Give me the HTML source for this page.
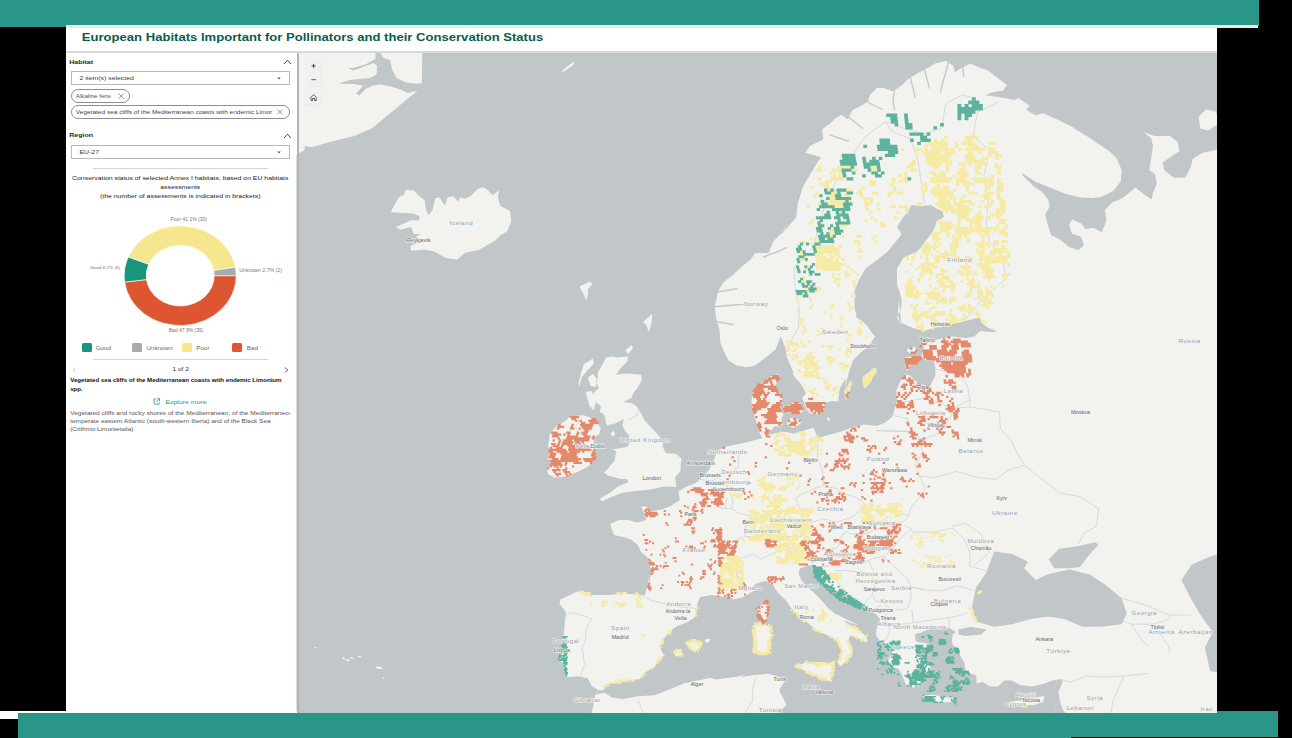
<!DOCTYPE html><html><head><meta charset="utf-8"><style>
html,body{margin:0;padding:0;}
body{width:1292px;height:738px;background:#000;position:relative;overflow:hidden;font-family:"Liberation Sans",sans-serif;}
.a{position:absolute;}
.t{position:absolute;white-space:nowrap;line-height:1;font-family:"Liberation Sans",sans-serif;}
</style></head><body>

<div class="a" style="left:0;top:0;width:1259px;height:25.5px;background:#2a9687"></div>
<div class="a" style="left:0;top:25px;width:66px;height:1.7px;background:#2a9687"></div>
<div class="a" style="left:66px;top:25.3px;width:1192px;height:2.7px;background:#e9e9e9"></div>
<div class="a" style="left:66px;top:28px;width:1151px;height:683px;background:#fff"></div>
<div class="a" style="left:0;top:710.7px;width:1217px;height:3px;background:#fff"></div>
<div class="a" style="left:0;top:713px;width:18px;height:6px;background:#fff"></div>
<div class="a" style="left:18px;top:713px;width:1053px;height:25px;background:#2a9687"></div>
<div class="a" style="left:1071px;top:713px;width:207px;height:23.8px;background:#2a9687"></div>
<div class="a" style="left:1217px;top:711px;width:61px;height:3px;background:#2a9687"></div>
<div class="t" style="left:81.80px;top:29.55px;font-size:13.08px;font-weight:bold;color:#0b5b4b;transform-origin:0 11.25px;transform:scaleY(0.89);">European Habitats Important for Pollinators and their Conservation Status</div>
<div class="a" style="left:66px;top:51px;width:1151px;height:1.8px;background:#d9d9d9"></div>
<div class="a" style="left:297.4px;top:52.5px;width:1.2px;height:660px;background:#b4b4b4"></div>
<svg class="a" style="left:298.6px;top:52.8px" width="918.4" height="660" viewBox="298.6 52.8 918.4 660"><rect x="290" y="40" width="940" height="700" fill="#c1c6c9"/><path d="M293.5 47.5 L422.1 47.5 L421.4 82.2 L418.7 85.5 L416.5 91.1 L405.3 100.1 L396.3 107.9 L385.2 116.8 L371.8 128.0 L353.9 135.8 L331.5 141.4 L311.4 147.0 L304.7 145.9 L303.6 150.3 L293.5 155.9Z" fill="#f2f2ef" /><path d="M405.2 189.6 L413.4 190.3 L418.8 195.7 L424.2 199.8 L425.5 209.3 L428.3 214.7 L432.3 209.3 L435.0 197.8 L439.1 197.1 L444.5 205.2 L447.2 197.1 L452.6 195.7 L458.1 201.2 L459.4 197.1 L464.8 198.5 L470.3 195.7 L477.0 189.0 L482.5 186.9 L487.9 190.3 L491.9 195.1 L498.7 190.3 L497.4 197.1 L500.1 205.9 L509.5 210.6 L510.9 221.5 L506.8 231.0 L500.1 235.0 L494.6 240.5 L478.4 249.9 L464.8 252.6 L456.7 259.4 L445.9 258.1 L433.7 251.3 L424.2 249.3 L410.6 250.6 L410.0 245.9 L418.8 241.8 L416.1 236.4 L420.1 233.7 L413.4 233.7 L410.6 226.9 L399.8 229.6 L395.7 226.9 L410.6 220.1 L418.8 220.1 L418.8 216.1 L413.4 213.4 L390.3 212.0 L393.0 206.6 L398.5 197.1 L403.9 194.4Z" fill="#f2f2ef" /><path d="M561.5 71.0 L566.0 67.0 L573.8 61.0 L573.0 64.5 L567.0 69.0 L562.5 72.0Z" fill="#f2f2ef" /><path d="M1198.1 116.9 L1205.7 109.3 L1215.2 111.2 L1220.0 122.6 L1207.6 130.2 L1200.0 128.3Z" fill="#f2f2ef" /><path d="M579.2 286.3 L589.3 281.4 L592.0 284.1 L587.5 289.0 L587.5 294.1 L585.9 300.8 L583.0 293.0 L580.4 289.0Z" fill="#f2f2ef" /><path d="M642.5 322.1 L651.9 313.6 L651.4 322.1 L648.5 332.1 L645.6 324.3Z" fill="#f2f2ef" /><path d="M624.9 350.1 L631.0 345.0 L633.0 347.0 L627.9 354.1Z" fill="#f2f2ef" /><path d="M605.6 357.2 L610.7 356.2 L616.7 357.2 L627.9 356.2 L626.9 361.3 L620.8 367.4 L615.7 374.5 L622.8 373.5 L631.0 373.5 L641.1 374.5 L641.1 380.6 L637.1 387.7 L633.0 392.8 L631.0 397.8 L622.8 401.9 L631.0 402.9 L636.1 406.0 L640.1 412.1 L644.2 420.0 L651.5 428.1 L657.6 434.3 L662.3 440.5 L662.3 446.7 L665.4 452.9 L676.2 453.9 L681.2 458.5 L680.2 464.8 L680.2 470.7 L674.7 477.2 L676.1 486.9 L663.8 486.4 L648.4 489.5 L632.9 491.1 L622.0 492.6 L609.7 497.3 L601.9 501.1 L598.8 498.8 L609.7 492.6 L617.4 486.4 L628.2 481.8 L626.7 478.7 L620.5 478.7 L608.1 475.6 L603.5 472.5 L606.6 469.4 L614.3 460.1 L615.9 450.8 L611.2 449.3 L617.4 448.2 L626.7 446.7 L629.8 442.0 L628.2 434.3 L625.1 431.2 L622.0 425.0 L623.6 418.8 L614.3 423.5 L606.6 425.0 L605.0 421.9 L605.6 420.0 L603.5 414.1 L599.5 412.1 L600.5 406.0 L595.4 401.9 L592.4 397.8 L593.4 392.8 L598.5 387.7 L596.4 383.6 L597.4 378.5 L597.4 372.4 L601.5 365.3 L603.5 361.3Z" fill="#f2f2ef" /><path d="M583.2 364.3 L592.4 358.2 L593.4 363.3 L585.2 372.4 L581.2 377.5 L579.1 386.7 L578.1 383.6 L580.2 374.5Z" fill="#f2f2ef" /><path d="M587.3 377.5 L592.4 373.5 L596.4 378.5 L595.4 386.7 L590.3 385.7Z" fill="#f2f2ef" /><path d="M585.2 391.7 L591.3 390.7 L595.4 401.9 L593.4 410.0 L589.3 406.0Z" fill="#f2f2ef" /><path d="M610.4 432.8 L613.5 430.4 L614.6 434.3 L611.5 436.6Z" fill="#f2f2ef" /><path d="M571.0 415.7 L583.3 415.0 L594.2 418.8 L600.4 428.1 L598.8 434.3 L592.6 437.4 L594.2 446.7 L595.0 456.0 L592.6 465.3 L595.7 452.4 L591.1 461.7 L588.0 466.3 L578.7 471.0 L567.9 475.6 L555.5 477.9 L547.7 474.1 L546.2 467.9 L550.8 464.8 L547.7 458.6 L549.3 449.3 L547.7 446.2 L549.3 434.3 L555.5 426.6 L563.2 421.9Z" fill="#f2f2ef" /><path d="M745.8 366.8 L736.8 365.6 L727.9 360.0 L723.4 351.1 L720.0 342.2 L718.9 328.8 L715.6 317.6 L714.5 306.4 L717.8 290.8 L723.4 281.8 L732.3 275.1 L741.3 266.2 L750.2 259.5 L754.7 252.8 L768.1 252.8 L772.6 241.6 L783.7 230.4 L788.0 221.5 L780.4 234.9 L796.0 217.0 L797.1 204.0 L802.7 186.1 L809.4 174.9 L816.1 163.8 L820.6 157.1 L804.9 152.6 L809.4 145.9 L822.8 139.2 L821.7 129.1 L829.5 123.5 L834.0 119.1 L840.7 114.6 L847.4 119.1 L851.9 110.1 L860.8 105.6 L867.5 101.2 L869.8 94.5 L876.5 87.8 L883.2 87.8 L892.1 91.1 L901.0 85.5 L907.8 78.8 L918.9 72.1 L927.9 67.6 L934.6 63.2 L945.8 60.9 L952.5 65.4 L954.7 72.1 L961.4 67.6 L970.3 63.2 L979.3 67.6 L987.6 70.4 L999.0 79.0 L1006.6 84.7 L1002.8 90.3 L991.4 92.2 L985.0 95.0 L1004.7 97.9 L1014.1 99.8 L1017.9 97.9 L1029.3 105.5 L1025.5 109.3 L1035.0 115.0 L1042.6 113.1 L1055.9 118.8 L1071.0 126.4 L1086.2 135.9 L1097.6 143.4 L1109.0 151.0 L1116.5 158.6 L1143.1 132.1 L1154.5 135.9 L1169.6 135.9 L1177.2 141.5 L1179.1 151.0 L1173.4 154.8 L1162.1 162.4 L1164.0 170.0 L1173.4 177.6 L1184.8 177.6 L1190.5 166.2 L1192.4 158.6 L1201.9 152.9 L1218.0 149.1 L1230.0 148.0 L1230.0 730.0 L588.0 730.0 L589.8 717.8 L592.6 707.4 L594.8 694.4 L596.3 691.8 L598.0 690.0 L591.5 685.7 L587.2 678.1 L578.5 676.0 L565.5 677.0 L563.3 664.0 L556.8 657.5 L561.2 646.7 L563.3 633.7 L564.4 622.9 L565.5 612.0 L559.0 603.3 L560.1 599.0 L569.8 594.7 L576.4 591.4 L591.5 594.7 L606.7 594.7 L624.0 593.6 L644.6 594.7 L647.9 581.7 L649.0 573.0 L648.3 584.2 L650.8 574.3 L649.5 564.4 L647.1 557.0 L640.9 552.0 L637.2 544.6 L631.0 539.6 L624.8 537.2 L613.6 534.7 L611.1 528.5 L609.9 523.5 L618.6 519.8 L627.2 519.8 L637.2 522.3 L645.8 519.8 L644.6 514.9 L640.9 506.2 L645.8 506.2 L649.5 511.1 L659.4 509.9 L669.3 506.2 L679.3 500.0 L678.1 491.0 L685.2 486.9 L695.4 482.8 L703.5 475.7 L708.6 469.6 L712.7 462.5 L714.7 456.4 L718.8 449.3 L726.9 446.3 L735.0 444.2 L741.1 443.2 L749.3 441.2 L757.4 439.1 L761.9 438.1 L758.8 431.9 L755.7 421.1 L752.6 411.8 L751.1 401.0 L751.6 395.4 L754.5 385.9 L762.1 382.1 L769.7 376.4 L777.3 374.0 L780.1 375.4 L793.0 372.0 L786.5 357.4 L784.9 347.6 L782.5 341.1 L780.0 336.3 L778.4 341.1 L775.2 349.3 L765.4 357.4 L754.0 365.5 L744.3 367.2 L737.8 363.9 L728.0 359.0Z" fill="#f2f2ef" /><path d="M378.0 49.8 L382.9 57.6 L389.6 59.8 L391.9 69.9 L396.3 77.7 L405.3 82.2 L414.2 83.3 L421.6 83.3 L417.6 90.4 L407.5 92.7 L398.6 88.9 L387.4 85.5 L378.5 84.4 L371.8 85.5 L365.1 88.9 L358.8 95.6 L355.7 93.4 L362.8 85.5 L353.9 83.7 L338.2 83.3 L349.4 79.9 L369.5 77.7 L376.2 74.4 L376.7 65.4 L372.9 62.7 L360.6 67.6 L352.8 70.3 L347.6 68.1 L353.4 67.6 L365.1 64.3 L375.1 58.7 L375.1 49.8Z" fill="#c1c6c9" /><ellipse cx="315" cy="647.3" rx="1.2" ry="0.8" transform="rotate(0 315 647.3)" fill="#f2f2ef"/><ellipse cx="343.2" cy="658.1" rx="1.6" ry="0.9" transform="rotate(30 343.2 658.1)" fill="#f2f2ef"/><ellipse cx="347.5" cy="659.9" rx="2.1" ry="0.9" transform="rotate(20 347.5 659.9)" fill="#f2f2ef"/><ellipse cx="351.6" cy="657.9" rx="2.0" ry="0.7" transform="rotate(20 351.6 657.9)" fill="#f2f2ef"/><ellipse cx="359.3" cy="656.3" rx="2.1" ry="0.8" transform="rotate(0 359.3 656.3)" fill="#f2f2ef"/><ellipse cx="378.6" cy="667.6" rx="3.6" ry="1.1" transform="rotate(10 378.6 667.6)" fill="#f2f2ef"/><ellipse cx="383" cy="677.8" rx="1.0" ry="0.8" transform="rotate(0 383 677.8)" fill="#f2f2ef"/><path d="M780.1 375.4 L776.3 382.1 L775.4 385.9 L777.3 391.6 L782.0 395.4 L781.1 403.0 L780.1 407.7 L783.0 414.3 L781.1 418.1 L782.0 423.8 L780.1 426.7 L774.4 425.7 L769.7 431.4 L766.8 435.0 L780.5 431.9 L786.7 431.9 L792.9 433.5 L799.1 431.9 L808.4 428.8 L813.0 427.3 L817.6 438.1 L826.9 435.0 L839.3 431.9 L851.7 427.3 L864.1 424.2 L876.5 425.7 L884.2 422.6 L892.0 416.4 L896.6 401.0 L895.8 390.7 L898.6 383.7 L901.4 378.1 L904.2 374.0 L909.8 375.3 L918.1 383.7 L929.3 386.5 L932.1 380.9 L934.9 375.3 L934.9 367.0 L933.5 360.0 L926.5 361.4 L920.9 355.8 L923.7 346.0 L918.1 346.0 L923.7 341.9 L937.7 339.1 L951.6 336.3 L965.6 337.7 L973.9 336.3 L979.5 330.7 L993.5 332.1 L996.3 330.7 L987.9 327.9 L980.9 322.3 L979.5 316.7 L965.6 320.9 L951.6 323.7 L937.7 326.5 L923.7 330.7 L912.6 327.9 L900.0 322.3 L897.2 314.0 L898.6 300.0 L901.0 324.3 L896.6 317.6 L901.0 306.4 L901.0 297.5 L896.6 284.1 L896.6 268.4 L903.3 257.2 L916.3 251.5 L921.8 246.1 L925.0 240.7 L931.5 233.1 L934.8 226.6 L935.8 221.2 L943.4 216.8 L942.3 211.4 L935.8 208.2 L930.4 204.9 L920.7 206.0 L910.9 204.9 L907.7 211.4 L902.3 217.9 L896.8 226.6 L901.2 234.2 L895.8 240.7 L887.1 251.5 L876.3 260.0 L865.3 268.4 L858.6 279.6 L854.1 290.8 L854.1 306.4 L856.3 317.6 L863.1 322.1 L867.5 326.5 L872.0 333.2 L874.9 336.3 L867.9 346.0 L858.1 354.4 L852.6 360.0 L848.4 372.6 L845.6 383.7 L844.2 397.7 L845.5 377.7 L839.3 388.6 L837.8 400.2 L839.9 401.1 L830.4 401.1 L824.7 403.0 L822.8 410.5 L817.1 414.3 L809.5 413.4 L805.7 408.6 L803.8 403.0 L801.9 397.3 L805.7 393.5 L802.9 387.8 L799.1 382.1 L795.3 378.3 L792.4 373.5 L793.2 370.8 L780.0 374.2Z" fill="#c1c6c9" /><path d="M1116.5 158.6 L1121.3 170.0 L1120.3 181.4 L1112.8 190.9 L1101.4 196.5 L1092.5 197.7 L1079.1 197.0 L1064.2 193.2 L1049.3 187.3 L1034.4 181.3 L1021.0 172.4 L1022.5 175.3 L1032.9 185.8 L1041.8 191.7 L1047.8 199.2 L1049.3 206.6 L1044.8 214.1 L1047.8 226.0 L1050.8 235.0 L1059.7 239.4 L1068.7 246.9 L1077.6 249.9 L1083.6 245.4 L1080.6 236.5 L1071.6 233.5 L1068.7 224.5 L1071.6 219.3 L1080.6 223.0 L1085.1 229.0 L1092.5 227.5 L1101.5 232.0 L1105.9 220.1 L1104.4 209.6 L1111.9 202.2 L1122.3 197.7 L1135.0 187.3 L1144.5 194.7 L1151.2 199.2 L1152.6 192.8 L1156.4 183.3 L1154.5 173.8 L1148.8 170.0 L1150.7 158.6 L1152.6 145.3 L1150.7 137.8 L1143.1 132.1Z" fill="#c1c6c9" /><path d="M596.3 691.8 L598.0 690.0 L602.4 690.0 L606.7 685.7 L604.1 685.8 L613.5 681.7 L627.1 680.3 L639.3 679.0 L644.7 672.2 L654.2 666.8 L658.2 660.0 L663.7 654.6 L661.0 650.5 L659.6 645.1 L663.7 638.3 L669.1 631.6 L675.9 626.2 L686.7 622.1 L694.8 616.7 L696.5 608.5 L697.5 602.0 L699.9 596.8 L710.7 594.7 L723.7 596.8 L734.6 599.0 L743.2 596.8 L754.1 590.3 L758.4 583.8 L767.1 583.8 L749.9 588.3 L756.1 583.3 L764.8 580.9 L772.2 584.6 L777.2 592.0 L784.6 599.4 L792.0 609.3 L799.4 616.8 L809.3 624.2 L816.8 631.0 L818.6 631.2 L829.8 636.2 L837.3 641.2 L841.0 647.4 L839.8 657.4 L837.3 662.4 L839.8 666.1 L844.8 662.4 L847.2 657.4 L852.2 652.4 L849.7 644.9 L847.2 641.2 L849.7 635.0 L859.7 638.7 L867.2 642.4 L866.0 636.2 L858.5 630.0 L849.7 625.0 L842.3 620.0 L858.9 625.4 L849.0 620.5 L841.5 616.8 L834.1 613.1 L826.7 606.9 L820.5 599.4 L813.1 592.0 L805.6 585.8 L800.7 579.6 L798.2 573.4 L799.4 568.5 L805.6 566.0 L809.3 564.8 L814.3 566.0 L816.8 572.2 L820.5 578.4 L829.2 585.8 L837.8 592.0 L846.5 597.0 L856.4 603.2 L867.6 609.3 L876.2 614.3 L879.9 619.3 L875.9 630.0 L875.8 635.8 L879.6 640.5 L884.3 643.6 L888.9 648.2 L892.0 651.3 L890.5 654.4 L888.2 659.1 L887.4 663.7 L892.0 666.8 L897.4 668.3 L899.8 671.4 L902.1 676.1 L904.4 682.0 L907.0 686.0 L910.0 684.0 L913.0 688.6 L916.0 683.0 L918.0 687.0 L920.0 681.0 L917.5 676.0 L916.8 677.6 L915.2 673.0 L916.8 668.3 L915.2 663.7 L921.4 665.2 L924.5 666.8 L926.1 669.1 L923.0 671.4 L924.5 675.3 L929.2 673.0 L930.7 668.3 L927.6 663.7 L924.5 660.6 L921.4 658.3 L916.8 656.0 L915.2 651.3 L916.0 648.2 L918.3 645.1 L923.0 646.7 L929.2 647.4 L932.3 646.7 L929.2 644.3 L924.5 642.8 L918.3 642.0 L915.2 640.5 L914.5 635.1 L916.8 632.7 L919.9 632.7 L923.0 631.2 L927.6 629.6 L933.8 628.1 L938.5 628.1 L944.7 627.3 L949.3 628.1 L952.4 629.6 L955.5 632.0 L952.4 634.3 L951.6 640.5 L952.4 645.1 L958.6 648.2 L960.1 656.0 L964.0 662.2 L964.8 668.3 L967.9 673.0 L975.0 674.5 L976.0 677.2 L976.0 683.3 L982.2 681.8 L989.9 686.4 L997.6 686.4 L1003.8 680.2 L1011.6 680.2 L1019.3 684.9 L1031.7 686.4 L1044.1 683.3 L1051.8 680.2 L1062.7 678.7 L1061.1 684.9 L1058.0 691.1 L1059.6 701.9 L1062.7 709.7 L1065.8 714.3 L1062.0 730.0 L778.0 730.0 L777.4 712.0 L783.6 707.3 L786.1 704.8 L782.4 697.3 L778.7 689.8 L783.6 682.4 L781.2 677.4 L772.4 674.9 L767.4 673.6 L752.5 674.9 L740.0 677.4 L745.4 674.9 L732.4 677.0 L715.1 679.2 L710.0 677.6 L697.5 680.3 L684.0 683.0 L667.7 689.8 L654.2 695.0 L637.0 696.1 L621.9 699.1 L611.0 697.0 L604.5 692.6 L594.8 694.4Z" fill="#c1c6c9" /><path d="M993.8 551.2 L1012.0 553.8 L1027.6 561.6 L1023.7 568.1 L1035.4 579.8 L1045.8 574.6 L1056.2 572.0 L1069.2 569.4 L1090.0 574.6 L1105.6 585.0 L1121.2 598.0 L1126.4 613.6 L1121.2 624.0 L1100.4 626.6 L1082.2 626.6 L1064.0 618.8 L1048.4 616.2 L1030.2 618.8 L1012.0 624.0 L993.8 626.6 L975.6 621.4 L971.7 605.8 L975.6 587.6 L986.0 572.0Z" fill="#c1c6c9" /><path d="M1048.4 559.0 L1058.8 548.6 L1077.0 546.0 L1095.2 542.1 L1097.8 544.7 L1087.4 556.4 L1079.6 566.8 L1069.2 568.1 L1053.6 568.1Z" fill="#c1c6c9" /><path d="M1181.1 579.8 L1191.5 564.2 L1209.7 556.4 L1230.0 550.0 L1230.0 675.0 L1209.7 670.8 L1204.5 647.4 L1212.3 631.8 L1199.3 613.6 L1188.9 595.4Z" fill="#c1c6c9" /><path d="M958.0 629.2 L970.4 626.6 L986.0 629.2 L980.8 634.4 L965.2 635.7 L958.0 634.4Z" fill="#c1c6c9" /><path d="M947.9 62.5 L946.1 69.3 L942.7 81.5 L940.1 91.9 M960.8 57.2 L961.8 64.1 L963.5 76.3 M894.1 83.2 L894.1 90.2 L892.4 100.6 L894.1 109.3 M909.7 76.4 L911.4 83.2 L914.9 97.1 M865.3 100.8 L871.5 104.0 L882.0 109.3 M763.1 256.9 L769.6 254.2 L777.7 251.5 L785.9 247.4 M708.6 307.0 L715.6 306.4 L727.9 305.3 L743.5 304.2 M712.1 320.8 L719.0 322.0 L732.3 324.3 M716.5 292.0 L723.4 290.8 L736.8 288.5 M923.2 66.2 L925.0 73.0 L929.0 88.0 M846.5 115.6 L852.0 120.0 L862.0 128.0 M829.4 134.8 L836.0 137.0 L848.0 141.0" fill="none" stroke="#c1c6c9" stroke-width="1.3" stroke-linecap="round"/><path d="M783.0 406.7 L789.6 404.8 L794.3 402.0 L801.0 403.0 L801.9 406.7 L802.9 410.5 L799.1 414.3 L794.3 413.4 L786.7 412.4 L783.0 410.5Z" fill="#f2f2ef" /><path d="M786.7 421.0 L790.5 418.1 L798.1 419.1 L801.9 421.0 L797.2 425.7 L790.5 426.7 L786.7 423.8Z" fill="#f2f2ef" /><path d="M826.6 416.7 L829.0 417.2 L829.4 420.5 L827.4 420.5Z" fill="#f2f2ef" /><path d="M844.2 390.7 L851.2 379.5 L849.8 389.3 L845.6 400.5Z" fill="#f2f2ef" /><path d="M862.3 376.7 L874.9 367.0 L876.3 371.2 L867.9 383.7 L863.7 387.9Z" fill="#f2f2ef" /><path d="M905.1 357.1 L919.3 355.7 L920.7 359.8 L913.9 364.6 L908.5 365.2 L907.1 370.7 L905.1 367.9Z" fill="#f2f2ef" /><path d="M906.4 349.0 L913.9 346.3 L917.3 350.3 L912.5 353.7 L907.1 351.7Z" fill="#f2f2ef" /><path d="M753.7 625.0 L762.4 622.5 L769.9 627.5 L771.2 635.0 L768.7 642.4 L768.7 651.2 L761.2 653.7 L753.7 651.2 L755.0 642.4 L753.7 633.7Z" fill="#f2f2ef" /><path d="M757.3 608.1 L766.0 600.7 L767.2 605.6 L766.0 619.3 L763.5 621.7 L758.6 616.8 L757.3 611.8Z" fill="#f2f2ef" /><path d="M796.1 666.1 L804.8 662.4 L814.8 664.3 L824.8 663.6 L833.5 662.4 L832.3 669.9 L831.0 674.9 L829.8 681.1 L822.3 678.6 L813.6 674.9 L802.4 669.9Z" fill="#f2f2ef" /><path d="M686.7 643.0 L693.0 639.7 L700.9 643.5 L697.0 650.5 L690.0 648.0Z" fill="#f2f2ef" /><path d="M704.3 639.5 L710.0 638.3 L709.0 642.0 L705.0 642.4Z" fill="#f2f2ef" /><path d="M673.8 652.0 L679.0 649.9 L680.6 654.0 L675.0 656.6Z" fill="#f2f2ef" /><path d="M922.6 695.2 L933.1 694.5 L943.6 697.1 L955.4 697.1 L952.8 701.7 L941.0 702.4 L929.1 700.4 L923.9 699.1Z" fill="#f2f2ef" /><path d="M1008.5 701.9 L1019.3 700.4 L1028.6 698.8 L1034.8 697.3 L1044.1 695.7 L1042.5 701.9 L1033.3 705.0 L1019.3 705.0 L1010.0 705.0Z" fill="#f2f2ef" /><path d="M819.8 688.6 L824.2 690.5 L824.8 692.6 L821.7 692.1Z" fill="#f2f2ef" /><path d="M786.0 348.5 L798.0 327.2 L799.1 309.4 L794.7 288.9 L793.6 267.7 L813.3 245.8 L819.8 223.1 L825.3 199.5 L839.5 175.0 L855.9 149.5 L864.6 136.3 L885.4 121.4 M924.7 204.3 L921.4 187.4 L918.1 162.4 L910.5 138.9 L890.8 130.9 L885.4 121.4 M885.4 121.4 L903.9 128.2 L923.6 133.6 L941.1 128.2 L945.4 103.4 L961.8 94.9 L973.8 97.7 L977.1 111.8 L989.1 106.2 L998.9 100.6 M977.1 111.8 L972.7 136.3 L989.1 149.5 L983.6 175.0 L988.0 199.5 L985.8 223.1 L989.1 241.3 L1002.2 256.8 L1005.5 278.4 L981.5 299.2 L965.1 319.4 M967.3 340.8 L961.8 350.4 L962.9 367.2 L961.8 376.3 M961.8 376.3 L945.4 370.8 L934.5 369.0 L926.9 370.8 M961.8 376.3 L967.3 387.2 L969.4 399.6 L956.3 406.6 L952.0 408.3 M952.0 408.3 L940.0 403.1 L923.6 397.8 L907.2 401.3 L891.4 402.2 M952.0 408.3 L949.8 418.6 L942.1 427.1 L941.1 432.2 L923.6 438.8 L918.1 437.2 M893.0 415.2 L907.2 418.6 L910.5 430.5 L918.1 437.2 M875.5 430.5 L910.5 431.3 M918.1 437.2 L922.5 452.0 L914.8 464.9 L919.2 476.0 M919.2 476.0 L924.7 488.5 L920.3 496.1 L910.5 506.8 L908.3 515.8 M908.3 515.8 L890.8 509.8 L874.4 509.8 L866.8 506.8 L861.3 500.7 L852.6 496.1 L841.7 493.1 L836.2 488.5 L823.1 485.4 M823.1 485.4 L822.0 469.6 L816.6 456.8 L817.7 445.4 L816.6 438.8 M755.4 423.7 L769.6 423.7 M740.1 448.7 L737.9 460.1 L737.9 466.5 L729.2 472.8 L728.1 482.2 L727.0 488.5 M727.0 488.5 L731.4 496.1 L732.5 503.8 L731.4 508.3 L737.9 512.8 L751.0 515.8 L744.5 527.6 L744.5 536.3 M744.5 536.3 L755.4 536.3 L765.2 536.3 L774.0 537.8 L787.1 536.3 L801.3 536.3 L807.8 526.1 L812.2 521.7 M812.2 521.7 L801.3 511.3 L794.7 497.7 L803.5 493.1 L817.7 486.9 L823.1 485.4 M812.2 521.7 L823.1 518.7 L836.2 521.7 L846.0 518.7 M846.0 518.7 L853.7 515.8 L860.2 508.3 L866.8 506.8 M848.2 533.4 L866.8 533.4 L875.5 529.1 L888.6 526.1 L902.8 521.7 L908.3 515.8 M848.2 530.5 L841.7 534.9 L838.4 545.0 L836.2 547.8 L819.8 550.7 L811.1 552.1 M811.1 552.1 L795.8 549.3 L781.6 546.4 L775.1 546.4 L766.3 540.7 M744.5 536.3 L737.9 539.2 L732.5 546.4 L728.1 553.5 L737.9 559.2 L753.2 553.5 L759.8 559.2 L775.1 552.1 L775.1 546.4 M737.9 559.2 L735.8 570.4 L736.8 580.0 L743.4 589.5 M688.8 483.8 L696.4 490.0 L706.3 496.1 L713.9 502.2 L721.6 508.3 L731.4 508.3 M698.6 479.1 L710.6 480.7 L717.2 477.5 L724.8 482.2 L727.0 488.5 M641.8 594.9 L650.6 600.3 L668.1 604.3 L681.2 607.0 L696.4 608.3 M565.4 614.9 L572.0 612.3 L585.1 616.2 L591.6 618.8 L586.2 626.6 L585.1 639.5 L581.8 648.4 L582.9 655.9 L584.0 664.6 L580.7 674.5 M811.1 552.1 L810.0 556.4 L812.2 564.8 M810.0 566.2 L828.6 566.2 L832.9 560.6 L839.5 553.5 L842.8 552.1 M842.8 552.1 L850.4 557.8 L863.5 562.0 L874.4 557.8 L883.2 556.4 M883.2 556.4 L893.0 547.8 L901.7 536.3 L911.6 529.1 L903.9 524.7 M911.6 532.0 L933.4 532.0 L952.0 527.6 L962.9 537.8 L969.4 552.1 L969.4 566.2 L985.8 570.4 M952.0 526.1 L965.1 523.2 L980.4 533.4 L989.1 552.1 L972.7 566.2 M883.2 556.4 L895.2 567.6 L907.2 578.6 L910.5 586.8 L923.6 589.5 L940.0 590.9 L956.3 585.5 L967.3 588.2 L973.8 590.9 M867.9 560.6 L873.3 570.4 L871.2 574.5 L874.4 582.7 L872.3 593.6 L874.4 600.3 M834.0 570.4 L846.0 570.4 L858.1 571.7 L869.0 573.1 M834.0 575.9 L839.5 585.5 L848.2 593.6 L853.7 600.3 L862.4 607.0 M862.4 607.0 L866.8 600.3 L871.2 594.9 M874.4 600.3 L883.2 603.0 L890.8 609.6 L900.6 609.6 L907.2 608.3 L910.5 597.6 L910.5 586.8 M872.3 613.6 L876.6 607.0 L881.0 605.6 M885.4 612.3 L885.4 622.7 L889.7 629.2 L886.5 638.2 L882.1 644.6 M889.7 626.6 L901.7 624.0 L912.7 622.7 L911.6 609.6 M912.7 622.7 L929.0 620.1 L948.7 617.5 L948.7 626.6 L945.4 629.2 M948.7 617.5 L961.8 614.9 L967.3 612.3 M919.2 476.0 L934.5 477.5 L956.3 471.2 L978.2 477.5 L995.7 479.1 L1008.8 469.6 L1024.0 464.9 M1024.0 464.9 L1043.7 480.7 L1060.1 493.1 L1078.6 496.1 L1098.3 508.3 L1096.1 526.1 L1083.0 533.4 L1078.6 543.6 M969.4 406.6 L998.9 411.8 L1000.0 428.8 L1010.9 440.5 L1016.4 452.0 L1024.0 464.9 M1113.6 599.0 L1120.1 597.6 L1147.4 605.6 L1169.3 614.9 L1191.1 614.9 M1120.1 620.1 L1131.1 624.0 L1138.7 635.6 L1147.4 645.8 M1131.1 624.0 L1152.9 624.0 L1169.3 618.8 L1169.3 614.9 M1152.9 624.0 L1159.5 633.1 L1168.2 645.8 L1169.3 653.4 M1056.8 679.4 L1071.0 681.8 L1085.2 675.7 L1103.8 676.9 L1123.4 675.7 L1147.4 673.3 M1054.6 705.9 L1054.6 721.2 M1123.4 675.7 L1112.5 701.1 L1109.2 720.0 M755.4 678.2 L752.1 689.1 L752.1 701.1 L744.5 713.0 L745.6 724.7 M637.5 699.9 L642.9 713.0 L647.3 730.5 M581.8 416.9 L575.2 427.1 L578.5 433.8 L586.2 435.5 L592.7 437.2 M627.6 420.3 L636.4 415.2 L639.7 406.6 M727.0 497.7 L724.8 503.8 L725.9 508.3 M962.9 367.2 L961.8 376.3 M969.4 399.6 L969.4 406.6 L952.0 408.3 M910.5 431.3 L875.5 430.5 M910.5 586.8 L923.6 589.5 M1053.5 689.1 L1056.8 679.4 M1054.6 721.2 L1044.8 724.7" fill="none" stroke="#cdd2d6" stroke-width="0.75" stroke-linejoin="round"/><path fill="#f5eba6" d="M943.7 135.3h3.7v3.4h-3.7zM964.3 135.3h14.0v3.4h-14.0zM933.6 138.4h3.7v3.4h-3.7zM940.4 138.4h3.7v3.4h-3.7zM964.3 138.4h7.1v3.4h-7.1zM927.0 141.5h20.6v3.3h-20.6zM954.1 141.5h3.6v3.3h-3.6zM960.9 141.5h13.8v3.3h-13.8zM988.1 141.5h7.0v3.3h-7.0zM923.8 144.5h3.6v3.3h-3.6zM930.6 144.5h17.1v3.3h-17.1zM954.2 144.5h3.6v3.3h-3.6zM967.7 144.5h10.4v3.3h-10.4zM900.5 147.5h3.6v3.3h-3.6zM913.9 147.5h7.0v3.3h-7.0zM924.0 147.5h3.6v3.3h-3.6zM930.8 147.5h23.8v3.3h-23.8zM957.7 147.5h3.6v3.3h-3.6zM964.4 147.5h20.4v3.3h-20.4zM987.9 147.5h7.0v3.3h-7.0zM920.9 150.5h20.3v3.3h-20.3zM944.3 150.5h10.3v3.3h-10.3zM967.8 150.5h3.6v3.3h-3.6zM977.8 150.5h3.6v3.3h-3.6zM987.8 150.5h10.3v3.3h-10.3zM914.5 153.5h3.6v3.3h-3.6zM924.5 153.5h26.9v3.3h-26.9zM964.5 153.5h10.2v3.3h-10.2zM987.8 153.5h3.6v3.3h-3.6zM994.4 153.5h6.9v3.3h-6.9zM924.7 156.5h23.4v3.3h-23.4zM964.5 156.5h10.2v3.3h-10.2zM981.1 156.5h6.9v3.3h-6.9zM994.3 156.5h3.6v3.3h-3.6zM911.8 159.5h3.5v3.3h-3.5zM925.0 159.5h26.6v3.3h-26.6zM964.5 159.5h20.0v3.3h-20.0zM908.8 162.4h6.8v3.2h-6.8zM928.5 162.4h13.4v3.2h-13.4zM944.9 162.4h6.8v3.2h-6.8zM958.0 162.4h6.8v3.2h-6.8zM967.9 162.4h3.5v3.2h-3.5zM974.4 162.4h13.4v3.2h-13.4zM994.1 162.4h3.5v3.2h-3.5zM817.7 165.4h3.5v3.2h-3.5zM837.3 165.4h13.3v3.2h-13.3zM869.9 165.4h6.8v3.2h-6.8zM905.9 165.4h6.8v3.2h-6.8zM932.0 165.4h6.8v3.2h-6.8zM945.0 165.4h3.5v3.2h-3.5zM961.4 165.4h3.5v3.2h-3.5zM974.4 165.4h6.8v3.2h-6.8zM994.0 165.4h6.8v3.2h-6.8zM815.2 168.3h6.7v3.2h-6.7zM831.5 168.3h10.0v3.2h-10.0zM850.9 168.3h6.7v3.2h-6.7zM870.4 168.3h6.7v3.2h-6.7zM909.4 168.3h6.7v3.2h-6.7zM945.2 168.3h3.5v3.2h-3.5zM958.2 168.3h6.7v3.2h-6.7zM974.4 168.3h3.5v3.2h-3.5zM997.2 168.3h3.5v3.2h-3.5zM828.9 171.2h3.5v3.2h-3.5zM838.6 171.2h3.5v3.2h-3.5zM903.3 171.2h3.5v3.2h-3.5zM929.1 171.2h6.7v3.2h-6.7zM938.8 171.2h6.7v3.2h-6.7zM955.0 171.2h13.2v3.2h-13.2zM974.4 171.2h6.7v3.2h-6.7zM997.0 171.2h3.5v3.2h-3.5zM832.8 174.1h3.5v3.2h-3.5zM839.3 174.1h3.5v3.2h-3.5zM897.2 174.1h3.5v3.2h-3.5zM903.6 174.1h3.5v3.2h-3.5zM932.6 174.1h13.1v3.2h-13.1zM951.9 174.1h3.5v3.2h-3.5zM958.3 174.1h9.9v3.2h-9.9zM990.5 174.1h3.5v3.2h-3.5zM817.5 177.0h3.5v3.2h-3.5zM830.3 177.0h13.1v3.2h-13.1zM891.1 177.0h3.5v3.2h-3.5zM900.8 177.0h6.7v3.2h-6.7zM929.6 177.0h22.7v3.2h-22.7zM955.2 177.0h9.9v3.2h-9.9zM971.2 177.0h22.7v3.2h-22.7zM996.8 177.0h3.5v3.2h-3.5zM824.6 179.9h6.6v3.2h-6.6zM869.2 179.9h6.6v3.2h-6.6zM891.6 179.9h3.4v3.2h-3.4zM897.9 179.9h3.4v3.2h-3.4zM904.3 179.9h3.4v3.2h-3.4zM929.8 179.9h19.4v3.2h-19.4zM955.3 179.9h13.0v3.2h-13.0zM974.4 179.9h19.4v3.2h-19.4zM996.8 179.9h3.4v3.2h-3.4zM819.0 182.7h9.8v3.1h-9.8zM869.7 182.7h6.6v3.1h-6.6zM888.8 182.7h3.4v3.1h-3.4zM920.5 182.7h6.6v3.1h-6.6zM936.4 182.7h3.4v3.1h-3.4zM955.4 182.7h3.4v3.1h-3.4zM961.8 182.7h12.9v3.1h-12.9zM984.0 182.7h9.8v3.1h-9.8zM996.7 182.7h6.6v3.1h-6.6zM810.2 185.6h3.4v3.1h-3.4zM822.9 185.6h6.6v3.1h-6.6zM860.8 185.6h3.4v3.1h-3.4zM892.4 185.6h3.4v3.1h-3.4zM923.9 185.6h3.4v3.1h-3.4zM933.4 185.6h6.6v3.1h-6.6zM942.9 185.6h6.6v3.1h-6.6zM965.0 185.6h3.4v3.1h-3.4zM987.1 185.6h3.4v3.1h-3.4zM996.6 185.6h6.6v3.1h-6.6zM826.7 188.4h3.4v3.1h-3.4zM833.0 188.4h3.4v3.1h-3.4zM845.6 188.4h6.5v3.1h-6.5zM858.2 188.4h3.4v3.1h-3.4zM892.7 188.4h3.4v3.1h-3.4zM921.0 188.4h6.5v3.1h-6.5zM930.5 188.4h19.1v3.1h-19.1zM952.5 188.4h3.4v3.1h-3.4zM965.1 188.4h3.4v3.1h-3.4zM983.9 188.4h3.4v3.1h-3.4zM996.5 188.4h6.5v3.1h-6.5zM814.9 191.2h3.4v3.1h-3.4zM830.6 191.2h6.5v3.1h-6.5zM855.6 191.2h6.5v3.1h-6.5zM871.2 191.2h6.5v3.1h-6.5zM886.9 191.2h6.5v3.1h-6.5zM896.3 191.2h6.5v3.1h-6.5zM921.3 191.2h3.4v3.1h-3.4zM930.7 191.2h22.2v3.1h-22.2zM968.2 191.2h9.6v3.1h-9.6zM983.9 191.2h9.6v3.1h-9.6zM996.4 191.2h3.4v3.1h-3.4zM812.6 194.0h3.4v3.1h-3.4zM828.1 194.0h6.5v3.1h-6.5zM843.7 194.0h6.5v3.1h-6.5zM859.3 194.0h3.4v3.1h-3.4zM887.3 194.0h3.4v3.1h-3.4zM934.0 194.0h18.9v3.1h-18.9zM962.1 194.0h3.4v3.1h-3.4zM980.8 194.0h9.6v3.1h-9.6zM996.3 194.0h3.4v3.1h-3.4zM828.8 196.8h6.5v3.1h-6.5zM862.9 196.8h9.6v3.1h-9.6zM937.3 196.8h9.6v3.1h-9.6zM949.7 196.8h6.5v3.1h-6.5zM959.1 196.8h3.4v3.1h-3.4zM983.9 196.8h6.5v3.1h-6.5zM996.3 196.8h6.5v3.1h-6.5zM829.5 199.6h15.7v3.1h-15.7zM848.0 199.6h3.3v3.1h-3.3zM863.5 199.6h3.3v3.1h-3.3zM869.6 199.6h3.3v3.1h-3.3zM937.5 199.6h12.6v3.1h-12.6zM953.0 199.6h3.3v3.1h-3.3zM959.1 199.6h12.6v3.1h-12.6zM980.8 199.6h3.3v3.1h-3.3zM990.0 199.6h3.3v3.1h-3.3zM999.3 199.6h6.4v3.1h-6.4zM817.9 202.4h3.3v3.1h-3.3zM827.1 202.4h15.6v3.1h-15.6zM864.0 202.4h6.4v3.1h-6.4zM876.3 202.4h3.3v3.1h-3.3zM916.2 202.4h6.4v3.1h-6.4zM934.7 202.4h15.6v3.1h-15.6zM953.1 202.4h9.5v3.1h-9.5zM968.5 202.4h6.4v3.1h-6.4zM986.9 202.4h6.4v3.1h-6.4zM999.2 202.4h6.4v3.1h-6.4zM806.4 205.1h3.3v3.0h-3.3zM833.9 205.1h9.4v3.0h-9.4zM864.5 205.1h3.3v3.0h-3.3zM889.0 205.1h6.4v3.0h-6.4zM898.2 205.1h9.4v3.0h-9.4zM937.9 205.1h15.5v3.0h-15.5zM956.3 205.1h12.5v3.0h-12.5zM977.7 205.1h3.3v3.0h-3.3zM983.8 205.1h6.4v3.0h-6.4zM999.1 205.1h6.4v3.0h-6.4zM865.0 207.9h3.3v3.0h-3.3zM877.2 207.9h3.3v3.0h-3.3zM904.6 207.9h3.3v3.0h-3.3zM941.2 207.9h30.7v3.0h-30.7zM996.0 207.9h9.4v3.0h-9.4zM838.3 210.6h3.3v3.0h-3.3zM844.3 210.6h3.3v3.0h-3.3zM868.6 210.6h3.3v3.0h-3.3zM895.9 210.6h3.3v3.0h-3.3zM905.0 210.6h3.3v3.0h-3.3zM944.4 210.6h3.3v3.0h-3.3zM950.5 210.6h18.4v3.0h-18.4zM977.8 210.6h3.3v3.0h-3.3zM995.9 210.6h9.3v3.0h-9.3zM956.7 213.3h12.3v3.0h-12.3zM974.8 213.3h6.3v3.0h-6.3zM989.9 213.3h12.3v3.0h-12.3zM869.6 216.0h3.3v3.0h-3.3zM893.7 216.0h3.3v3.0h-3.3zM956.8 216.0h12.3v3.0h-12.3zM971.8 216.0h12.3v3.0h-12.3zM986.8 216.0h3.3v3.0h-3.3zM995.8 216.0h3.3v3.0h-3.3zM810.3 218.7h3.2v3.0h-3.2zM816.3 218.7h3.2v3.0h-3.2zM864.1 218.7h3.2v3.0h-3.2zM873.1 218.7h3.2v3.0h-3.2zM938.9 218.7h3.2v3.0h-3.2zM956.9 218.7h3.2v3.0h-3.2zM965.9 218.7h15.2v3.0h-15.2zM998.8 218.7h6.2v3.0h-6.2zM808.1 221.4h3.2v3.0h-3.2zM820.0 221.4h3.2v3.0h-3.2zM879.6 221.4h3.2v3.0h-3.2zM936.2 221.4h15.1v3.0h-15.1zM957.0 221.4h3.2v3.0h-3.2zM968.9 221.4h12.2v3.0h-12.2zM998.7 221.4h6.2v3.0h-6.2zM838.5 224.0h9.1v3.0h-9.1zM880.0 224.0h6.2v3.0h-6.2zM939.4 224.0h15.1v3.0h-15.1zM957.2 224.0h3.2v3.0h-3.2zM969.0 224.0h3.2v3.0h-3.2zM974.9 224.0h6.2v3.0h-6.2zM995.7 224.0h3.2v3.0h-3.2zM1004.6 224.0h3.2v3.0h-3.2zM939.6 226.7h12.1v2.9h-12.1zM954.3 226.7h44.6v2.9h-44.6zM1001.6 226.7h6.2v2.9h-6.2zM828.0 229.4h6.1v2.9h-6.1zM939.8 229.4h9.1v2.9h-9.1zM954.5 229.4h35.5v2.9h-35.5zM992.7 229.4h3.2v2.9h-3.2zM998.6 229.4h6.1v2.9h-6.1zM828.7 232.0h6.1v2.9h-6.1zM931.2 232.0h9.0v2.9h-9.0zM945.8 232.0h3.2v2.9h-3.2zM954.6 232.0h14.9v2.9h-14.9zM978.0 232.0h3.2v2.9h-3.2zM983.9 232.0h6.1v2.9h-6.1zM998.5 232.0h9.0v2.9h-9.0zM829.4 234.6h3.2v2.9h-3.2zM841.0 234.6h3.2v2.9h-3.2zM855.6 234.6h6.1v2.9h-6.1zM873.1 234.6h3.2v2.9h-3.2zM931.4 234.6h6.1v2.9h-6.1zM946.0 234.6h3.2v2.9h-3.2zM951.8 234.6h3.2v2.9h-3.2zM957.7 234.6h3.2v2.9h-3.2zM963.5 234.6h3.2v2.9h-3.2zM981.0 234.6h3.2v2.9h-3.2zM1004.3 234.6h3.2v2.9h-3.2zM809.7 237.2h3.2v2.9h-3.2zM824.2 237.2h3.2v2.9h-3.2zM870.7 237.2h3.2v2.9h-3.2zM931.7 237.2h9.0v2.9h-9.0zM952.0 237.2h9.0v2.9h-9.0zM966.5 237.2h3.2v2.9h-3.2zM981.0 237.2h3.2v2.9h-3.2zM801.8 239.8h3.1v2.9h-3.1zM816.2 239.8h3.1v2.9h-3.1zM853.8 239.8h6.0v2.9h-6.0zM874.1 239.8h3.1v2.9h-3.1zM934.8 239.8h3.1v2.9h-3.1zM952.2 239.8h6.0v2.9h-6.0zM966.6 239.8h3.1v2.9h-3.1zM981.1 239.8h3.1v2.9h-3.1zM992.7 239.8h6.0v2.9h-6.0zM1001.3 239.8h6.0v2.9h-6.0zM796.8 242.4h3.1v2.9h-3.1zM808.3 242.4h6.0v2.9h-6.0zM831.4 242.4h3.1v2.9h-3.1zM857.3 242.4h3.1v2.9h-3.1zM923.5 242.4h6.0v2.9h-6.0zM932.2 242.4h3.1v2.9h-3.1zM937.9 242.4h3.1v2.9h-3.1zM949.4 242.4h8.9v2.9h-8.9zM975.4 242.4h14.6v2.9h-14.6zM992.6 242.4h6.0v2.9h-6.0zM814.8 245.0h20.3v2.9h-20.3zM837.8 245.0h3.1v2.9h-3.1zM920.9 245.0h17.5v2.9h-17.5zM949.6 245.0h8.9v2.9h-8.9zM978.3 245.0h6.0v2.9h-6.0zM986.9 245.0h3.1v2.9h-3.1zM1001.2 245.0h3.1v2.9h-3.1zM815.6 247.6h23.1v2.9h-23.1zM858.4 247.6h3.1v2.9h-3.1zM921.2 247.6h8.8v2.9h-8.8zM932.7 247.6h3.1v2.9h-3.1zM949.8 247.6h6.0v2.9h-6.0zM975.5 247.6h3.1v2.9h-3.1zM981.2 247.6h3.1v2.9h-3.1zM992.6 247.6h14.5v2.9h-14.5zM799.2 250.1h3.1v2.8h-3.1zM816.3 250.1h23.0v2.8h-23.0zM856.1 250.1h5.9v2.8h-5.9zM921.5 250.1h8.8v2.8h-8.8zM935.8 250.1h3.1v2.8h-3.1zM944.3 250.1h3.1v2.8h-3.1zM950.0 250.1h5.9v2.8h-5.9zM975.6 250.1h8.8v2.8h-8.8zM989.8 250.1h20.2v2.8h-20.2zM797.2 252.7h5.9v2.8h-5.9zM814.2 252.7h8.7v2.8h-8.7zM828.3 252.7h3.1v2.8h-3.1zM834.0 252.7h5.9v2.8h-5.9zM913.3 252.7h3.1v2.8h-3.1zM924.7 252.7h3.1v2.8h-3.1zM930.3 252.7h3.1v2.8h-3.1zM938.8 252.7h17.2v2.8h-17.2zM978.5 252.7h5.9v2.8h-5.9zM989.8 252.7h5.9v2.8h-5.9zM998.3 252.7h3.1v2.8h-3.1zM1006.8 252.7h3.1v2.8h-3.1zM803.6 255.2h3.1v2.8h-3.1zM814.9 255.2h11.5v2.8h-11.5zM829.0 255.2h5.9v2.8h-5.9zM837.5 255.2h3.1v2.8h-3.1zM857.2 255.2h3.1v2.8h-3.1zM905.2 255.2h3.1v2.8h-3.1zM910.8 255.2h3.1v2.8h-3.1zM919.3 255.2h3.1v2.8h-3.1zM924.9 255.2h3.1v2.8h-3.1zM933.4 255.2h14.4v2.8h-14.4zM953.2 255.2h5.9v2.8h-5.9zM964.4 255.2h5.9v2.8h-5.9zM978.6 255.2h14.4v2.8h-14.4zM995.5 255.2h14.4v2.8h-14.4zM801.6 257.7h3.1v2.8h-3.1zM815.6 257.7h17.1v2.8h-17.1zM835.3 257.7h3.1v2.8h-3.1zM840.9 257.7h3.1v2.8h-3.1zM905.6 257.7h3.1v2.8h-3.1zM911.2 257.7h3.1v2.8h-3.1zM925.2 257.7h3.1v2.8h-3.1zM933.7 257.7h5.9v2.8h-5.9zM942.1 257.7h3.1v2.8h-3.1zM953.3 257.7h8.7v2.8h-8.7zM967.4 257.7h5.9v2.8h-5.9zM978.6 257.7h28.4v2.8h-28.4zM816.4 260.3h22.6v2.8h-22.6zM925.5 260.3h3.0v2.8h-3.0zM933.9 260.3h5.8v2.8h-5.8zM956.3 260.3h3.0v2.8h-3.0zM961.9 260.3h8.6v2.8h-8.6zM978.7 260.3h3.0v2.8h-3.0zM984.3 260.3h22.6v2.8h-22.6zM814.3 262.8h30.9v2.8h-30.9zM909.1 262.8h3.0v2.8h-3.0zM920.2 262.8h14.2v2.8h-14.2zM964.8 262.8h3.0v2.8h-3.0zM976.0 262.8h14.2v2.8h-14.2zM1006.6 262.8h3.0v2.8h-3.0zM806.7 265.3h3.0v2.8h-3.0zM815.0 265.3h25.2v2.8h-25.2zM845.6 265.3h3.0v2.8h-3.0zM917.8 265.3h11.4v2.8h-11.4zM931.6 265.3h5.8v2.8h-5.8zM959.4 265.3h11.4v2.8h-11.4zM978.8 265.3h11.4v2.8h-11.4zM804.7 267.8h3.0v2.8h-3.0zM815.8 267.8h3.0v2.8h-3.0zM821.3 267.8h19.6v2.8h-19.6zM848.9 267.8h3.0v2.8h-3.0zM915.3 267.8h3.0v2.8h-3.0zM920.8 267.8h11.3v2.8h-11.3zM940.2 267.8h3.0v2.8h-3.0zM962.3 267.8h5.8v2.8h-5.8zM981.7 267.8h11.3v2.8h-11.3zM844.0 270.2h3.0v2.8h-3.0zM852.3 270.2h3.0v2.8h-3.0zM904.6 270.2h3.0v2.8h-3.0zM921.1 270.2h11.3v2.8h-11.3zM940.4 270.2h5.8v2.8h-5.8zM957.0 270.2h5.8v2.8h-5.8zM965.2 270.2h5.8v2.8h-5.8zM973.5 270.2h3.0v2.8h-3.0zM981.7 270.2h11.3v2.8h-11.3zM830.9 272.7h3.0v2.8h-3.0zM836.4 272.7h3.0v2.8h-3.0zM844.6 272.7h5.7v2.8h-5.7zM855.6 272.7h3.0v2.8h-3.0zM918.7 272.7h5.7v2.8h-5.7zM929.7 272.7h3.0v2.8h-3.0zM935.2 272.7h8.5v2.8h-8.5zM959.9 272.7h16.7v2.8h-16.7zM984.6 272.7h8.5v2.8h-8.5zM1001.0 272.7h8.5v2.8h-8.5zM801.5 275.2h3.0v2.7h-3.0zM831.6 275.2h3.0v2.7h-3.0zM845.2 275.2h3.0v2.7h-3.0zM910.8 275.2h3.0v2.7h-3.0zM919.0 275.2h3.0v2.7h-3.0zM935.4 275.2h3.0v2.7h-3.0zM940.9 275.2h8.4v2.7h-8.4zM965.5 275.2h3.0v2.7h-3.0zM981.9 275.2h13.9v2.7h-13.9zM1001.0 275.2h5.7v2.7h-5.7zM802.3 277.6h3.0v2.7h-3.0zM834.9 277.6h5.7v2.7h-5.7zM908.5 277.6h3.0v2.7h-3.0zM916.6 277.6h3.0v2.7h-3.0zM927.5 277.6h3.0v2.7h-3.0zM938.4 277.6h11.1v2.7h-11.1zM965.6 277.6h3.0v2.7h-3.0zM971.1 277.6h3.0v2.7h-3.0zM987.4 277.6h3.0v2.7h-3.0zM1003.7 277.6h3.0v2.7h-3.0zM800.3 280.0h5.7v2.7h-5.7zM832.9 280.0h3.0v2.7h-3.0zM851.9 280.0h3.0v2.7h-3.0zM906.1 280.0h5.7v2.7h-5.7zM917.0 280.0h3.0v2.7h-3.0zM935.9 280.0h8.4v2.7h-8.4zM946.8 280.0h5.7v2.7h-5.7zM960.3 280.0h3.0v2.7h-3.0zM968.5 280.0h5.7v2.7h-5.7zM836.2 282.5h3.0v2.7h-3.0zM852.4 282.5h3.0v2.7h-3.0zM906.5 282.5h5.7v2.7h-5.7zM938.9 282.5h5.7v2.7h-5.7zM949.7 282.5h5.7v2.7h-5.7zM965.9 282.5h8.4v2.7h-8.4zM976.7 282.5h3.0v2.7h-3.0zM807.3 284.9h2.9v2.7h-2.9zM812.6 284.9h2.9v2.7h-2.9zM836.9 284.9h2.9v2.7h-2.9zM853.0 284.9h2.9v2.7h-2.9zM904.2 284.9h11.0v2.7h-11.0zM928.4 284.9h2.9v2.7h-2.9zM939.1 284.9h16.4v2.7h-16.4zM968.7 284.9h11.0v2.7h-11.0zM990.3 284.9h2.9v2.7h-2.9zM1001.0 284.9h2.9v2.7h-2.9zM805.3 287.3h2.9v2.7h-2.9zM816.1 287.3h5.6v2.7h-5.6zM904.5 287.3h11.0v2.7h-11.0zM934.0 287.3h2.9v2.7h-2.9zM942.1 287.3h2.9v2.7h-2.9zM950.1 287.3h5.6v2.7h-5.6zM968.9 287.3h2.9v2.7h-2.9zM976.9 287.3h2.9v2.7h-2.9zM985.0 287.3h2.9v2.7h-2.9zM806.1 289.7h2.9v2.7h-2.9zM814.1 289.7h2.9v2.7h-2.9zM904.9 289.7h8.3v2.7h-8.3zM915.6 289.7h2.9v2.7h-2.9zM931.6 289.7h2.9v2.7h-2.9zM942.3 289.7h2.9v2.7h-2.9zM950.3 289.7h2.9v2.7h-2.9zM969.0 289.7h2.9v2.7h-2.9zM977.0 289.7h5.6v2.7h-5.6zM985.0 289.7h5.6v2.7h-5.6zM801.5 292.1h2.9v2.7h-2.9zM905.3 292.1h16.2v2.7h-16.2zM923.9 292.1h16.2v2.7h-16.2zM966.5 292.1h5.6v2.7h-5.6zM977.1 292.1h5.6v2.7h-5.6zM985.1 292.1h8.2v2.7h-8.2zM797.0 294.5h2.9v2.7h-2.9zM850.0 294.5h5.6v2.7h-5.6zM905.7 294.5h13.5v2.7h-13.5zM926.9 294.5h13.5v2.7h-13.5zM964.0 294.5h5.6v2.7h-5.6zM977.3 294.5h5.6v2.7h-5.6zM985.2 294.5h2.9v2.7h-2.9zM990.5 294.5h2.9v2.7h-2.9zM808.3 296.9h2.9v2.7h-2.9zM914.0 296.9h2.9v2.7h-2.9zM929.8 296.9h8.2v2.7h-8.2zM940.4 296.9h5.5v2.7h-5.5zM948.3 296.9h8.2v2.7h-8.2zM974.7 296.9h5.5v2.7h-5.5zM982.6 296.9h5.5v2.7h-5.5zM795.9 299.2h2.9v2.7h-2.9zM809.1 299.2h2.9v2.7h-2.9zM924.9 299.2h2.9v2.7h-2.9zM935.4 299.2h10.8v2.7h-10.8zM948.5 299.2h5.5v2.7h-5.5zM980.1 299.2h10.8v2.7h-10.8zM846.5 301.6h2.9v2.6h-2.9zM925.2 301.6h5.5v2.6h-5.5zM935.6 301.6h2.9v2.6h-2.9zM940.9 301.6h5.5v2.6h-5.5zM948.8 301.6h2.9v2.6h-2.9zM982.8 301.6h10.7v2.6h-10.7zM810.5 303.9h2.9v2.6h-2.9zM831.4 303.9h2.9v2.6h-2.9zM847.1 303.9h2.9v2.6h-2.9zM909.8 303.9h2.9v2.6h-2.9zM915.0 303.9h2.9v2.6h-2.9zM962.0 303.9h2.9v2.6h-2.9zM967.3 303.9h2.9v2.6h-2.9zM980.3 303.9h8.1v2.6h-8.1zM808.7 306.3h2.9v2.6h-2.9zM829.5 306.3h2.9v2.6h-2.9zM850.3 306.3h2.9v2.6h-2.9zM912.8 306.3h2.9v2.6h-2.9zM931.0 306.3h5.5v2.6h-5.5zM957.0 306.3h8.1v2.6h-8.1zM967.4 306.3h5.5v2.6h-5.5zM985.6 306.3h2.9v2.6h-2.9zM796.4 308.6h2.8v2.6h-2.8zM848.3 308.6h2.8v2.6h-2.8zM913.1 308.6h5.4v2.6h-5.4zM928.7 308.6h2.8v2.6h-2.8zM949.4 308.6h2.8v2.6h-2.8zM959.8 308.6h13.2v2.6h-13.2zM823.1 310.9h2.8v2.6h-2.8zM913.5 310.9h2.8v2.6h-2.8zM921.2 310.9h8.0v2.6h-8.0zM934.2 310.9h10.6v2.6h-10.6zM967.7 310.9h2.8v2.6h-2.8zM972.9 310.9h5.4v2.6h-5.4zM828.9 313.2h2.8v2.6h-2.8zM911.3 313.2h15.7v2.6h-15.7zM931.9 313.2h13.1v2.6h-13.1zM947.3 313.2h5.4v2.6h-5.4zM962.8 313.2h2.8v2.6h-2.8zM975.6 313.2h5.4v2.6h-5.4zM829.6 315.6h2.8v2.6h-2.8zM839.8 315.6h2.8v2.6h-2.8zM911.6 315.6h10.5v2.6h-10.5zM924.5 315.6h10.5v2.6h-10.5zM950.1 315.6h5.4v2.6h-5.4zM962.9 315.6h2.8v2.6h-2.8zM975.8 315.6h2.8v2.6h-2.8zM799.5 317.9h2.8v2.6h-2.8zM840.4 317.9h2.8v2.6h-2.8zM914.6 317.9h5.4v2.6h-5.4zM929.9 317.9h5.4v2.6h-5.4zM945.2 317.9h2.8v2.6h-2.8zM950.3 317.9h7.9v2.6h-7.9zM960.6 317.9h5.4v2.6h-5.4zM800.3 320.1h2.8v2.6h-2.8zM858.9 320.1h2.8v2.6h-2.8zM914.9 320.1h2.8v2.6h-2.8zM932.7 320.1h5.3v2.6h-5.3zM948.0 320.1h7.9v2.6h-7.9zM958.2 320.1h2.8v2.6h-2.8zM981.1 320.1h5.3v2.6h-5.3zM798.5 322.4h2.8v2.6h-2.8zM839.1 322.4h2.8v2.6h-2.8zM859.4 322.4h2.8v2.6h-2.8zM920.4 322.4h2.8v2.6h-2.8zM933.0 322.4h5.3v2.6h-5.3zM940.7 322.4h2.8v2.6h-2.8zM948.3 322.4h2.8v2.6h-2.8zM801.8 324.7h2.8v2.6h-2.8zM839.8 324.7h2.8v2.6h-2.8zM915.6 324.7h7.8v2.6h-7.8zM930.8 324.7h10.4v2.6h-10.4zM802.6 327.0h2.8v2.6h-2.8zM820.2 327.0h2.8v2.6h-2.8zM858.0 327.0h2.8v2.6h-2.8zM916.0 327.0h7.8v2.6h-7.8zM931.1 327.0h2.8v2.6h-2.8zM803.3 329.2h2.8v2.6h-2.8zM815.9 329.2h2.8v2.6h-2.8zM856.1 329.2h5.3v2.6h-5.3zM921.4 329.2h2.8v2.6h-2.8zM801.6 331.5h2.8v2.5h-2.8zM819.1 331.5h5.3v2.5h-5.3zM856.6 331.5h5.3v2.5h-5.3zM817.3 333.7h2.7v2.5h-2.7zM847.2 333.7h5.2v2.5h-5.2zM857.2 333.7h2.7v2.5h-2.7zM865.2 336.0h2.7v2.5h-2.7zM846.0 338.2h2.7v2.5h-2.7zM784.9 340.4h7.7v2.5h-7.7zM799.7 340.4h2.7v2.5h-2.7zM807.1 340.4h2.7v2.5h-2.7zM790.6 342.6h7.6v2.5h-7.6zM800.4 342.6h2.7v2.5h-2.7zM786.5 344.8h2.7v2.5h-2.7zM791.4 344.8h2.7v2.5h-2.7zM796.3 344.8h2.7v2.5h-2.7zM801.2 344.8h5.2v2.5h-5.2zM820.8 344.8h2.7v2.5h-2.7zM825.7 344.8h7.6v2.5h-7.6zM784.8 347.0h5.1v2.5h-5.1zM794.6 347.0h2.7v2.5h-2.7zM828.8 347.0h2.7v2.5h-2.7zM838.6 347.0h2.7v2.5h-2.7zM845.9 347.0h5.1v2.5h-5.1zM785.6 349.2h2.7v2.5h-2.7zM790.5 349.2h5.1v2.5h-5.1zM846.5 349.2h5.1v2.5h-5.1zM808.3 351.4h2.7v2.5h-2.7zM844.7 351.4h2.7v2.5h-2.7zM849.5 351.4h2.7v2.5h-2.7zM787.2 353.6h2.7v2.5h-2.7zM792.1 353.6h5.1v2.5h-5.1zM806.6 353.6h5.1v2.5h-5.1zM845.3 353.6h2.7v2.5h-2.7zM790.5 355.7h2.7v2.5h-2.7zM795.3 355.7h2.7v2.5h-2.7zM804.9 355.7h9.9v2.5h-9.9zM826.6 355.7h5.1v2.5h-5.1zM845.9 355.7h2.7v2.5h-2.7zM791.2 357.9h2.7v2.5h-2.7zM803.3 357.9h9.9v2.5h-9.9zM824.9 357.9h9.9v2.5h-9.9zM796.8 360.0h9.8v2.4h-9.8zM808.8 360.0h5.0v2.4h-5.0zM816.0 360.0h2.6v2.4h-2.6zM828.0 360.0h5.0v2.4h-5.0zM797.6 362.2h5.0v2.4h-5.0zM804.7 362.2h12.2v2.4h-12.2zM828.6 362.2h2.6v2.4h-2.6zM838.2 362.2h5.0v2.4h-5.0zM803.1 364.3h5.0v2.4h-5.0zM810.2 364.3h7.4v2.4h-7.4zM841.2 364.3h7.4v2.4h-7.4zM803.8 366.5h7.4v2.4h-7.4zM813.3 366.5h7.4v2.4h-7.4zM839.4 366.5h2.6v2.4h-2.6zM844.2 366.5h2.6v2.4h-2.6zM797.5 368.6h2.6v2.4h-2.6zM804.6 368.6h2.6v2.4h-2.6zM811.7 368.6h5.0v2.4h-5.0zM842.4 368.6h2.6v2.4h-2.6zM870.8 368.6h5.0v2.4h-5.0zM798.3 370.7h2.6v2.4h-2.6zM803.0 370.7h9.7v2.4h-9.7zM814.7 370.7h2.6v2.4h-2.6zM869.0 370.7h7.3v2.4h-7.3zM803.7 372.8h9.6v2.4h-9.6zM815.5 372.8h2.6v2.4h-2.6zM867.1 372.8h7.3v2.4h-7.3zM802.1 374.9h16.6v2.4h-16.6zM863.0 374.9h9.6v2.4h-9.6zM816.9 377.0h7.3v2.4h-7.3zM840.2 377.0h2.6v2.4h-2.6zM863.6 377.0h7.3v2.4h-7.3zM824.5 379.1h2.6v2.4h-2.6zM861.8 379.1h9.6v2.4h-9.6zM822.9 381.2h4.9v2.4h-4.9zM848.4 381.2h2.6v2.4h-2.6zM862.3 381.2h7.2v2.4h-7.2zM802.8 383.3h2.6v2.4h-2.6zM825.9 383.3h4.9v2.4h-4.9zM849.0 383.3h2.6v2.4h-2.6zM862.9 383.3h4.9v2.4h-4.9zM824.3 385.3h4.9v2.4h-4.9zM835.8 385.3h2.6v2.4h-2.6zM847.3 385.3h2.6v2.4h-2.6zM863.4 385.3h2.6v2.4h-2.6zM813.4 387.4h2.5v2.4h-2.5zM824.9 387.4h4.8v2.4h-4.8zM831.8 387.4h4.8v2.4h-4.8zM845.6 387.4h2.5v2.4h-2.5zM807.3 389.5h7.1v2.4h-7.1zM832.5 389.5h2.5v2.4h-2.5zM843.9 389.5h4.8v2.4h-4.8zM810.3 391.5h4.8v2.3h-4.8zM835.4 391.5h2.5v2.3h-2.5zM815.6 393.6h2.5v2.3h-2.5zM831.5 393.6h2.5v2.3h-2.5zM811.7 395.6h2.5v2.3h-2.5zM791.8 425.5h2.4v2.2h-2.4zM779.0 431.3h2.4v2.2h-2.4zM798.4 431.3h6.7v2.2h-6.7zM775.5 433.3h11.0v2.2h-11.0zM799.2 433.3h6.7v2.2h-6.7zM774.2 435.2h4.5v2.2h-4.5zM782.8 435.2h2.4v2.2h-2.4zM787.1 435.2h2.4v2.2h-2.4zM802.0 435.2h2.4v2.2h-2.4zM814.9 435.2h2.4v2.2h-2.4zM772.9 437.1h2.4v2.2h-2.4zM783.6 437.1h6.7v2.2h-6.7zM800.7 437.1h4.5v2.2h-4.5zM809.2 437.1h13.1v2.2h-13.1zM775.8 439.0h4.5v2.2h-4.5zM784.4 439.0h6.6v2.2h-6.6zM799.3 439.0h6.6v2.2h-6.6zM807.8 439.0h15.2v2.2h-15.2zM774.5 440.9h4.5v2.2h-4.5zM785.1 440.9h19.4v2.2h-19.4zM808.5 440.9h6.6v2.2h-6.6zM773.2 442.8h4.5v2.2h-4.5zM785.9 442.8h17.2v2.2h-17.2zM807.1 442.8h4.5v2.2h-4.5zM813.5 442.8h2.4v2.2h-2.4zM780.4 444.7h25.6v2.2h-25.6zM810.0 444.7h2.4v2.2h-2.4zM814.2 444.7h2.4v2.2h-2.4zM779.1 446.6h4.5v2.2h-4.5zM787.5 446.6h17.1v2.2h-17.1zM810.7 446.6h4.5v2.2h-4.5zM773.6 448.5h6.6v2.2h-6.6zM786.2 448.5h19.2v2.2h-19.2zM809.3 448.5h4.5v2.2h-4.5zM819.8 448.5h2.4v2.2h-2.4zM780.7 450.4h4.4v2.2h-4.4zM789.1 450.4h21.2v2.2h-21.2zM816.3 450.4h2.3v2.2h-2.3zM777.3 452.3h8.6v2.2h-8.6zM787.7 452.3h2.3v2.2h-2.3zM796.1 452.3h14.9v2.2h-14.9zM819.1 452.3h2.3v2.2h-2.3zM778.1 454.1h12.8v2.2h-12.8zM798.9 454.1h8.6v2.2h-8.6zM775.9 472.6h2.3v2.1h-2.3zM780.0 472.6h2.3v2.1h-2.3zM784.0 472.6h2.3v2.1h-2.3zM792.1 472.6h6.3v2.1h-6.3zM776.7 474.4h2.3v2.1h-2.3zM780.8 474.4h4.3v2.1h-4.3zM788.9 474.4h2.3v2.1h-2.3zM794.9 474.4h4.3v2.1h-4.3zM761.3 476.2h4.3v2.1h-4.3zM777.5 476.2h2.3v2.1h-2.3zM785.6 476.2h4.3v2.1h-4.3zM791.7 476.2h2.3v2.1h-2.3zM795.7 476.2h2.3v2.1h-2.3zM758.2 478.0h6.3v2.1h-6.3zM784.4 478.0h8.3v2.1h-8.3zM796.5 478.0h2.3v2.1h-2.3zM757.0 479.9h6.3v2.1h-6.3zM759.9 481.7h6.3v2.1h-6.3zM787.9 481.7h2.3v2.1h-2.3zM791.9 481.7h2.3v2.1h-2.3zM798.0 481.7h2.3v2.1h-2.3zM756.7 483.5h16.3v2.1h-16.3zM786.7 483.5h2.3v2.1h-2.3zM790.7 483.5h2.3v2.1h-2.3zM759.6 485.2h16.2v2.1h-16.2zM781.5 485.2h8.2v2.1h-8.2zM797.5 485.2h2.2v2.1h-2.2zM762.4 487.0h12.2v2.1h-12.2zM778.3 487.0h8.2v2.1h-8.2zM796.2 487.0h2.2v2.1h-2.2zM763.2 488.8h8.2v2.1h-8.2zM779.1 488.8h6.2v2.1h-6.2zM795.0 488.8h2.2v2.1h-2.2zM764.1 490.6h2.2v2.1h-2.2zM770.0 490.6h2.2v2.1h-2.2zM729.4 492.4h6.2v2.1h-6.2zM737.3 492.4h4.2v2.1h-4.2zM732.2 494.1h10.1v2.1h-10.1zM752.0 494.1h2.2v2.1h-2.2zM761.8 494.1h4.2v2.1h-4.2zM773.6 494.1h2.2v2.1h-2.2zM777.6 494.1h4.2v2.1h-4.2zM735.1 495.9h6.1v2.1h-6.1zM750.9 495.9h2.2v2.1h-2.2zM758.7 495.9h10.1v2.1h-10.1zM772.5 495.9h2.2v2.1h-2.2zM776.4 495.9h4.2v2.1h-4.2zM751.7 497.7h4.2v2.1h-4.2zM761.5 497.7h8.1v2.1h-8.1zM773.3 497.7h14.0v2.1h-14.0zM760.4 499.4h2.2v2.1h-2.2zM768.2 499.4h2.2v2.1h-2.2zM772.2 499.4h8.1v2.1h-8.1zM781.9 499.4h6.1v2.1h-6.1zM761.3 501.2h2.2v2.0h-2.2zM769.1 501.2h12.0v2.0h-12.0zM768.0 502.9h10.0v2.0h-10.0zM779.6 502.9h2.2v2.0h-2.2zM867.3 502.9h6.1v2.0h-6.1zM879.0 502.9h2.2v2.0h-2.2zM886.7 502.9h4.1v2.0h-4.1zM892.6 502.9h8.0v2.0h-8.0zM766.8 504.7h13.9v2.0h-13.9zM796.0 504.7h2.2v2.0h-2.2zM860.1 504.7h6.1v2.0h-6.1zM867.9 504.7h6.1v2.0h-6.1zM875.6 504.7h4.1v2.0h-4.1zM889.2 504.7h8.0v2.0h-8.0zM899.0 504.7h2.2v2.0h-2.2zM765.7 506.4h2.2v2.0h-2.2zM773.5 506.4h6.1v2.0h-6.1zM787.0 506.4h8.0v2.0h-8.0zM860.7 506.4h11.9v2.0h-11.9zM876.2 506.4h4.1v2.0h-4.1zM887.8 506.4h9.9v2.0h-9.9zM751.1 508.2h2.2v2.0h-2.2zM772.4 508.2h4.1v2.0h-4.1zM780.1 508.2h2.2v2.0h-2.2zM785.9 508.2h27.3v2.0h-27.3zM861.3 508.2h8.0v2.0h-8.0zM876.8 508.2h19.6v2.0h-19.6zM748.1 509.9h8.0v2.0h-8.0zM761.6 509.9h36.9v2.0h-36.9zM802.1 509.9h9.9v2.0h-9.9zM860.0 509.9h11.8v2.0h-11.8zM875.4 509.9h25.3v2.0h-25.3zM749.0 511.6h9.9v2.0h-9.9zM764.4 511.6h4.1v2.0h-4.1zM770.1 511.6h11.8v2.0h-11.8zM783.6 511.6h29.1v2.0h-29.1zM860.6 511.6h9.9v2.0h-9.9zM876.0 511.6h7.9v2.0h-7.9zM889.5 511.6h9.9v2.0h-9.9zM749.8 513.3h9.9v2.0h-9.9zM761.4 513.3h9.9v2.0h-9.9zM776.7 513.3h4.1v2.0h-4.1zM784.4 513.3h4.1v2.0h-4.1zM799.8 513.3h9.9v2.0h-9.9zM863.1 513.3h7.9v2.0h-7.9zM878.5 513.3h6.0v2.0h-6.0zM893.9 513.3h6.0v2.0h-6.0zM752.6 515.1h4.1v2.0h-4.1zM758.4 515.1h13.7v2.0h-13.7zM775.6 515.1h4.1v2.0h-4.1zM783.3 515.1h2.2v2.0h-2.2zM789.0 515.1h2.2v2.0h-2.2zM800.5 515.1h4.1v2.0h-4.1zM806.3 515.1h2.2v2.0h-2.2zM859.9 515.1h2.2v2.0h-2.2zM865.7 515.1h7.9v2.0h-7.9zM879.1 515.1h2.2v2.0h-2.2zM888.6 515.1h2.2v2.0h-2.2zM894.4 515.1h6.0v2.0h-6.0zM747.8 516.8h19.4v2.0h-19.4zM768.8 516.8h6.0v2.0h-6.0zM776.4 516.8h7.9v2.0h-7.9zM787.9 516.8h6.0v2.0h-6.0zM799.4 516.8h2.2v2.0h-2.2zM862.4 516.8h9.8v2.0h-9.8zM873.9 516.8h2.2v2.0h-2.2zM885.4 516.8h2.2v2.0h-2.2zM889.2 516.8h2.2v2.0h-2.2zM742.9 518.5h2.2v2.0h-2.2zM748.6 518.5h47.9v2.0h-47.9zM807.7 518.5h2.2v2.0h-2.2zM861.1 518.5h13.6v2.0h-13.6zM882.1 518.5h2.2v2.0h-2.2zM747.6 520.2h17.4v2.0h-17.4zM768.5 520.2h13.6v2.0h-13.6zM787.5 520.2h11.7v2.0h-11.7zM802.8 520.2h6.0v2.0h-6.0zM859.8 520.2h15.5v2.0h-15.5zM877.0 520.2h6.0v2.0h-6.0zM894.1 520.2h2.2v2.0h-2.2zM897.9 520.2h2.2v2.0h-2.2zM748.5 521.9h2.1v2.0h-2.1zM752.3 521.9h5.9v2.0h-5.9zM759.9 521.9h4.0v2.0h-4.0zM769.3 521.9h15.4v2.0h-15.4zM792.1 521.9h11.6v2.0h-11.6zM805.4 521.9h5.9v2.0h-5.9zM749.3 523.6h4.0v2.0h-4.0zM755.0 523.6h2.1v2.0h-2.1zM764.5 523.6h2.1v2.0h-2.1zM770.2 523.6h13.5v2.0h-13.5zM789.1 523.6h23.0v2.0h-23.0zM748.3 525.3h2.1v2.0h-2.1zM752.1 525.3h4.0v2.0h-4.0zM759.7 525.3h4.0v2.0h-4.0zM765.3 525.3h22.9v2.0h-22.9zM791.8 525.3h19.1v2.0h-19.1zM751.1 527.0h4.0v2.0h-4.0zM758.6 527.0h5.9v2.0h-5.9zM768.0 527.0h2.1v2.0h-2.1zM771.8 527.0h11.6v2.0h-11.6zM794.4 527.0h2.1v2.0h-2.1zM798.2 527.0h13.4v2.0h-13.4zM748.2 528.7h2.1v2.0h-2.1zM759.5 528.7h5.9v2.0h-5.9zM767.0 528.7h11.5v2.0h-11.5zM780.2 528.7h4.0v2.0h-4.0zM795.2 528.7h11.5v2.0h-11.5zM808.4 528.7h2.1v2.0h-2.1zM749.1 530.4h2.1v2.0h-2.1zM758.4 530.4h15.3v2.0h-15.3zM775.3 530.4h2.1v2.0h-2.1zM784.7 530.4h2.1v2.0h-2.1zM792.2 530.4h2.1v2.0h-2.1zM797.9 530.4h5.9v2.0h-5.9zM805.4 530.4h2.1v2.0h-2.1zM809.1 530.4h2.1v2.0h-2.1zM751.8 532.0h24.6v2.0h-24.6zM778.0 532.0h4.0v2.0h-4.0zM783.6 532.0h2.1v2.0h-2.1zM793.0 532.0h2.1v2.0h-2.1zM800.5 532.0h5.9v2.0h-5.9zM808.0 532.0h2.1v2.0h-2.1zM929.7 532.0h11.5v2.0h-11.5zM942.8 532.0h2.1v2.0h-2.1zM950.3 532.0h2.1v2.0h-2.1zM754.5 533.7h28.3v2.0h-28.3zM784.4 533.7h2.1v2.0h-2.1zM791.9 533.7h5.9v2.0h-5.9zM799.4 533.7h5.9v2.0h-5.9zM913.4 533.7h2.1v2.0h-2.1zM917.1 533.7h2.1v2.0h-2.1zM932.0 533.7h2.1v2.0h-2.1zM941.4 533.7h4.0v2.0h-4.0zM952.6 533.7h2.1v2.0h-2.1zM749.8 535.4h37.5v2.0h-37.5zM790.8 535.4h5.8v2.0h-5.8zM802.0 535.4h7.7v2.0h-7.7zM910.1 535.4h2.1v2.0h-2.1zM930.6 535.4h4.0v2.0h-4.0zM938.1 535.4h5.8v2.0h-5.8zM746.9 537.1h43.0v2.0h-43.0zM791.6 537.1h5.8v2.0h-5.8zM802.7 537.1h7.7v2.0h-7.7zM910.6 537.1h2.1v2.0h-2.1zM916.2 537.1h2.1v2.0h-2.1zM919.9 537.1h4.0v2.0h-4.0zM742.2 538.7h2.1v2.0h-2.1zM747.8 538.7h13.2v2.0h-13.2zM770.1 538.7h28.1v2.0h-28.1zM801.6 538.7h5.8v2.0h-5.8zM918.6 538.7h2.1v2.0h-2.1zM939.0 538.7h4.0v2.0h-4.0zM743.1 540.4h2.1v2.0h-2.1zM757.9 540.4h2.1v2.0h-2.1zM919.1 540.4h4.0v2.0h-4.0zM941.3 540.4h2.1v2.0h-2.1zM779.1 542.1h2.1v2.0h-2.1zM782.8 542.1h13.2v2.0h-13.2zM797.6 542.1h2.1v2.0h-2.1zM805.0 542.1h2.1v2.0h-2.1zM917.7 542.1h3.9v2.0h-3.9zM778.1 543.7h11.3v2.0h-11.3zM791.0 543.7h3.9v2.0h-3.9zM796.5 543.7h3.9v2.0h-3.9zM914.5 543.7h7.6v2.0h-7.6zM775.2 545.4h13.1v1.9h-13.1zM789.9 545.4h15.0v1.9h-15.0zM920.6 545.4h2.1v1.9h-2.1zM774.2 547.0h11.3v1.9h-11.3zM787.0 547.0h2.1v1.9h-2.1zM794.4 547.0h2.1v1.9h-2.1zM798.1 547.0h5.8v1.9h-5.8zM917.4 547.0h2.1v1.9h-2.1zM775.0 548.7h5.7v1.9h-5.7zM782.3 548.7h7.6v1.9h-7.6zM793.3 548.7h2.1v1.9h-2.1zM800.6 548.7h3.9v1.9h-3.9zM774.0 550.3h7.6v1.9h-7.6zM785.0 550.3h22.2v1.9h-22.2zM785.7 551.9h13.0v1.9h-13.0zM800.3 551.9h5.7v1.9h-5.7zM773.8 553.6h2.1v1.9h-2.1zM784.7 553.6h20.3v1.9h-20.3zM948.6 553.6h2.1v1.9h-2.1zM725.6 555.2h13.0v1.9h-13.0zM776.4 555.2h2.1v1.9h-2.1zM783.7 555.2h20.2v1.9h-20.2zM925.4 555.2h3.9v1.9h-3.9zM930.9 555.2h2.1v1.9h-2.1zM934.5 555.2h2.1v1.9h-2.1zM945.4 555.2h2.1v1.9h-2.1zM722.8 556.8h2.1v1.9h-2.1zM726.5 556.8h12.9v1.9h-12.9zM775.4 556.8h5.7v1.9h-5.7zM784.5 556.8h20.2v1.9h-20.2zM927.7 556.8h3.9v1.9h-3.9zM933.2 556.8h2.1v1.9h-2.1zM936.8 556.8h3.9v1.9h-3.9zM722.0 558.5h2.1v1.9h-2.1zM725.6 558.5h14.7v1.9h-14.7zM776.2 558.5h12.9v1.9h-12.9zM792.5 558.5h7.5v1.9h-7.5zM801.6 558.5h3.9v1.9h-3.9zM911.9 558.5h2.1v1.9h-2.1zM928.2 558.5h2.1v1.9h-2.1zM931.8 558.5h2.1v1.9h-2.1zM935.4 558.5h2.1v1.9h-2.1zM939.1 558.5h2.1v1.9h-2.1zM728.3 560.1h14.7v1.9h-14.7zM775.2 560.1h12.9v1.9h-12.9zM789.7 560.1h2.1v1.9h-2.1zM793.3 560.1h7.5v1.9h-7.5zM912.5 560.1h2.1v1.9h-2.1zM934.1 560.1h3.9v1.9h-3.9zM939.5 560.1h2.1v1.9h-2.1zM948.6 560.1h2.1v1.9h-2.1zM722.0 561.7h21.9v1.9h-21.9zM777.9 561.7h11.1v1.9h-11.1zM792.3 561.7h9.3v1.9h-9.3zM803.1 561.7h2.1v1.9h-2.1zM916.6 561.7h2.1v1.9h-2.1zM922.0 561.7h2.1v1.9h-2.1zM927.4 561.7h3.9v1.9h-3.9zM938.2 561.7h2.1v1.9h-2.1zM947.2 561.7h2.1v1.9h-2.1zM950.8 561.7h3.9v1.9h-3.9zM721.1 563.3h18.2v1.9h-18.2zM740.9 563.3h2.0v1.9h-2.0zM922.5 563.3h3.8v1.9h-3.8zM929.7 563.3h3.8v1.9h-3.8zM949.5 563.3h5.6v1.9h-5.6zM720.3 564.9h18.2v1.9h-18.2zM740.0 564.9h3.8v1.9h-3.8zM919.4 564.9h3.8v1.9h-3.8zM928.4 564.9h2.0v1.9h-2.0zM951.7 564.9h2.0v1.9h-2.0zM719.4 566.5h12.8v1.9h-12.8zM735.5 566.5h5.6v1.9h-5.6zM919.9 566.5h2.0v1.9h-2.0zM923.5 566.5h2.0v1.9h-2.0zM945.0 566.5h3.8v1.9h-3.8zM720.3 568.1h18.1v1.9h-18.1zM740.0 568.1h3.8v1.9h-3.8zM719.5 569.7h5.6v1.9h-5.6zM726.6 569.7h16.3v1.9h-16.3zM718.6 571.3h2.0v1.9h-2.0zM722.2 571.3h2.0v1.9h-2.0zM725.7 571.3h7.4v1.9h-7.4zM738.2 571.3h5.6v1.9h-5.6zM719.6 572.9h2.0v1.9h-2.0zM723.1 572.9h2.0v1.9h-2.0zM728.4 572.9h5.6v1.9h-5.6zM737.3 572.9h2.0v1.9h-2.0zM740.9 572.9h2.0v1.9h-2.0zM826.1 572.9h14.5v1.9h-14.5zM718.7 574.5h5.6v1.9h-5.6zM729.3 574.5h2.0v1.9h-2.0zM741.8 574.5h2.0v1.9h-2.0zM828.6 574.5h12.7v1.9h-12.7zM719.6 576.1h2.0v1.9h-2.0zM728.5 576.1h2.0v1.9h-2.0zM732.0 576.1h3.8v1.9h-3.8zM737.3 576.1h5.6v1.9h-5.6zM829.3 576.1h10.9v1.9h-10.9zM718.8 577.7h2.0v1.9h-2.0zM722.3 577.7h3.8v1.9h-3.8zM727.6 577.7h5.5v1.9h-5.5zM734.7 577.7h9.1v1.9h-9.1zM830.0 577.7h10.8v1.9h-10.8zM719.7 579.3h12.6v1.9h-12.6zM735.6 579.3h2.0v1.9h-2.0zM739.1 579.3h3.8v1.9h-3.8zM718.9 580.9h14.3v1.9h-14.3zM740.0 580.9h3.8v1.9h-3.8zM721.6 582.4h14.3v1.9h-14.3zM737.4 582.4h5.5v1.9h-5.5zM719.0 584.0h5.5v1.9h-5.5zM726.0 584.0h3.8v1.9h-3.8zM731.3 584.0h12.5v1.9h-12.5zM718.2 585.6h24.7v1.9h-24.7zM719.1 587.1h5.5v1.9h-5.5zM729.6 587.1h14.2v1.9h-14.2zM720.0 588.7h2.0v1.9h-2.0zM725.3 588.7h2.0v1.9h-2.0zM728.7 588.7h2.0v1.9h-2.0zM735.7 588.7h7.2v1.9h-7.2zM578.4 590.3h5.5v1.9h-5.5zM978.2 590.3h3.7v1.9h-3.7zM579.6 591.8h10.7v1.9h-10.7zM616.1 591.8h3.7v1.9h-3.7zM621.3 591.8h5.5v1.9h-5.5zM635.1 591.8h2.0v1.9h-2.0zM976.9 591.8h3.7v1.9h-3.7zM580.8 593.4h8.9v1.9h-8.9zM618.9 593.4h3.7v1.9h-3.7zM634.5 593.4h3.7v1.9h-3.7zM588.9 594.9h2.0v1.8h-2.0zM637.3 594.9h3.7v1.8h-3.7zM636.7 596.5h5.4v1.8h-5.4zM634.3 598.0h3.7v1.8h-3.7zM639.5 598.0h2.0v1.8h-2.0zM602.8 599.6h2.0v1.8h-2.0zM637.1 599.6h2.0v1.8h-2.0zM600.5 601.1h7.1v1.8h-7.1zM612.5 601.1h2.0v1.8h-2.0zM615.9 601.1h2.0v1.8h-2.0zM622.8 601.1h2.0v1.8h-2.0zM636.5 601.1h3.7v1.8h-3.7zM589.6 602.6h2.0v1.8h-2.0zM601.6 602.6h2.0v1.8h-2.0zM605.0 602.6h2.0v1.8h-2.0zM615.3 602.6h10.5v1.8h-10.5zM635.9 602.6h5.4v1.8h-5.4zM589.1 604.2h2.0v1.8h-2.0zM601.1 604.2h3.7v1.8h-3.7zM619.9 604.2h3.7v1.8h-3.7zM635.2 604.2h3.7v1.8h-3.7zM640.4 604.2h2.0v1.8h-2.0zM968.4 604.2h2.0v1.8h-2.0zM619.3 605.7h3.7v1.8h-3.7zM636.3 605.7h5.4v1.8h-5.4zM697.0 607.2h2.0v1.8h-2.0zM967.7 607.2h3.7v1.8h-3.7zM694.6 608.8h1.9v1.8h-1.9zM789.7 608.8h1.9v1.8h-1.9zM793.1 608.8h1.9v1.8h-1.9zM806.7 608.8h1.9v1.8h-1.9zM811.8 608.8h1.9v1.8h-1.9zM820.3 608.8h3.6v1.8h-3.6zM969.9 608.8h1.9v1.8h-1.9zM693.8 610.3h1.9v1.8h-1.9zM792.2 610.3h1.9v1.8h-1.9zM812.6 610.3h1.9v1.8h-1.9zM821.0 610.3h1.9v1.8h-1.9zM970.3 610.3h3.6v1.8h-3.6zM694.8 611.8h1.9v1.8h-1.9zM793.0 611.8h1.9v1.8h-1.9zM796.4 611.8h1.9v1.8h-1.9zM804.9 611.8h1.9v1.8h-1.9zM821.8 611.8h3.6v1.8h-3.6zM970.8 611.8h1.9v1.8h-1.9zM795.5 613.3h3.6v1.8h-3.6zM820.8 613.3h7.0v1.8h-7.0zM971.3 613.3h1.9v1.8h-1.9zM695.1 614.8h1.9v1.8h-1.9zM796.3 614.8h3.6v1.8h-3.6zM818.2 614.8h8.7v1.8h-8.7zM971.7 614.8h1.9v1.8h-1.9zM797.1 616.3h5.3v1.8h-5.3zM805.5 616.3h1.9v1.8h-1.9zM817.3 616.3h1.9v1.8h-1.9zM820.6 616.3h3.6v1.8h-3.6zM972.2 616.3h3.6v1.8h-3.6zM799.5 617.9h5.3v1.8h-5.3zM806.3 617.9h1.9v1.8h-1.9zM818.0 617.9h7.0v1.8h-7.0zM972.7 617.9h3.6v1.8h-3.6zM802.0 619.4h5.3v1.8h-5.3zM817.1 619.4h3.6v1.8h-3.6zM822.1 619.4h1.9v1.8h-1.9zM828.8 619.4h3.6v1.8h-3.6zM974.8 619.4h1.9v1.8h-1.9zM685.5 620.9h1.9v1.8h-1.9zM759.2 620.9h1.9v1.8h-1.9zM802.8 620.9h1.9v1.8h-1.9zM975.3 620.9h1.9v1.8h-1.9zM753.4 622.4h8.6v1.8h-8.6zM754.3 623.9h6.9v1.8h-6.9zM762.6 623.9h1.9v1.8h-1.9zM767.6 623.9h1.9v1.8h-1.9zM846.1 623.9h1.9v1.8h-1.9zM751.8 625.4h1.9v1.8h-1.9zM768.5 625.4h3.6v1.8h-3.6zM848.4 625.4h6.9v1.8h-6.9zM754.3 626.9h1.9v1.8h-1.9zM769.3 626.9h1.9v1.8h-1.9zM850.8 626.9h6.9v1.8h-6.9zM751.9 628.3h3.6v1.8h-3.6zM768.5 628.3h3.6v1.8h-3.6zM811.6 628.3h5.2v1.8h-5.2zM853.2 628.3h5.2v1.8h-5.2zM668.2 629.8h3.6v1.8h-3.6zM751.1 629.8h5.2v1.8h-5.2zM769.3 629.8h3.6v1.8h-3.6zM814.1 629.8h6.9v1.8h-6.9zM857.2 629.8h3.6v1.8h-3.6zM667.6 631.3h3.6v1.8h-3.6zM752.0 631.3h3.6v1.8h-3.6zM768.5 631.3h1.9v1.8h-1.9zM818.1 631.3h3.6v1.8h-3.6zM857.9 631.3h1.9v1.8h-1.9zM640.5 632.8h1.9v1.8h-1.9zM665.3 632.8h5.2v1.8h-5.2zM751.2 632.8h5.2v1.8h-5.2zM769.4 632.8h1.9v1.8h-1.9zM641.6 634.3h3.5v1.8h-3.5zM752.1 634.3h3.5v1.8h-3.5zM770.2 634.3h3.5v1.8h-3.5zM849.3 634.3h3.5v1.8h-3.5zM865.8 634.3h1.9v1.8h-1.9zM752.9 635.8h3.5v1.8h-3.5zM769.4 635.8h1.9v1.8h-1.9zM828.7 635.8h3.5v1.8h-3.5zM853.3 635.8h3.5v1.8h-3.5zM863.2 635.8h3.5v1.8h-3.5zM640.4 637.2h1.9v1.8h-1.9zM661.8 637.2h1.9v1.8h-1.9zM752.2 637.2h3.5v1.8h-3.5zM768.6 637.2h3.5v1.8h-3.5zM832.7 637.2h3.5v1.8h-3.5zM855.7 637.2h1.9v1.8h-1.9zM661.2 638.7h1.9v1.8h-1.9zM690.7 638.7h5.2v1.8h-5.2zM753.0 638.7h3.5v1.8h-3.5zM767.8 638.7h1.9v1.8h-1.9zM833.4 638.7h3.5v1.8h-3.5zM846.5 638.7h1.9v1.8h-1.9zM859.7 638.7h5.2v1.8h-5.2zM660.5 640.2h3.5v1.8h-3.5zM686.8 640.2h13.4v1.8h-13.4zM752.3 640.2h5.2v1.8h-5.2zM767.0 640.2h3.5v1.8h-3.5zM835.8 640.2h3.5v1.8h-3.5zM845.6 640.2h3.5v1.8h-3.5zM860.4 640.2h1.9v1.8h-1.9zM863.6 640.2h1.9v1.8h-1.9zM659.9 641.6h3.5v1.8h-3.5zM684.5 641.6h6.8v1.8h-6.8zM694.3 641.6h8.4v1.8h-8.4zM753.1 641.6h3.5v1.8h-3.5zM766.2 641.6h5.2v1.8h-5.2zM836.5 641.6h3.5v1.8h-3.5zM846.3 641.6h1.9v1.8h-1.9zM659.3 643.1h3.5v1.8h-3.5zM685.5 643.1h3.5v1.8h-3.5zM698.5 643.1h3.5v1.8h-3.5zM752.4 643.1h5.1v1.8h-5.1zM767.1 643.1h3.5v1.8h-3.5zM837.3 643.1h3.5v1.8h-3.5zM848.7 643.1h1.9v1.8h-1.9zM686.4 644.6h3.5v1.8h-3.5zM697.8 644.6h3.5v1.8h-3.5zM753.3 644.6h3.5v1.8h-3.5zM766.3 644.6h5.1v1.8h-5.1zM838.0 644.6h1.9v1.8h-1.9zM847.8 644.6h3.5v1.8h-3.5zM658.1 646.0h3.5v1.8h-3.5zM687.4 646.0h3.5v1.8h-3.5zM698.8 646.0h1.9v1.8h-1.9zM752.5 646.0h3.5v1.8h-3.5zM767.1 646.0h3.5v1.8h-3.5zM838.7 646.0h3.5v1.8h-3.5zM848.5 646.0h3.5v1.8h-3.5zM688.4 647.5h5.1v1.8h-5.1zM696.5 647.5h3.5v1.8h-3.5zM751.7 647.5h5.1v1.8h-5.1zM766.4 647.5h5.1v1.8h-5.1zM839.5 647.5h1.9v1.8h-1.9zM849.2 647.5h3.5v1.8h-3.5zM674.8 648.9h6.7v1.8h-6.7zM691.0 648.9h3.5v1.8h-3.5zM752.6 648.9h3.5v1.8h-3.5zM767.2 648.9h1.9v1.8h-1.9zM840.2 648.9h1.9v1.8h-1.9zM849.9 648.9h1.9v1.8h-1.9zM672.6 650.4h8.3v1.8h-8.3zM693.6 650.4h1.9v1.8h-1.9zM696.8 650.4h1.9v1.8h-1.9zM751.9 650.4h8.3v1.8h-8.3zM763.2 650.4h6.7v1.8h-6.7zM840.9 650.4h1.9v1.8h-1.9zM850.6 650.4h1.9v1.8h-1.9zM673.6 651.8h3.5v1.7h-3.5zM678.4 651.8h3.5v1.7h-3.5zM752.8 651.8h18.0v1.7h-18.0zM840.0 651.8h1.9v1.7h-1.9zM849.7 651.8h1.9v1.7h-1.9zM679.4 653.3h3.5v1.7h-3.5zM756.9 653.3h9.9v1.7h-9.9zM839.2 653.3h3.5v1.7h-3.5zM848.8 653.3h3.5v1.7h-3.5zM662.7 654.7h1.9v1.7h-1.9zM677.2 654.7h5.1v1.7h-5.1zM838.3 654.7h3.5v1.7h-3.5zM846.3 654.7h5.1v1.7h-5.1zM658.9 656.2h3.5v1.7h-3.5zM839.0 656.2h1.9v1.7h-1.9zM847.1 656.2h3.5v1.7h-3.5zM658.3 657.6h3.5v1.7h-3.5zM838.1 657.6h3.5v1.7h-3.5zM844.6 657.6h3.5v1.7h-3.5zM656.1 659.1h5.1v1.7h-5.1zM837.3 659.1h3.5v1.7h-3.5zM843.7 659.1h5.1v1.7h-5.1zM655.6 660.5h3.5v1.7h-3.5zM804.4 660.5h3.5v1.7h-3.5zM831.6 660.5h3.5v1.7h-3.5zM836.4 660.5h1.9v1.7h-1.9zM844.4 660.5h1.9v1.7h-1.9zM655.0 661.9h3.4v1.7h-3.4zM808.4 661.9h17.8v1.7h-17.8zM829.2 661.9h5.0v1.7h-5.0zM845.2 661.9h1.8v1.7h-1.8zM796.4 663.4h3.4v1.7h-3.4zM806.0 663.4h1.8v1.7h-1.8zM814.0 663.4h17.8v1.7h-17.8zM833.1 663.4h1.8v1.7h-1.8zM794.1 664.8h8.2v1.7h-8.2zM814.8 664.8h6.6v1.7h-6.6zM830.7 664.8h3.4v1.7h-3.4zM650.1 666.2h1.8v1.7h-1.8zM794.9 666.2h5.0v1.7h-5.0zM831.5 666.2h3.4v1.7h-3.4zM648.0 667.7h5.0v1.7h-5.0zM797.3 667.7h1.8v1.7h-1.8zM800.5 667.7h1.8v1.7h-1.8zM830.6 667.7h3.4v1.7h-3.4zM804.4 669.1h1.8v1.7h-1.8zM831.4 669.1h3.4v1.7h-3.4zM805.2 670.5h5.0v1.7h-5.0zM830.6 670.5h3.4v1.7h-3.4zM804.4 671.9h8.2v1.7h-8.2zM829.7 671.9h3.4v1.7h-3.4zM641.1 673.3h5.0v1.7h-5.0zM808.4 673.3h3.4v1.7h-3.4zM814.7 673.3h1.8v1.7h-1.8zM828.9 673.3h5.0v1.7h-5.0zM810.8 674.7h8.1v1.7h-8.1zM829.7 674.7h3.4v1.7h-3.4zM641.6 676.2h1.8v1.7h-1.8zM816.3 676.2h6.5v1.7h-6.5zM830.5 676.2h1.8v1.7h-1.8zM817.1 677.6h9.7v1.7h-9.7zM618.6 679.0h8.1v1.7h-8.1zM628.0 679.0h1.8v1.7h-1.8zM631.2 679.0h3.4v1.7h-3.4zM821.0 679.0h1.8v1.7h-1.8zM824.1 679.0h3.4v1.7h-3.4zM830.4 679.0h1.8v1.7h-1.8zM613.5 680.4h12.8v1.7h-12.8zM627.6 680.4h1.8v1.7h-1.8zM630.7 680.4h1.8v1.7h-1.8zM829.6 680.4h1.8v1.7h-1.8zM608.3 681.8h1.8v1.7h-1.8zM611.4 681.8h9.6v1.7h-9.6zM604.7 683.2h3.4v1.7h-3.4zM602.7 684.6h6.5v1.7h-6.5zM602.2 686.0h1.8v1.7h-1.8zM1009.8 701.2h1.8v1.7h-1.8zM1008.8 702.6h4.8v1.7h-4.8zM1009.3 704.0h6.4v1.7h-6.4zM1020.0 704.0h1.8v1.7h-1.8zM1023.0 704.0h3.3v1.7h-3.3zM1012.9 705.3h1.8v1.7h-1.8zM1020.5 705.3h6.4v1.7h-6.4z"/><path fill="#5db39e" d="M971.5 97.1h3.9v3.6h-3.9zM967.8 100.4h11.2v3.6h-11.2zM957.0 103.7h3.9v3.5h-3.9zM964.2 103.7h3.9v3.5h-3.9zM971.4 103.7h11.1v3.5h-11.1zM957.0 106.9h25.4v3.5h-25.4zM957.0 110.1h18.1v3.5h-18.1zM885.9 113.3h10.9v3.5h-10.9zM903.7 113.3h3.8v3.5h-3.8zM957.1 113.3h3.8v3.5h-3.8zM964.2 113.3h7.4v3.5h-7.4zM889.9 116.5h7.3v3.5h-7.3zM904.0 116.5h3.8v3.5h-3.8zM957.1 116.5h3.8v3.5h-3.8zM964.2 116.5h3.8v3.5h-3.8zM890.3 119.7h7.3v3.5h-7.3zM904.3 119.7h3.8v3.5h-3.8zM894.2 122.9h3.8v3.4h-3.8zM904.7 122.9h7.3v3.4h-7.3zM939.7 122.9h3.8v3.4h-3.8zM905.0 126.0h7.2v3.4h-7.2zM932.9 126.0h3.7v3.4h-3.7zM909.1 132.2h14.0v3.4h-14.0zM926.3 132.2h3.7v3.4h-3.7zM919.7 135.3h7.1v3.4h-7.1zM879.0 138.4h10.5v3.4h-10.5zM909.7 138.4h3.7v3.4h-3.7zM919.9 138.4h10.5v3.4h-10.5zM879.4 141.5h10.4v3.3h-10.4zM916.8 141.5h3.6v3.3h-3.6zM863.0 144.5h3.6v3.3h-3.6zM876.5 144.5h20.5v3.3h-20.5zM877.0 147.5h20.4v3.3h-20.4zM887.5 150.5h10.3v3.3h-10.3zM841.3 153.5h13.6v3.3h-13.6zM884.6 153.5h10.2v3.3h-10.2zM841.9 156.5h13.5v3.3h-13.5zM861.8 156.5h3.6v3.3h-3.6zM871.7 156.5h3.6v3.3h-3.6zM878.4 156.5h3.6v3.3h-3.6zM839.3 159.5h16.7v3.3h-16.7zM862.3 159.5h3.5v3.3h-3.5zM868.9 159.5h10.1v3.3h-10.1zM839.9 162.4h16.7v3.2h-16.7zM862.9 162.4h16.7v3.2h-16.7zM850.3 165.4h3.5v3.2h-3.5zM863.4 165.4h6.8v3.2h-6.8zM876.5 165.4h3.5v3.2h-3.5zM841.2 168.3h10.0v3.2h-10.0zM867.2 168.3h3.5v3.2h-3.5zM876.9 168.3h3.5v3.2h-3.5zM841.8 171.2h3.5v3.2h-3.5zM851.5 171.2h3.5v3.2h-3.5zM870.9 171.2h6.7v3.2h-6.7zM880.6 171.2h3.5v3.2h-3.5zM842.5 174.1h3.5v3.2h-3.5zM861.8 174.1h3.5v3.2h-3.5zM874.7 174.1h6.7v3.2h-6.7zM846.3 177.0h6.7v3.2h-6.7zM907.2 177.0h3.5v3.2h-3.5zM823.6 188.4h3.4v3.1h-3.4zM829.9 188.4h3.4v3.1h-3.4zM836.2 188.4h9.7v3.1h-9.7zM824.3 191.2h6.5v3.1h-6.5zM836.8 191.2h3.4v3.1h-3.4zM846.2 191.2h6.5v3.1h-6.5zM818.8 194.0h3.4v3.1h-3.4zM834.4 194.0h6.5v3.1h-6.5zM825.7 196.8h3.4v3.1h-3.4zM835.0 196.8h15.8v3.1h-15.8zM820.2 199.6h3.3v3.1h-3.3zM844.9 199.6h3.3v3.1h-3.3zM821.0 202.4h6.4v3.1h-6.4zM842.5 202.4h9.5v3.1h-9.5zM818.6 205.1h15.5v3.0h-15.5zM843.1 205.1h6.4v3.0h-6.4zM816.3 207.9h3.3v3.0h-3.3zM831.5 207.9h18.5v3.0h-18.5zM826.2 210.6h3.3v3.0h-3.3zM835.3 210.6h3.3v3.0h-3.3zM841.3 210.6h3.3v3.0h-3.3zM823.8 213.3h6.3v3.0h-6.3zM835.9 213.3h12.3v3.0h-12.3zM815.5 216.0h15.3v3.0h-15.3zM833.6 216.0h6.3v3.0h-6.3zM842.6 216.0h6.3v3.0h-6.3zM819.3 218.7h3.2v3.0h-3.2zM837.2 218.7h3.2v3.0h-3.2zM846.2 218.7h3.2v3.0h-3.2zM817.0 221.4h3.2v3.0h-3.2zM834.9 221.4h15.1v3.0h-15.1zM817.7 224.0h6.2v3.0h-6.2zM829.6 224.0h3.2v3.0h-3.2zM835.5 224.0h3.2v3.0h-3.2zM815.5 226.7h6.2v2.9h-6.2zM827.3 226.7h3.2v2.9h-3.2zM833.2 226.7h6.2v2.9h-6.2zM816.2 229.4h6.1v2.9h-6.1zM833.9 229.4h9.1v2.9h-9.1zM819.9 232.0h3.2v2.9h-3.2zM825.8 232.0h3.2v2.9h-3.2zM834.5 232.0h6.1v2.9h-6.1zM817.7 234.6h11.9v2.9h-11.9zM832.3 234.6h3.2v2.9h-3.2zM818.4 237.2h6.1v2.9h-6.1zM827.1 237.2h6.1v2.9h-6.1zM819.1 239.8h14.7v2.9h-14.7zM799.7 242.4h3.1v2.9h-3.1zM805.5 242.4h3.1v2.9h-3.1zM814.1 242.4h6.0v2.9h-6.0zM797.6 245.0h3.1v2.9h-3.1zM812.0 245.0h3.1v2.9h-3.1zM795.6 247.6h6.0v2.9h-6.0zM812.7 247.6h3.1v2.9h-3.1zM796.4 250.1h3.1v2.8h-3.1zM802.1 250.1h3.1v2.8h-3.1zM813.4 250.1h3.1v2.8h-3.1zM802.8 252.7h11.6v2.8h-11.6zM798.0 255.2h5.9v2.8h-5.9zM796.0 257.7h3.1v2.8h-3.1zM804.4 257.7h3.1v2.8h-3.1zM796.8 260.3h3.0v2.8h-3.0zM811.5 262.8h3.0v2.8h-3.0zM795.6 265.3h3.0v2.8h-3.0zM803.9 265.3h3.0v2.8h-3.0zM809.5 265.3h3.0v2.8h-3.0zM796.4 267.8h3.0v2.8h-3.0zM807.5 267.8h3.0v2.8h-3.0zM797.2 270.2h3.0v2.8h-3.0zM802.7 270.2h3.0v2.8h-3.0zM808.2 270.2h5.8v2.8h-5.8zM809.0 272.7h3.0v2.8h-3.0zM814.4 272.7h5.7v2.8h-5.7zM799.6 277.6h3.0v2.7h-3.0zM797.6 280.0h3.0v2.7h-3.0zM805.8 280.0h5.7v2.7h-5.7zM801.1 282.5h3.0v2.7h-3.0zM806.5 282.5h3.0v2.7h-3.0zM811.9 282.5h3.0v2.7h-3.0zM801.9 284.9h5.6v2.7h-5.6zM810.0 284.9h2.9v2.7h-2.9zM808.0 287.3h8.3v2.7h-8.3zM795.4 289.7h10.9v2.7h-10.9zM808.8 289.7h5.6v2.7h-5.6zM796.2 292.1h5.6v2.7h-5.6zM804.2 292.1h2.9v2.7h-2.9zM802.3 294.5h5.6v2.7h-5.6zM811.8 564.9h3.8v1.9h-3.8zM812.5 566.5h9.2v1.9h-9.2zM813.3 568.1h9.2v1.9h-9.2zM812.2 569.7h12.7v1.9h-12.7zM812.9 571.3h12.7v1.9h-12.7zM813.7 572.9h12.7v1.9h-12.7zM814.4 574.5h7.3v1.9h-7.3zM823.3 574.5h5.6v1.9h-5.6zM813.4 576.1h7.3v1.9h-7.3zM822.2 576.1h7.3v1.9h-7.3zM815.9 577.7h14.4v1.9h-14.4zM816.6 579.3h9.1v1.9h-9.1zM827.2 579.3h2.0v1.9h-2.0zM819.1 580.9h5.5v1.9h-5.5zM827.9 580.9h2.0v1.9h-2.0zM831.4 580.9h2.0v1.9h-2.0zM819.9 582.4h3.8v1.9h-3.8zM822.3 584.0h5.5v1.9h-5.5zM831.1 584.0h2.0v1.9h-2.0zM823.1 585.6h9.0v1.9h-9.0zM837.1 585.6h2.0v1.9h-2.0zM825.5 587.1h2.0v1.9h-2.0zM829.0 587.1h5.5v1.9h-5.5zM826.3 588.7h3.7v1.9h-3.7zM831.5 588.7h2.0v1.9h-2.0zM838.5 588.7h3.7v1.9h-3.7zM828.7 590.3h7.2v1.9h-7.2zM837.4 590.3h7.2v1.9h-7.2zM829.4 591.8h2.0v1.9h-2.0zM836.4 591.8h7.2v1.9h-7.2zM845.1 591.8h2.0v1.9h-2.0zM831.9 593.4h14.1v1.9h-14.1zM834.3 594.9h7.2v1.8h-7.2zM846.4 594.9h3.7v1.8h-3.7zM835.0 596.5h5.4v1.8h-5.4zM841.9 596.5h3.7v1.8h-3.7zM847.1 596.5h5.4v1.8h-5.4zM837.5 598.0h17.5v1.8h-17.5zM838.2 599.6h19.2v1.8h-19.2zM842.3 601.1h17.4v1.8h-17.4zM846.4 602.6h15.7v1.8h-15.7zM850.5 604.2h13.9v1.8h-13.9zM852.9 605.7h8.8v1.8h-8.8zM864.9 605.7h2.0v1.8h-2.0zM857.0 607.2h3.7v1.8h-3.7zM862.1 607.2h2.0v1.8h-2.0zM865.5 607.2h2.0v1.8h-2.0zM862.8 608.8h3.6v1.8h-3.6zM943.9 631.3h1.9v1.8h-1.9zM944.4 632.8h3.6v1.8h-3.6zM926.8 634.3h3.5v1.8h-3.5zM562.0 635.8h5.2v1.8h-5.2zM920.8 635.8h3.5v1.8h-3.5zM927.4 635.8h5.2v1.8h-5.2zM563.2 637.2h1.9v1.8h-1.9zM928.0 637.2h3.5v1.8h-3.5zM562.7 638.7h3.5v1.8h-3.5zM930.2 638.7h1.9v1.8h-1.9zM938.4 638.7h6.8v1.8h-6.8zM562.3 640.2h5.2v1.8h-5.2zM880.0 640.2h3.5v1.8h-3.5zM891.5 640.2h3.5v1.8h-3.5zM896.4 640.2h3.5v1.8h-3.5zM929.1 640.2h1.9v1.8h-1.9zM939.0 640.2h6.8v1.8h-6.8zM561.8 641.6h5.2v1.8h-5.2zM877.4 641.6h1.9v1.8h-1.9zM888.8 641.6h11.7v1.8h-11.7zM937.9 641.6h8.4v1.8h-8.4zM561.4 643.1h5.1v1.8h-5.1zM876.4 643.1h1.9v1.8h-1.9zM883.0 643.1h1.9v1.8h-1.9zM886.2 643.1h1.9v1.8h-1.9zM889.5 643.1h10.0v1.8h-10.0zM938.5 643.1h6.8v1.8h-6.8zM561.0 644.6h5.1v1.8h-5.1zM877.1 644.6h3.5v1.8h-3.5zM885.2 644.6h3.5v1.8h-3.5zM890.1 644.6h10.0v1.8h-10.0zM914.6 644.6h8.4v1.8h-8.4zM926.0 644.6h6.8v1.8h-6.8zM560.5 646.0h6.8v1.8h-6.8zM879.4 646.0h1.9v1.8h-1.9zM884.3 646.0h16.5v1.8h-16.5zM915.2 646.0h6.8v1.8h-6.8zM926.6 646.0h6.8v1.8h-6.8zM560.1 647.5h6.7v1.8h-6.7zM878.4 647.5h1.9v1.8h-1.9zM886.6 647.5h1.9v1.8h-1.9zM889.8 647.5h3.5v1.8h-3.5zM894.7 647.5h5.1v1.8h-5.1zM915.8 647.5h16.5v1.8h-16.5zM949.9 647.5h1.9v1.8h-1.9zM953.1 647.5h5.1v1.8h-5.1zM559.7 648.9h6.7v1.8h-6.7zM877.5 648.9h3.5v1.8h-3.5zM887.2 648.9h1.9v1.8h-1.9zM890.5 648.9h3.5v1.8h-3.5zM914.8 648.9h5.1v1.8h-5.1zM924.5 648.9h8.4v1.8h-8.4zM948.8 648.9h1.9v1.8h-1.9zM953.7 648.9h5.1v1.8h-5.1zM559.2 650.4h8.3v1.8h-8.3zM876.5 650.4h1.9v1.8h-1.9zM915.4 650.4h5.1v1.8h-5.1zM921.9 650.4h1.9v1.8h-1.9zM925.1 650.4h5.1v1.8h-5.1zM947.8 650.4h1.9v1.8h-1.9zM951.0 650.4h1.9v1.8h-1.9zM954.2 650.4h5.1v1.8h-5.1zM560.4 651.8h1.9v1.7h-1.9zM563.7 651.8h3.5v1.7h-3.5zM877.2 651.8h6.7v1.7h-6.7zM916.0 651.8h5.1v1.7h-5.1zM924.1 651.8h3.5v1.7h-3.5zM932.2 651.8h5.1v1.7h-5.1zM948.3 651.8h3.5v1.7h-3.5zM954.8 651.8h3.5v1.7h-3.5zM558.4 653.3h1.9v1.7h-1.9zM563.2 653.3h3.5v1.7h-3.5zM877.9 653.3h6.7v1.7h-6.7zM890.8 653.3h6.7v1.7h-6.7zM924.7 653.3h1.9v1.7h-1.9zM932.7 653.3h5.1v1.7h-5.1zM558.0 654.7h8.3v1.7h-8.3zM876.9 654.7h5.1v1.7h-5.1zM885.0 654.7h1.9v1.7h-1.9zM893.0 654.7h6.7v1.7h-6.7zM915.6 654.7h3.5v1.7h-3.5zM920.4 654.7h6.7v1.7h-6.7zM931.7 654.7h5.1v1.7h-5.1zM557.5 656.2h3.5v1.7h-3.5zM562.4 656.2h1.9v1.7h-1.9zM565.6 656.2h1.9v1.7h-1.9zM877.6 656.2h5.1v1.7h-5.1zM890.5 656.2h9.9v1.7h-9.9zM914.6 656.2h1.9v1.7h-1.9zM922.7 656.2h3.5v1.7h-3.5zM946.8 656.2h6.7v1.7h-6.7zM557.1 657.6h1.9v1.7h-1.9zM560.3 657.6h6.7v1.7h-6.7zM876.7 657.6h1.9v1.7h-1.9zM879.9 657.6h1.9v1.7h-1.9zM892.7 657.6h8.3v1.7h-8.3zM918.4 657.6h8.3v1.7h-8.3zM945.7 657.6h5.1v1.7h-5.1zM952.2 657.6h1.9v1.7h-1.9zM558.3 659.1h8.3v1.7h-8.3zM891.8 659.1h6.7v1.7h-6.7zM915.8 659.1h1.9v1.7h-1.9zM920.7 659.1h1.9v1.7h-1.9zM923.9 659.1h1.9v1.7h-1.9zM944.7 659.1h8.3v1.7h-8.3zM562.7 660.5h3.5v1.7h-3.5zM879.6 660.5h1.9v1.7h-1.9zM886.0 660.5h1.9v1.7h-1.9zM890.9 660.5h8.3v1.7h-8.3zM916.5 660.5h1.9v1.7h-1.9zM919.7 660.5h8.3v1.7h-8.3zM945.3 660.5h8.3v1.7h-8.3zM562.3 661.9h5.0v1.7h-5.0zM878.7 661.9h6.6v1.7h-6.6zM886.7 661.9h1.8v1.7h-1.8zM891.5 661.9h8.2v1.7h-8.2zM904.3 661.9h5.0v1.7h-5.0zM920.3 661.9h6.6v1.7h-6.6zM928.3 661.9h3.4v1.7h-3.4zM945.8 661.9h8.2v1.7h-8.2zM563.5 663.4h3.4v1.7h-3.4zM881.0 663.4h3.4v1.7h-3.4zM885.8 663.4h5.0v1.7h-5.0zM892.2 663.4h6.6v1.7h-6.6zM917.7 663.4h6.6v1.7h-6.6zM925.7 663.4h8.2v1.7h-8.2zM563.1 664.8h1.8v1.7h-1.8zM889.6 664.8h3.4v1.7h-3.4zM916.7 664.8h6.6v1.7h-6.6zM924.7 664.8h1.8v1.7h-1.8zM564.2 666.2h1.8v1.7h-1.8zM890.3 666.2h1.8v1.7h-1.8zM915.8 666.2h9.8v1.7h-9.8zM563.8 667.7h3.4v1.7h-3.4zM876.7 667.7h1.8v1.7h-1.8zM887.8 667.7h1.8v1.7h-1.8zM891.0 667.7h3.4v1.7h-3.4zM919.6 667.7h5.0v1.7h-5.0zM927.5 667.7h1.8v1.7h-1.8zM951.3 667.7h11.4v1.7h-11.4zM563.4 669.1h3.4v1.7h-3.4zM885.3 669.1h1.8v1.7h-1.8zM888.5 669.1h3.4v1.7h-3.4zM913.8 669.1h3.4v1.7h-3.4zM921.8 669.1h3.4v1.7h-3.4zM928.1 669.1h1.8v1.7h-1.8zM953.5 669.1h8.2v1.7h-8.2zM564.6 670.5h1.8v1.7h-1.8zM886.0 670.5h1.8v1.7h-1.8zM889.1 670.5h3.4v1.7h-3.4zM906.6 670.5h1.8v1.7h-1.8zM912.9 670.5h6.6v1.7h-6.6zM920.8 670.5h5.0v1.7h-5.0zM927.1 670.5h6.6v1.7h-6.6zM938.2 670.5h1.8v1.7h-1.8zM955.6 670.5h12.9v1.7h-12.9zM564.2 671.9h3.4v1.7h-3.4zM886.6 671.9h1.8v1.7h-1.8zM889.8 671.9h1.8v1.7h-1.8zM893.0 671.9h1.8v1.7h-1.8zM911.9 671.9h6.6v1.7h-6.6zM919.8 671.9h5.0v1.7h-5.0zM926.2 671.9h6.6v1.7h-6.6zM935.7 671.9h1.8v1.7h-1.8zM954.6 671.9h14.5v1.7h-14.5zM565.3 673.3h1.8v1.7h-1.8zM881.0 673.3h1.8v1.7h-1.8zM896.8 673.3h1.8v1.7h-1.8zM906.3 673.3h3.4v1.7h-3.4zM911.0 673.3h16.0v1.7h-16.0zM928.4 673.3h11.3v1.7h-11.3zM958.4 673.3h1.8v1.7h-1.8zM961.5 673.3h3.4v1.7h-3.4zM967.8 673.3h1.8v1.7h-1.8zM564.9 674.7h1.8v1.7h-1.8zM903.8 674.7h6.6v1.7h-6.6zM911.6 674.7h23.9v1.7h-23.9zM936.9 674.7h1.8v1.7h-1.8zM949.5 674.7h1.8v1.7h-1.8zM960.5 674.7h3.4v1.7h-3.4zM906.0 676.2h31.7v1.7h-31.7zM939.0 676.2h1.8v1.7h-1.8zM950.0 676.2h3.4v1.7h-3.4zM908.2 677.6h16.0v1.7h-16.0zM934.9 677.6h3.4v1.7h-3.4zM949.1 677.6h1.8v1.7h-1.8zM952.2 677.6h1.8v1.7h-1.8zM964.8 677.6h3.4v1.7h-3.4zM908.9 679.0h3.4v1.7h-3.4zM913.6 679.0h12.8v1.7h-12.8zM932.4 679.0h3.4v1.7h-3.4zM954.4 679.0h1.8v1.7h-1.8zM963.8 679.0h1.8v1.7h-1.8zM966.9 679.0h1.8v1.7h-1.8zM909.5 680.4h6.5v1.7h-6.5zM920.5 680.4h3.4v1.7h-3.4zM934.6 680.4h3.4v1.7h-3.4zM951.8 680.4h6.5v1.7h-6.5zM959.6 680.4h4.9v1.7h-4.9zM965.9 680.4h3.4v1.7h-3.4zM897.6 681.8h1.8v1.7h-1.8zM908.6 681.8h8.1v1.7h-8.1zM932.1 681.8h1.8v1.7h-1.8zM935.2 681.8h1.8v1.7h-1.8zM952.4 681.8h8.1v1.7h-8.1zM961.8 681.8h8.1v1.7h-8.1zM909.3 683.2h11.2v1.7h-11.2zM932.7 683.2h1.8v1.7h-1.8zM953.0 683.2h6.5v1.7h-6.5zM962.4 683.2h1.8v1.7h-1.8zM965.5 683.2h3.4v1.7h-3.4zM897.4 684.6h3.4v1.7h-3.4zM906.8 684.6h1.8v1.7h-1.8zM909.9 684.6h1.8v1.7h-1.8zM930.2 684.6h1.8v1.7h-1.8zM947.3 684.6h11.2v1.7h-11.2zM929.2 686.0h4.9v1.7h-4.9zM944.8 686.0h4.9v1.7h-4.9zM952.6 686.0h3.4v1.7h-3.4zM957.3 686.0h1.8v1.7h-1.8zM960.4 686.0h1.8v1.7h-1.8zM928.3 687.4h3.4v1.7h-3.4zM933.0 687.4h1.8v1.7h-1.8zM945.4 687.4h3.4v1.7h-3.4zM950.1 687.4h11.1v1.7h-11.1zM928.9 688.8h6.5v1.7h-6.5zM946.0 688.8h6.5v1.7h-6.5zM953.8 688.8h8.0v1.7h-8.0zM926.5 690.2h6.5v1.7h-6.5zM943.5 690.2h1.8v1.7h-1.8zM946.6 690.2h3.4v1.7h-3.4zM951.3 690.2h6.5v1.7h-6.5zM922.2 694.3h1.8v1.7h-1.8zM924.4 695.7h11.0v1.7h-11.0zM939.8 695.7h1.8v1.7h-1.8zM942.9 695.7h1.8v1.7h-1.8zM949.1 695.7h1.8v1.7h-1.8zM923.5 697.1h9.5v1.7h-9.5zM940.4 697.1h3.3v1.7h-3.3zM952.8 697.1h3.3v1.7h-3.3zM921.1 698.5h1.8v1.7h-1.8zM924.2 698.5h11.0v1.7h-11.0zM941.1 698.5h1.8v1.7h-1.8zM950.3 698.5h1.8v1.7h-1.8zM953.4 698.5h3.3v1.7h-3.3zM921.7 699.8h12.5v1.7h-12.5zM950.9 699.8h3.3v1.7h-3.3zM933.1 701.2h4.8v1.7h-4.8zM939.3 701.2h3.3v1.7h-3.3zM953.0 701.2h3.3v1.7h-3.3zM953.7 702.6h1.8v1.7h-1.8z"/><path fill="#e5896c" d="M947.2 336.0h2.7v2.5h-2.7zM942.5 338.2h2.7v2.5h-2.7zM952.5 338.2h7.7v2.5h-7.7zM925.5 340.4h2.7v2.5h-2.7zM930.5 340.4h2.7v2.5h-2.7zM940.4 340.4h7.7v2.5h-7.7zM950.2 340.4h17.5v2.5h-17.5zM921.0 342.6h5.2v2.5h-5.2zM943.1 342.6h7.6v2.5h-7.6zM952.9 342.6h5.2v2.5h-5.2zM960.3 342.6h10.1v2.5h-10.1zM918.9 344.8h2.7v2.5h-2.7zM928.7 344.8h7.6v2.5h-7.6zM940.9 344.8h7.6v2.5h-7.6zM950.7 344.8h7.6v2.5h-7.6zM960.5 344.8h10.1v2.5h-10.1zM909.4 347.0h2.7v2.5h-2.7zM929.0 347.0h7.6v2.5h-7.6zM941.2 347.0h5.1v2.5h-5.1zM951.0 347.0h7.6v2.5h-7.6zM914.7 349.2h2.7v2.5h-2.7zM922.0 349.2h10.0v2.5h-10.0zM936.6 349.2h10.0v2.5h-10.0zM948.8 349.2h7.6v2.5h-7.6zM963.4 349.2h5.1v2.5h-5.1zM910.2 351.4h5.1v2.5h-5.1zM922.4 351.4h10.0v2.5h-10.0zM936.9 351.4h19.7v2.5h-19.7zM961.2 351.4h7.5v2.5h-7.5zM922.7 353.6h9.9v2.5h-9.9zM937.2 353.6h17.2v2.5h-17.2zM961.4 353.6h9.9v2.5h-9.9zM911.0 355.7h9.9v2.5h-9.9zM923.1 355.7h12.3v2.5h-12.3zM937.5 355.7h9.9v2.5h-9.9zM949.6 355.7h21.9v2.5h-21.9zM904.2 357.9h17.1v2.5h-17.1zM925.8 357.9h19.5v2.5h-19.5zM949.8 357.9h21.9v2.5h-21.9zM904.6 360.0h14.6v2.4h-14.6zM935.7 360.0h36.2v2.4h-36.2zM905.0 362.2h12.2v2.4h-12.2zM940.8 362.2h9.8v2.4h-9.8zM952.8 362.2h14.6v2.4h-14.6zM905.4 364.3h2.6v2.4h-2.6zM938.7 364.3h26.4v2.4h-26.4zM905.8 366.5h2.6v2.4h-2.6zM941.4 366.5h24.0v2.4h-24.0zM944.1 368.6h21.5v2.4h-21.5zM967.7 368.6h2.6v2.4h-2.6zM946.7 370.7h19.1v2.4h-19.1zM967.9 370.7h2.6v2.4h-2.6zM954.1 372.8h9.6v2.4h-9.6zM965.8 372.8h4.9v2.4h-4.9zM771.7 374.9h7.3v2.4h-7.3zM902.8 374.9h2.6v2.4h-2.6zM945.0 374.9h2.6v2.4h-2.6zM954.3 374.9h4.9v2.4h-4.9zM961.4 374.9h2.6v2.4h-2.6zM966.0 374.9h2.6v2.4h-2.6zM767.8 377.0h11.9v2.4h-11.9zM900.9 377.0h4.9v2.4h-4.9zM907.9 377.0h2.6v2.4h-2.6zM764.0 379.1h7.2v2.4h-7.2zM775.7 379.1h2.6v2.4h-2.6zM906.0 379.1h7.2v2.4h-7.2zM943.2 379.1h2.6v2.4h-2.6zM947.9 379.1h4.9v2.4h-4.9zM762.6 381.2h4.9v2.4h-4.9zM769.5 381.2h2.6v2.4h-2.6zM908.7 381.2h4.9v2.4h-4.9zM943.5 381.2h11.8v2.4h-11.8zM756.5 383.3h7.2v2.4h-7.2zM770.4 383.3h2.6v2.4h-2.6zM902.2 383.3h4.9v2.4h-4.9zM909.1 383.3h2.6v2.4h-2.6zM916.1 383.3h4.9v2.4h-4.9zM948.5 383.3h2.6v2.4h-2.6zM755.1 385.3h21.0v2.4h-21.0zM900.3 385.3h4.9v2.4h-4.9zM911.9 385.3h4.9v2.4h-4.9zM925.7 385.3h2.6v2.4h-2.6zM951.1 385.3h4.9v2.4h-4.9zM753.7 387.4h9.4v2.4h-9.4zM767.5 387.4h9.4v2.4h-9.4zM903.1 387.4h2.5v2.4h-2.5zM910.0 387.4h2.5v2.4h-2.5zM916.9 387.4h2.5v2.4h-2.5zM921.5 387.4h2.5v2.4h-2.5zM926.1 387.4h4.8v2.4h-4.8zM951.3 387.4h4.8v2.4h-4.8zM752.3 389.5h11.7v2.4h-11.7zM770.6 389.5h7.1v2.4h-7.1zM910.4 389.5h2.5v2.4h-2.5zM915.0 389.5h2.5v2.4h-2.5zM919.5 389.5h4.8v2.4h-4.8zM926.4 389.5h4.8v2.4h-4.8zM951.6 389.5h7.1v2.4h-7.1zM753.2 391.5h11.7v2.3h-11.7zM766.9 391.5h2.5v2.3h-2.5zM776.0 391.5h2.5v2.3h-2.5zM846.8 391.5h2.5v2.3h-2.5zM897.1 391.5h2.5v2.3h-2.5zM903.9 391.5h2.5v2.3h-2.5zM908.5 391.5h2.5v2.3h-2.5zM922.2 391.5h7.1v2.3h-7.1zM931.4 391.5h2.5v2.3h-2.5zM935.9 391.5h4.8v2.3h-4.8zM751.8 393.6h9.4v2.3h-9.4zM763.2 393.6h4.8v2.3h-4.8zM774.6 393.6h7.1v2.3h-7.1zM845.2 393.6h2.5v2.3h-2.5zM897.5 393.6h2.5v2.3h-2.5zM902.1 393.6h2.5v2.3h-2.5zM906.6 393.6h2.5v2.3h-2.5zM924.9 393.6h2.5v2.3h-2.5zM934.0 393.6h4.8v2.3h-4.8zM940.8 393.6h2.5v2.3h-2.5zM752.7 395.6h7.1v2.3h-7.1zM764.0 395.6h2.5v2.3h-2.5zM779.9 395.6h2.5v2.3h-2.5zM845.8 395.6h2.5v2.3h-2.5zM895.7 395.6h2.5v2.3h-2.5zM900.3 395.6h2.5v2.3h-2.5zM904.8 395.6h2.5v2.3h-2.5zM925.2 395.6h4.8v2.3h-4.8zM936.6 395.6h2.5v2.3h-2.5zM945.7 395.6h2.5v2.3h-2.5zM755.8 397.6h4.8v2.3h-4.8zM762.6 397.6h2.5v2.3h-2.5zM807.9 397.6h4.8v2.3h-4.8zM903.0 397.6h2.5v2.3h-2.5zM923.3 397.6h4.8v2.3h-4.8zM930.1 397.6h2.5v2.3h-2.5zM936.9 397.6h2.5v2.3h-2.5zM950.5 397.6h2.5v2.3h-2.5zM756.7 399.7h9.3v2.3h-9.3zM779.3 399.7h2.5v2.3h-2.5zM896.6 399.7h4.8v2.3h-4.8zM910.2 399.7h2.5v2.3h-2.5zM928.2 399.7h4.8v2.3h-4.8zM937.3 399.7h4.8v2.3h-4.8zM948.5 399.7h2.5v2.3h-2.5zM755.4 401.7h13.8v2.3h-13.8zM775.6 401.7h4.8v2.3h-4.8zM793.6 401.7h4.8v2.3h-4.8zM804.9 401.7h20.5v2.3h-20.5zM897.1 401.7h7.0v2.3h-7.0zM908.4 401.7h4.8v2.3h-4.8zM928.6 401.7h4.8v2.3h-4.8zM951.1 401.7h2.5v2.3h-2.5zM751.7 403.7h16.0v2.3h-16.0zM771.9 403.7h9.2v2.3h-9.2zM789.9 403.7h11.5v2.3h-11.5zM805.6 403.7h16.0v2.3h-16.0zM895.3 403.7h9.2v2.3h-9.2zM906.5 403.7h7.0v2.3h-7.0zM937.9 403.7h2.5v2.3h-2.5zM946.9 403.7h2.5v2.3h-2.5zM951.4 403.7h2.5v2.3h-2.5zM752.6 405.7h13.7v2.3h-13.7zM770.5 405.7h9.2v2.3h-9.2zM784.0 405.7h18.1v2.3h-18.1zM806.3 405.7h18.1v2.3h-18.1zM895.8 405.7h11.4v2.3h-11.4zM909.2 405.7h4.7v2.3h-4.7zM947.2 405.7h7.0v2.3h-7.0zM751.3 407.7h9.2v2.3h-9.2zM766.9 407.7h13.6v2.3h-13.6zM782.5 407.7h20.3v2.3h-20.3zM809.3 407.7h13.6v2.3h-13.6zM907.4 407.7h2.5v2.3h-2.5zM945.3 407.7h9.2v2.3h-9.2zM956.5 407.7h2.5v2.3h-2.5zM752.2 409.7h4.7v2.3h-4.7zM767.8 409.7h13.6v2.3h-13.6zM783.3 409.7h15.8v2.3h-15.8zM810.0 409.7h2.5v2.3h-2.5zM814.4 409.7h9.1v2.3h-9.1zM912.3 409.7h2.5v2.3h-2.5zM947.9 409.7h4.7v2.3h-4.7zM954.5 409.7h4.7v2.3h-4.7zM753.1 411.7h2.5v2.3h-2.5zM766.4 411.7h9.1v2.3h-9.1zM790.8 411.7h9.1v2.3h-9.1zM812.9 411.7h2.5v2.3h-2.5zM817.4 411.7h2.5v2.3h-2.5zM906.0 411.7h2.5v2.3h-2.5zM930.4 411.7h2.5v2.3h-2.5zM952.6 411.7h4.7v2.3h-4.7zM760.6 413.7h15.7v2.3h-15.7zM922.0 413.7h2.5v2.3h-2.5zM930.8 413.7h2.5v2.3h-2.5zM952.9 413.7h4.7v2.3h-4.7zM569.7 415.7h9.1v2.3h-9.1zM754.8 415.7h2.5v2.3h-2.5zM763.7 415.7h13.5v2.3h-13.5zM917.9 415.7h6.9v2.3h-6.9zM929.0 415.7h9.1v2.3h-9.1zM940.0 415.7h2.5v2.3h-2.5zM953.2 415.7h4.7v2.3h-4.7zM571.1 417.7h4.6v2.3h-4.6zM590.9 417.7h4.6v2.3h-4.6zM766.7 417.7h9.0v2.3h-9.0zM793.1 417.7h2.4v2.3h-2.4zM920.5 417.7h4.6v2.3h-4.6zM927.1 417.7h2.4v2.3h-2.4zM940.3 417.7h2.4v2.3h-2.4zM944.7 417.7h2.4v2.3h-2.4zM953.5 417.7h2.4v2.3h-2.4zM574.7 419.6h2.4v2.3h-2.4zM579.1 419.6h2.4v2.3h-2.4zM587.9 419.6h9.0v2.3h-9.0zM765.4 419.6h11.2v2.3h-11.2zM787.3 419.6h2.4v2.3h-2.4zM793.8 419.6h2.4v2.3h-2.4zM798.2 419.6h2.4v2.3h-2.4zM918.8 419.6h6.8v2.3h-6.8zM938.5 419.6h6.8v2.3h-6.8zM580.5 421.6h4.6v2.3h-4.6zM589.2 421.6h9.0v2.3h-9.0zM757.5 421.6h2.4v2.3h-2.4zM764.0 421.6h17.7v2.3h-17.7zM790.2 421.6h6.8v2.3h-6.8zM906.1 421.6h2.4v2.3h-2.4zM917.0 421.6h4.6v2.3h-4.6zM936.6 421.6h2.4v2.3h-2.4zM941.0 421.6h4.6v2.3h-4.6zM557.9 423.5h2.4v2.3h-2.4zM571.0 423.5h2.4v2.3h-2.4zM579.7 423.5h13.3v2.3h-13.3zM756.2 423.5h4.6v2.3h-4.6zM777.9 423.5h2.4v2.3h-2.4zM788.8 423.5h6.8v2.3h-6.8zM906.5 423.5h2.4v2.3h-2.4zM919.6 423.5h4.6v2.3h-4.6zM932.6 423.5h4.6v2.3h-4.6zM941.4 423.5h2.4v2.3h-2.4zM557.1 425.5h6.8v2.2h-6.8zM570.2 425.5h2.4v2.2h-2.4zM581.0 425.5h11.1v2.2h-11.1zM757.0 425.5h4.6v2.2h-4.6zM857.0 425.5h2.4v2.2h-2.4zM935.2 425.5h2.4v2.2h-2.4zM939.5 425.5h4.6v2.2h-4.6zM946.0 425.5h4.6v2.2h-4.6zM556.4 427.4h2.4v2.2h-2.4zM569.4 427.4h4.6v2.2h-4.6zM578.1 427.4h2.4v2.2h-2.4zM582.4 427.4h8.9v2.2h-8.9zM757.9 427.4h2.4v2.2h-2.4zM764.4 427.4h2.4v2.2h-2.4zM851.1 427.4h4.6v2.2h-4.6zM909.6 427.4h2.4v2.2h-2.4zM926.9 427.4h2.4v2.2h-2.4zM935.6 427.4h2.4v2.2h-2.4zM939.9 427.4h2.4v2.2h-2.4zM583.8 429.4h4.6v2.2h-4.6zM758.8 429.4h2.4v2.2h-2.4zM765.2 429.4h4.6v2.2h-4.6zM849.5 429.4h2.4v2.2h-2.4zM853.8 429.4h2.4v2.2h-2.4zM910.0 429.4h2.4v2.2h-2.4zM923.0 429.4h2.4v2.2h-2.4zM938.1 429.4h2.4v2.2h-2.4zM951.0 429.4h2.4v2.2h-2.4zM550.7 431.3h6.7v2.2h-6.7zM565.7 431.3h4.6v2.2h-4.6zM576.5 431.3h2.4v2.2h-2.4zM580.8 431.3h6.7v2.2h-6.7zM763.9 431.3h4.6v2.2h-4.6zM845.8 431.3h2.4v2.2h-2.4zM908.3 431.3h6.7v2.2h-6.7zM938.4 431.3h6.7v2.2h-6.7zM951.4 431.3h6.7v2.2h-6.7zM552.1 433.3h8.8v2.2h-8.8zM562.8 433.3h2.4v2.2h-2.4zM567.1 433.3h2.4v2.2h-2.4zM575.7 433.3h2.4v2.2h-2.4zM582.2 433.3h4.5v2.2h-4.5zM764.8 433.3h2.4v2.2h-2.4zM846.4 433.3h4.5v2.2h-4.5zM910.9 433.3h6.7v2.2h-6.7zM940.9 433.3h2.4v2.2h-2.4zM953.8 433.3h4.5v2.2h-4.5zM551.4 435.2h6.7v2.2h-6.7zM566.4 435.2h11.0v2.2h-11.0zM583.5 435.2h6.7v2.2h-6.7zM592.1 435.2h2.4v2.2h-2.4zM765.6 435.2h4.5v2.2h-4.5zM842.8 435.2h11.0v2.2h-11.0zM855.6 435.2h2.4v2.2h-2.4zM896.3 435.2h2.4v2.2h-2.4zM909.2 435.2h4.5v2.2h-4.5zM952.0 435.2h2.4v2.2h-2.4zM956.3 435.2h2.4v2.2h-2.4zM557.1 437.1h2.4v2.2h-2.4zM565.6 437.1h23.8v2.2h-23.8zM591.3 437.1h2.4v2.2h-2.4zM843.4 437.1h2.4v2.2h-2.4zM847.7 437.1h6.7v2.2h-6.7zM860.5 437.1h4.5v2.2h-4.5zM892.5 437.1h2.4v2.2h-2.4zM911.7 437.1h4.5v2.2h-4.5zM922.4 437.1h2.4v2.2h-2.4zM956.6 437.1h2.4v2.2h-2.4zM552.1 439.0h2.4v2.2h-2.4zM558.5 439.0h2.4v2.2h-2.4zM562.8 439.0h8.8v2.2h-8.8zM573.4 439.0h15.2v2.2h-15.2zM844.0 439.0h8.8v2.2h-8.8zM863.2 439.0h4.5v2.2h-4.5zM899.4 439.0h2.4v2.2h-2.4zM918.6 439.0h4.5v2.2h-4.5zM557.8 440.9h2.4v2.2h-2.4zM562.1 440.9h10.9v2.2h-10.9zM574.8 440.9h4.5v2.2h-4.5zM581.2 440.9h2.4v2.2h-2.4zM848.9 440.9h4.5v2.2h-4.5zM893.5 440.9h2.4v2.2h-2.4zM897.7 440.9h2.4v2.2h-2.4zM916.9 440.9h4.5v2.2h-4.5zM923.2 440.9h2.4v2.2h-2.4zM550.7 442.8h4.5v2.2h-4.5zM557.1 442.8h2.4v2.2h-2.4zM561.3 442.8h10.8v2.2h-10.8zM574.0 442.8h6.6v2.2h-6.6zM582.5 442.8h2.4v2.2h-2.4zM764.7 442.8h2.4v2.2h-2.4zM896.1 442.8h4.5v2.2h-4.5zM910.9 442.8h21.4v2.2h-21.4zM552.2 444.7h6.6v2.2h-6.6zM560.6 444.7h2.4v2.2h-2.4zM567.0 444.7h19.3v2.2h-19.3zM769.8 444.7h2.4v2.2h-2.4zM867.0 444.7h2.4v2.2h-2.4zM871.2 444.7h4.5v2.2h-4.5zM911.4 444.7h2.4v2.2h-2.4zM915.6 444.7h2.4v2.2h-2.4zM924.1 444.7h2.4v2.2h-2.4zM928.3 444.7h2.4v2.2h-2.4zM549.4 446.6h2.4v2.2h-2.4zM555.7 446.6h6.6v2.2h-6.6zM568.3 446.6h21.3v2.2h-21.3zM722.2 446.6h2.4v2.2h-2.4zM869.7 446.6h2.4v2.2h-2.4zM873.9 446.6h2.4v2.2h-2.4zM884.4 446.6h2.4v2.2h-2.4zM548.7 448.5h17.1v2.2h-17.1zM567.6 448.5h23.4v2.2h-23.4zM592.8 448.5h2.4v2.2h-2.4zM840.8 448.5h6.6v2.2h-6.6zM866.0 448.5h4.5v2.2h-4.5zM882.9 448.5h2.4v2.2h-2.4zM548.0 450.4h4.4v2.2h-4.4zM556.4 450.4h10.7v2.2h-10.7zM569.0 450.4h10.7v2.2h-10.7zM581.6 450.4h2.3v2.2h-2.3zM592.0 450.4h2.3v2.2h-2.3zM841.5 450.4h6.5v2.2h-6.5zM868.7 450.4h2.3v2.2h-2.3zM549.4 452.3h6.5v2.2h-6.5zM559.9 452.3h17.0v2.2h-17.0zM591.2 452.3h4.4v2.2h-4.4zM825.4 452.3h2.3v2.2h-2.3zM837.9 452.3h2.3v2.2h-2.3zM846.3 452.3h2.3v2.2h-2.3zM877.6 452.3h2.3v2.2h-2.3zM911.1 452.3h2.3v2.2h-2.3zM921.5 452.3h2.3v2.2h-2.3zM548.8 454.1h6.5v2.2h-6.5zM561.3 454.1h14.8v2.2h-14.8zM590.5 454.1h4.4v2.2h-4.4zM838.6 454.1h4.4v2.2h-4.4zM913.6 454.1h2.3v2.2h-2.3zM921.9 454.1h4.4v2.2h-4.4zM548.1 456.0h6.5v2.2h-6.5zM560.6 456.0h16.9v2.2h-16.9zM591.8 456.0h4.4v2.2h-4.4zM731.1 456.0h2.3v2.2h-2.3zM764.3 456.0h2.3v2.2h-2.3zM912.0 456.0h2.3v2.2h-2.3zM922.4 456.0h4.4v2.2h-4.4zM551.6 457.9h6.5v2.2h-6.5zM559.9 457.9h21.0v2.2h-21.0zM582.7 457.9h12.7v2.2h-12.7zM806.7 457.9h2.3v2.2h-2.3zM837.8 457.9h2.3v2.2h-2.3zM841.9 457.9h2.3v2.2h-2.3zM846.1 457.9h2.3v2.2h-2.3zM914.5 457.9h2.3v2.2h-2.3zM926.9 457.9h2.3v2.2h-2.3zM548.9 459.7h29.2v2.2h-29.2zM584.0 459.7h8.5v2.2h-8.5zM732.9 459.7h2.3v2.2h-2.3zM805.3 459.7h2.3v2.2h-2.3zM834.3 459.7h12.7v2.2h-12.7zM925.3 459.7h2.3v2.2h-2.3zM550.3 461.6h10.6v2.1h-10.6zM564.7 461.6h2.3v2.1h-2.3zM573.0 461.6h8.5v2.1h-8.5zM589.5 461.6h2.3v2.1h-2.3zM754.5 461.6h2.3v2.1h-2.3zM787.5 461.6h2.3v2.1h-2.3zM808.1 461.6h2.3v2.1h-2.3zM834.9 461.6h4.4v2.1h-4.4zM843.2 461.6h2.3v2.1h-2.3zM882.4 461.6h2.3v2.1h-2.3zM549.6 463.4h12.6v2.1h-12.6zM564.0 463.4h2.3v2.1h-2.3zM728.6 463.4h2.3v2.1h-2.3zM825.3 463.4h2.3v2.1h-2.3zM833.5 463.4h4.4v2.1h-4.4zM839.7 463.4h2.3v2.1h-2.3zM847.9 463.4h2.3v2.1h-2.3zM895.3 463.4h2.3v2.1h-2.3zM917.9 463.4h2.3v2.1h-2.3zM549.0 465.3h2.3v2.1h-2.3zM553.1 465.3h4.4v2.1h-4.4zM559.2 465.3h2.3v2.1h-2.3zM571.5 465.3h2.3v2.1h-2.3zM754.2 465.3h2.3v2.1h-2.3zM823.9 465.3h2.3v2.1h-2.3zM834.2 465.3h4.4v2.1h-4.4zM840.4 465.3h8.5v2.1h-8.5zM916.3 465.3h4.4v2.1h-4.4zM546.3 467.1h2.3v2.1h-2.3zM556.5 467.1h2.3v2.1h-2.3zM564.7 467.1h2.3v2.1h-2.3zM785.7 467.1h2.3v2.1h-2.3zM832.8 467.1h2.3v2.1h-2.3zM843.0 467.1h2.3v2.1h-2.3zM847.1 467.1h2.3v2.1h-2.3zM896.3 467.1h2.3v2.1h-2.3zM551.7 468.9h8.4v2.1h-8.4zM562.0 468.9h4.3v2.1h-4.3zM829.4 468.9h4.3v2.1h-4.3zM872.3 468.9h2.3v2.1h-2.3zM553.1 470.8h2.3v2.1h-2.3zM563.3 470.8h6.4v2.1h-6.4zM746.6 470.8h2.3v2.1h-2.3zM870.8 470.8h2.3v2.1h-2.3zM874.9 470.8h2.3v2.1h-2.3zM883.0 470.8h2.3v2.1h-2.3zM554.5 472.6h6.3v2.1h-6.3zM564.7 472.6h2.3v2.1h-2.3zM568.7 472.6h2.3v2.1h-2.3zM747.5 472.6h2.3v2.1h-2.3zM869.3 472.6h4.3v2.1h-4.3zM881.5 472.6h2.3v2.1h-2.3zM916.0 472.6h2.3v2.1h-2.3zM555.9 474.4h2.3v2.1h-2.3zM566.0 474.4h2.3v2.1h-2.3zM728.1 474.4h2.3v2.1h-2.3zM799.0 474.4h2.3v2.1h-2.3zM861.8 474.4h2.3v2.1h-2.3zM873.9 474.4h2.3v2.1h-2.3zM882.0 474.4h2.3v2.1h-2.3zM822.0 476.2h2.3v2.1h-2.3zM876.5 476.2h4.3v2.1h-4.3zM900.8 476.2h2.3v2.1h-2.3zM725.9 478.0h2.3v2.1h-2.3zM808.5 478.0h2.3v2.1h-2.3zM820.6 478.0h2.3v2.1h-2.3zM869.0 478.0h2.3v2.1h-2.3zM873.0 478.0h2.3v2.1h-2.3zM881.1 478.0h4.3v2.1h-4.3zM899.2 478.0h4.3v2.1h-4.3zM909.3 478.0h2.3v2.1h-2.3zM807.3 479.9h2.3v2.1h-2.3zM883.7 479.9h2.3v2.1h-2.3zM901.8 479.9h4.3v2.1h-4.3zM907.8 479.9h2.3v2.1h-2.3zM911.8 479.9h2.3v2.1h-2.3zM747.8 481.7h2.3v2.1h-2.3zM824.0 481.7h4.3v2.1h-4.3zM850.1 481.7h2.3v2.1h-2.3zM854.1 481.7h2.3v2.1h-2.3zM862.1 481.7h2.3v2.1h-2.3zM870.2 481.7h14.3v2.1h-14.3zM888.2 481.7h2.3v2.1h-2.3zM806.7 483.5h2.3v2.1h-2.3zM848.7 483.5h2.3v2.1h-2.3zM852.7 483.5h2.3v2.1h-2.3zM872.7 483.5h4.3v2.1h-4.3zM880.7 483.5h4.3v2.1h-4.3zM825.4 485.2h2.2v2.1h-2.2zM853.3 485.2h2.2v2.1h-2.2zM871.3 485.2h2.2v2.1h-2.2zM875.3 485.2h2.2v2.1h-2.2zM879.3 485.2h4.2v2.1h-4.2zM905.2 485.2h2.2v2.1h-2.2zM927.2 485.2h2.2v2.1h-2.2zM692.7 487.0h8.2v2.1h-8.2zM712.6 487.0h2.2v2.1h-2.2zM840.0 487.0h4.2v2.1h-4.2zM869.9 487.0h14.2v2.1h-14.2zM889.8 487.0h2.2v2.1h-2.2zM689.8 488.8h14.1v2.1h-14.1zM707.6 488.8h10.2v2.1h-10.2zM721.5 488.8h2.2v2.1h-2.2zM828.8 488.8h2.2v2.1h-2.2zM860.5 488.8h2.2v2.1h-2.2zM876.4 488.8h2.2v2.1h-2.2zM880.4 488.8h2.2v2.1h-2.2zM686.8 490.6h2.2v2.1h-2.2zM694.8 490.6h8.2v2.1h-8.2zM710.6 490.6h8.2v2.1h-8.2zM720.5 490.6h4.2v2.1h-4.2zM742.3 490.6h2.2v2.1h-2.2zM748.2 490.6h2.2v2.1h-2.2zM813.6 490.6h2.2v2.1h-2.2zM827.5 490.6h4.2v2.1h-4.2zM871.0 490.6h6.2v2.1h-6.2zM879.0 490.6h4.2v2.1h-4.2zM699.7 492.4h8.2v2.1h-8.2zM709.6 492.4h14.1v2.1h-14.1zM743.2 492.4h2.2v2.1h-2.2zM810.4 492.4h2.2v2.1h-2.2zM826.2 492.4h4.2v2.1h-4.2zM838.0 492.4h2.2v2.1h-2.2zM842.0 492.4h2.2v2.1h-2.2zM871.6 492.4h2.2v2.1h-2.2zM917.1 492.4h2.2v2.1h-2.2zM921.0 492.4h2.2v2.1h-2.2zM925.0 492.4h2.2v2.1h-2.2zM700.7 494.1h6.2v2.1h-6.2zM712.5 494.1h10.1v2.1h-10.1zM750.0 494.1h2.2v2.1h-2.2zM828.8 494.1h4.2v2.1h-4.2zM840.7 494.1h2.2v2.1h-2.2zM919.5 494.1h4.2v2.1h-4.2zM705.6 495.9h2.2v2.1h-2.2zM717.4 495.9h6.1v2.1h-6.1zM746.9 495.9h2.2v2.1h-2.2zM825.6 495.9h2.2v2.1h-2.2zM835.4 495.9h4.2v2.1h-4.2zM841.3 495.9h4.2v2.1h-4.2zM861.0 495.9h2.2v2.1h-2.2zM921.9 495.9h2.2v2.1h-2.2zM702.7 497.7h6.1v2.1h-6.1zM714.5 497.7h6.1v2.1h-6.1zM743.9 497.7h2.2v2.1h-2.2zM820.4 497.7h4.2v2.1h-4.2zM834.1 497.7h8.1v2.1h-8.1zM843.9 497.7h2.2v2.1h-2.2zM863.5 497.7h2.2v2.1h-2.2zM701.7 499.4h4.2v2.1h-4.2zM713.5 499.4h8.1v2.1h-8.1zM821.1 499.4h2.2v2.1h-2.2zM825.0 499.4h4.2v2.1h-4.2zM830.9 499.4h6.1v2.1h-6.1zM842.6 499.4h2.2v2.1h-2.2zM870.0 499.4h2.2v2.1h-2.2zM698.8 501.2h8.1v2.0h-8.1zM710.5 501.2h12.0v2.0h-12.0zM815.9 501.2h2.2v2.0h-2.2zM833.5 501.2h2.2v2.0h-2.2zM837.4 501.2h2.2v2.0h-2.2zM693.9 502.9h2.2v2.0h-2.2zM699.8 502.9h6.1v2.0h-6.1zM713.4 502.9h10.0v2.0h-10.0zM826.4 502.9h2.2v2.0h-2.2zM683.3 504.7h2.2v2.0h-2.2zM693.0 504.7h2.2v2.0h-2.2zM700.8 504.7h4.1v2.0h-4.1zM706.6 504.7h4.1v2.0h-4.1zM716.3 504.7h2.2v2.0h-2.2zM686.3 506.4h2.2v2.0h-2.2zM692.1 506.4h4.1v2.0h-4.1zM644.7 508.2h4.1v2.0h-4.1zM691.1 508.2h2.2v2.0h-2.2zM700.8 508.2h2.2v2.0h-2.2zM643.9 509.9h2.2v2.0h-2.2zM647.8 509.9h2.2v2.0h-2.2zM663.2 509.9h2.2v2.0h-2.2zM678.6 509.9h2.2v2.0h-2.2zM692.2 509.9h6.0v2.0h-6.0zM699.9 509.9h2.2v2.0h-2.2zM645.0 511.6h11.8v2.0h-11.8zM679.7 511.6h2.2v2.0h-2.2zM693.2 511.6h2.2v2.0h-2.2zM700.9 511.6h2.2v2.0h-2.2zM644.2 513.3h13.7v2.0h-13.7zM663.4 513.3h2.2v2.0h-2.2zM667.3 513.3h2.2v2.0h-2.2zM684.6 513.3h2.2v2.0h-2.2zM692.2 513.3h2.2v2.0h-2.2zM645.3 515.1h2.2v2.0h-2.2zM649.2 515.1h6.0v2.0h-6.0zM679.8 515.1h2.2v2.0h-2.2zM693.2 515.1h2.2v2.0h-2.2zM692.3 516.8h4.1v2.0h-4.1zM687.6 518.5h4.1v2.0h-4.1zM693.3 518.5h2.2v2.0h-2.2zM686.7 520.2h6.0v2.0h-6.0zM664.9 521.9h2.1v2.0h-2.1zM685.8 521.9h2.1v2.0h-2.1zM689.6 521.9h2.1v2.0h-2.1zM828.2 521.9h2.1v2.0h-2.1zM832.0 521.9h2.1v2.0h-2.1zM843.4 521.9h7.8v2.0h-7.8zM862.4 521.9h2.1v2.0h-2.1zM866.2 521.9h4.0v2.0h-4.0zM877.5 521.9h2.1v2.0h-2.1zM666.0 523.6h2.1v2.0h-2.1zM683.1 523.6h7.8v2.0h-7.8zM819.4 523.6h4.0v2.0h-4.0zM828.9 523.6h2.1v2.0h-2.1zM832.7 523.6h2.1v2.0h-2.1zM840.2 523.6h2.1v2.0h-2.1zM847.8 523.6h4.0v2.0h-4.0zM874.3 523.6h2.1v2.0h-2.1zM881.9 523.6h2.1v2.0h-2.1zM895.2 523.6h5.9v2.0h-5.9zM810.7 525.3h2.1v2.0h-2.1zM822.0 525.3h2.1v2.0h-2.1zM827.7 525.3h2.1v2.0h-2.1zM833.4 525.3h2.1v2.0h-2.1zM873.0 525.3h2.1v2.0h-2.1zM891.9 525.3h5.9v2.0h-5.9zM690.7 527.0h4.0v2.0h-4.0zM711.5 527.0h2.1v2.0h-2.1zM719.0 527.0h2.1v2.0h-2.1zM813.3 527.0h2.1v2.0h-2.1zM851.0 527.0h2.1v2.0h-2.1zM862.3 527.0h2.1v2.0h-2.1zM873.6 527.0h2.1v2.0h-2.1zM879.3 527.0h7.8v2.0h-7.8zM892.5 527.0h4.0v2.0h-4.0zM898.1 527.0h2.1v2.0h-2.1zM710.6 528.7h2.1v2.0h-2.1zM714.3 528.7h7.8v2.0h-7.8zM812.1 528.7h4.0v2.0h-4.0zM829.1 528.7h2.1v2.0h-2.1zM859.2 528.7h2.1v2.0h-2.1zM864.8 528.7h2.1v2.0h-2.1zM887.4 528.7h2.1v2.0h-2.1zM891.1 528.7h4.0v2.0h-4.0zM898.7 528.7h2.1v2.0h-2.1zM690.9 530.4h4.0v2.0h-4.0zM715.3 530.4h5.9v2.0h-5.9zM814.7 530.4h2.1v2.0h-2.1zM827.9 530.4h2.1v2.0h-2.1zM859.8 530.4h4.0v2.0h-4.0zM886.1 530.4h13.4v2.0h-13.4zM691.9 532.0h2.1v2.0h-2.1zM712.5 532.0h2.1v2.0h-2.1zM716.2 532.0h5.9v2.0h-5.9zM811.7 532.0h5.9v2.0h-5.9zM858.5 532.0h4.0v2.0h-4.0zM886.6 532.0h5.9v2.0h-5.9zM894.1 532.0h4.0v2.0h-4.0zM642.4 533.7h2.1v2.0h-2.1zM717.2 533.7h4.0v2.0h-4.0zM810.6 533.7h9.6v2.0h-9.6zM855.4 533.7h2.1v2.0h-2.1zM887.2 533.7h2.1v2.0h-2.1zM716.2 535.4h5.8v2.0h-5.8zM816.9 535.4h4.0v2.0h-4.0zM854.2 535.4h2.1v2.0h-2.1zM857.9 535.4h4.0v2.0h-4.0zM884.0 535.4h2.1v2.0h-2.1zM889.6 535.4h2.1v2.0h-2.1zM893.3 535.4h4.0v2.0h-4.0zM674.4 537.1h2.1v2.0h-2.1zM715.3 537.1h5.8v2.0h-5.8zM815.8 537.1h7.7v2.0h-7.7zM856.7 537.1h4.0v2.0h-4.0zM882.7 537.1h2.1v2.0h-2.1zM886.5 537.1h2.1v2.0h-2.1zM892.0 537.1h2.1v2.0h-2.1zM643.9 538.7h4.0v2.0h-4.0zM710.7 538.7h4.0v2.0h-4.0zM716.3 538.7h5.8v2.0h-5.8zM764.5 538.7h5.8v2.0h-5.8zM814.6 538.7h2.1v2.0h-2.1zM818.3 538.7h5.8v2.0h-5.8zM833.2 538.7h5.8v2.0h-5.8zM857.3 538.7h4.0v2.0h-4.0zM862.9 538.7h2.1v2.0h-2.1zM879.6 538.7h4.0v2.0h-4.0zM885.2 538.7h7.7v2.0h-7.7zM648.7 540.4h2.1v2.0h-2.1zM674.6 540.4h4.0v2.0h-4.0zM704.2 540.4h2.1v2.0h-2.1zM709.8 540.4h5.8v2.0h-5.8zM717.2 540.4h2.1v2.0h-2.1zM720.9 540.4h4.0v2.0h-4.0zM726.5 540.4h4.0v2.0h-4.0zM732.0 540.4h5.8v2.0h-5.8zM765.3 540.4h11.4v2.0h-11.4zM800.5 540.4h5.8v2.0h-5.8zM808.0 540.4h11.4v2.0h-11.4zM833.9 540.4h2.1v2.0h-2.1zM839.4 540.4h4.0v2.0h-4.0zM856.1 540.4h7.7v2.0h-7.7zM867.2 540.4h26.2v2.0h-26.2zM644.2 542.1h3.9v2.0h-3.9zM651.6 542.1h2.1v2.0h-2.1zM699.6 542.1h3.9v2.0h-3.9zM718.1 542.1h5.8v2.0h-5.8zM725.5 542.1h3.9v2.0h-3.9zM734.8 542.1h2.1v2.0h-2.1zM764.3 542.1h5.8v2.0h-5.8zM773.6 542.1h2.1v2.0h-2.1zM799.4 542.1h5.8v2.0h-5.8zM806.8 542.1h2.1v2.0h-2.1zM810.5 542.1h7.6v2.0h-7.6zM840.1 542.1h3.9v2.0h-3.9zM856.7 542.1h7.6v2.0h-7.6zM869.7 542.1h5.8v2.0h-5.8zM878.9 542.1h13.2v2.0h-13.2zM893.7 542.1h2.1v2.0h-2.1zM713.5 543.7h2.1v2.0h-2.1zM717.2 543.7h13.2v2.0h-13.2zM733.8 543.7h2.1v2.0h-2.1zM765.2 543.7h11.3v2.0h-11.3zM800.2 543.7h5.8v2.0h-5.8zM816.8 543.7h3.9v2.0h-3.9zM844.5 543.7h2.1v2.0h-2.1zM853.7 543.7h13.2v2.0h-13.2zM868.4 543.7h5.8v2.0h-5.8zM875.8 543.7h16.8v2.0h-16.8zM666.6 545.4h2.1v1.9h-2.1zM685.0 545.4h2.1v1.9h-2.1zM688.7 545.4h3.9v1.9h-3.9zM703.4 545.4h2.1v1.9h-2.1zM712.6 545.4h16.8v1.9h-16.8zM731.0 545.4h5.8v1.9h-5.8zM766.0 545.4h7.6v1.9h-7.6zM804.6 545.4h3.9v1.9h-3.9zM817.5 545.4h2.1v1.9h-2.1zM847.0 545.4h2.1v1.9h-2.1zM852.5 545.4h9.5v1.9h-9.5zM863.5 545.4h11.3v1.9h-11.3zM883.8 545.4h7.6v1.9h-7.6zM664.0 547.0h2.1v1.9h-2.1zM687.9 547.0h7.6v1.9h-7.6zM702.6 547.0h2.1v1.9h-2.1zM717.3 547.0h9.4v1.9h-9.4zM728.3 547.0h7.6v1.9h-7.6zM803.6 547.0h5.8v1.9h-5.8zM816.4 547.0h3.9v1.9h-3.9zM821.9 547.0h2.1v1.9h-2.1zM845.8 547.0h2.1v1.9h-2.1zM853.1 547.0h11.3v1.9h-11.3zM866.0 547.0h11.3v1.9h-11.3zM884.4 547.0h5.8v1.9h-5.8zM644.9 548.7h2.1v1.9h-2.1zM661.4 548.7h2.1v1.9h-2.1zM718.2 548.7h7.6v1.9h-7.6zM731.0 548.7h3.9v1.9h-3.9zM804.3 548.7h2.1v1.9h-2.1zM808.0 548.7h2.1v1.9h-2.1zM826.3 548.7h3.9v1.9h-3.9zM842.8 548.7h3.9v1.9h-3.9zM857.4 548.7h20.4v1.9h-20.4zM888.6 548.7h3.9v1.9h-3.9zM894.1 548.7h2.1v1.9h-2.1zM897.8 548.7h2.1v1.9h-2.1zM662.4 550.3h2.1v1.9h-2.1zM717.3 550.3h7.6v1.9h-7.6zM730.1 550.3h5.7v1.9h-5.7zM808.7 550.3h3.9v1.9h-3.9zM816.0 550.3h2.1v1.9h-2.1zM825.2 550.3h7.6v1.9h-7.6zM839.8 550.3h3.9v1.9h-3.9zM845.3 550.3h2.1v1.9h-2.1zM861.7 550.3h5.7v1.9h-5.7zM869.1 550.3h5.7v1.9h-5.7zM891.0 550.3h5.7v1.9h-5.7zM718.2 551.9h9.4v1.9h-9.4zM729.2 551.9h5.7v1.9h-5.7zM805.8 551.9h9.4v1.9h-9.4zM824.1 551.9h7.5v1.9h-7.5zM840.5 551.9h7.5v1.9h-7.5zM856.9 551.9h3.9v1.9h-3.9zM866.0 551.9h7.5v1.9h-7.5zM889.7 551.9h3.9v1.9h-3.9zM897.0 551.9h3.9v1.9h-3.9zM650.0 553.6h2.1v1.9h-2.1zM659.1 553.6h2.1v1.9h-2.1zM662.7 553.6h2.1v1.9h-2.1zM717.3 553.6h2.1v1.9h-2.1zM726.5 553.6h7.5v1.9h-7.5zM806.6 553.6h7.5v1.9h-7.5zM826.6 553.6h9.4v1.9h-9.4zM839.3 553.6h2.1v1.9h-2.1zM844.8 553.6h3.9v1.9h-3.9zM853.9 553.6h2.1v1.9h-2.1zM857.5 553.6h3.9v1.9h-3.9zM663.8 555.2h2.1v1.9h-2.1zM805.5 555.2h3.9v1.9h-3.9zM810.9 555.2h5.7v1.9h-5.7zM827.3 555.2h5.7v1.9h-5.7zM838.2 555.2h2.1v1.9h-2.1zM841.8 555.2h5.7v1.9h-5.7zM854.5 555.2h7.5v1.9h-7.5zM672.1 556.8h3.9v1.9h-3.9zM717.4 556.8h5.7v1.9h-5.7zM804.4 556.8h2.1v1.9h-2.1zM811.7 556.8h3.9v1.9h-3.9zM826.2 556.8h5.7v1.9h-5.7zM847.9 556.8h2.1v1.9h-2.1zM855.2 556.8h9.3v1.9h-9.3zM647.8 558.5h2.1v1.9h-2.1zM709.3 558.5h2.1v1.9h-2.1zM718.3 558.5h2.1v1.9h-2.1zM807.0 558.5h2.1v1.9h-2.1zM828.7 558.5h3.9v1.9h-3.9zM841.4 558.5h5.7v1.9h-5.7zM852.2 558.5h3.9v1.9h-3.9zM857.6 558.5h5.7v1.9h-5.7zM881.2 558.5h2.1v1.9h-2.1zM648.9 560.1h2.1v1.9h-2.1zM674.1 560.1h2.1v1.9h-2.1zM713.9 560.1h2.1v1.9h-2.1zM717.5 560.1h3.9v1.9h-3.9zM829.4 560.1h18.3v1.9h-18.3zM856.5 560.1h7.5v1.9h-7.5zM881.8 560.1h2.1v1.9h-2.1zM887.2 560.1h2.1v1.9h-2.1zM648.1 561.7h5.7v1.9h-5.7zM664.3 561.7h2.1v1.9h-2.1zM713.0 561.7h2.1v1.9h-2.1zM718.4 561.7h3.9v1.9h-3.9zM828.3 561.7h11.1v1.9h-11.1zM649.2 563.3h5.6v1.9h-5.6zM690.6 563.3h2.0v1.9h-2.0zM706.7 563.3h2.0v1.9h-2.0zM710.3 563.3h2.0v1.9h-2.0zM717.5 563.3h3.8v1.9h-3.8zM798.4 563.3h9.2v1.9h-9.2zM821.8 563.3h2.0v1.9h-2.0zM830.8 563.3h9.2v1.9h-9.2zM655.7 564.9h2.0v1.9h-2.0zM659.3 564.9h2.0v1.9h-2.0zM662.8 564.9h5.6v1.9h-5.6zM707.7 564.9h3.8v1.9h-3.8zM718.5 564.9h2.0v1.9h-2.0zM651.4 566.5h2.0v1.9h-2.0zM654.9 566.5h2.0v1.9h-2.0zM662.1 566.5h2.0v1.9h-2.0zM708.7 566.5h2.0v1.9h-2.0zM650.6 568.1h7.4v1.9h-7.4zM709.6 568.1h2.0v1.9h-2.0zM649.9 569.7h3.8v1.9h-3.8zM701.6 569.7h3.8v1.9h-3.8zM651.0 571.3h2.0v1.9h-2.0zM681.2 571.3h2.0v1.9h-2.0zM702.6 571.3h2.0v1.9h-2.0zM713.3 571.3h2.0v1.9h-2.0zM650.3 572.9h2.0v1.9h-2.0zM682.3 572.9h2.0v1.9h-2.0zM701.8 572.9h3.8v1.9h-3.8zM712.4 572.9h2.0v1.9h-2.0zM677.9 574.5h2.0v1.9h-2.0zM716.9 574.5h2.0v1.9h-2.0zM689.6 576.1h2.0v1.9h-2.0zM700.2 576.1h3.8v1.9h-3.8zM717.9 576.1h2.0v1.9h-2.0zM767.4 576.1h9.1v1.9h-9.1zM781.6 576.1h2.0v1.9h-2.0zM688.8 577.7h3.8v1.9h-3.8zM699.4 577.7h2.0v1.9h-2.0zM717.0 577.7h2.0v1.9h-2.0zM766.5 577.7h2.0v1.9h-2.0zM770.0 577.7h14.4v1.9h-14.4zM689.8 579.3h2.0v1.9h-2.0zM718.0 579.3h2.0v1.9h-2.0zM767.3 579.3h5.5v1.9h-5.5zM774.4 579.3h2.0v1.9h-2.0zM779.6 579.3h2.0v1.9h-2.0zM676.7 580.9h2.0v1.9h-2.0zM680.2 580.9h3.8v1.9h-3.8zM685.5 580.9h2.0v1.9h-2.0zM689.0 580.9h2.0v1.9h-2.0zM717.1 580.9h2.0v1.9h-2.0zM768.1 580.9h2.0v1.9h-2.0zM773.4 580.9h2.0v1.9h-2.0zM647.9 582.4h2.0v1.9h-2.0zM681.2 582.4h2.0v1.9h-2.0zM688.2 582.4h2.0v1.9h-2.0zM718.1 582.4h3.8v1.9h-3.8zM742.6 582.4h2.0v1.9h-2.0zM770.7 582.4h2.0v1.9h-2.0zM647.2 584.0h2.0v1.9h-2.0zM661.2 584.0h2.0v1.9h-2.0zM680.5 584.0h2.0v1.9h-2.0zM684.0 584.0h5.5v1.9h-5.5zM743.5 584.0h2.0v1.9h-2.0zM646.5 585.6h3.7v1.9h-3.7zM688.5 585.6h2.0v1.9h-2.0zM742.7 585.6h3.7v1.9h-3.7zM647.6 587.1h3.7v1.9h-3.7zM659.8 587.1h2.0v1.9h-2.0zM689.4 587.1h2.0v1.9h-2.0zM717.4 587.1h2.0v1.9h-2.0zM743.5 587.1h2.0v1.9h-2.0zM648.6 588.7h2.0v1.9h-2.0zM718.3 588.7h2.0v1.9h-2.0zM721.8 588.7h2.0v1.9h-2.0zM730.5 588.7h5.5v1.9h-5.5zM744.4 588.7h2.0v1.9h-2.0zM717.5 590.3h2.0v1.9h-2.0zM721.0 590.3h2.0v1.9h-2.0zM729.7 590.3h2.0v1.9h-2.0zM716.7 591.8h3.7v1.9h-3.7zM721.9 591.8h2.0v1.9h-2.0zM730.6 591.8h2.0v1.9h-2.0zM734.0 591.8h2.0v1.9h-2.0zM726.3 593.4h3.7v1.9h-3.7zM743.6 593.4h2.0v1.9h-2.0zM716.8 594.9h2.0v1.8h-2.0zM723.7 594.9h2.0v1.8h-2.0zM727.2 594.9h2.0v1.8h-2.0zM730.6 594.9h2.0v1.8h-2.0zM726.4 596.5h3.7v1.8h-3.7zM764.3 599.6h3.7v1.8h-3.7zM763.4 601.1h5.4v1.8h-5.4zM762.5 602.6h5.4v1.8h-5.4zM757.4 605.7h2.0v1.8h-2.0zM760.8 605.7h2.0v1.8h-2.0zM765.9 605.7h3.7v1.8h-3.7zM754.9 607.2h2.0v1.8h-2.0zM758.3 607.2h2.0v1.8h-2.0zM766.8 607.2h2.0v1.8h-2.0zM765.9 608.8h3.6v1.8h-3.6zM756.6 610.3h3.6v1.8h-3.6zM766.8 610.3h1.9v1.8h-1.9zM764.2 611.8h3.6v1.8h-3.6zM756.6 613.3h3.6v1.8h-3.6zM766.8 613.3h1.9v1.8h-1.9zM755.8 614.8h5.3v1.8h-5.3zM765.9 614.8h1.9v1.8h-1.9zM756.7 616.3h5.3v1.8h-5.3zM757.5 617.9h5.3v1.8h-5.3zM760.0 619.4h7.0v1.8h-7.0zM760.9 620.9h3.6v1.8h-3.6zM761.8 622.4h1.9v1.8h-1.9zM820.3 688.8h1.8v1.7h-1.8zM821.1 690.2h3.4v1.7h-3.4zM821.8 691.6h3.3v1.7h-3.3z"/><text x="449.3" y="224.9" font-size="6.2" letter-spacing="0.5" fill="#98a0a8" stroke="#f4f4f2" stroke-width="1.2" paint-order="stroke" transform="translate(0 24.74) scale(1 0.89)" font-family="Liberation Sans">Iceland</text><text x="405.9" y="241.8" font-size="5.6" fill="#5f656b" stroke="#f4f4f2" stroke-width="1.1" paint-order="stroke" transform="translate(0 26.60) scale(1 0.89)" font-family="Liberation Sans">Reykjavík</text><text x="743.5" y="306.0" font-size="6.4" letter-spacing="0.5" fill="#98a0a8" stroke="#f4f4f2" stroke-width="1.2" paint-order="stroke" transform="translate(0 33.66) scale(1 0.89)" font-family="Liberation Sans">Norway</text><text x="776.0" y="330.0" font-size="5.6" fill="#5f656b" stroke="#f4f4f2" stroke-width="1.1" paint-order="stroke" transform="translate(0 36.30) scale(1 0.89)" font-family="Liberation Sans">Oslo</text><text x="821.7" y="334.3" font-size="6.4" letter-spacing="0.5" fill="#98a0a8" stroke="#f4f4f2" stroke-width="1.2" paint-order="stroke" transform="translate(0 36.77) scale(1 0.89)" font-family="Liberation Sans">Sweden</text><text x="849.6" y="347.8" font-size="5.6" fill="#5f656b" stroke="#f4f4f2" stroke-width="1.1" paint-order="stroke" transform="translate(0 38.26) scale(1 0.89)" font-family="Liberation Sans">Stockholm</text><text x="946.9" y="261.7" font-size="6.4" letter-spacing="0.5" fill="#98a0a8" stroke="#f4f4f2" stroke-width="1.2" paint-order="stroke" transform="translate(0 28.79) scale(1 0.89)" font-family="Liberation Sans">Finland</text><text x="930.0" y="325.4" font-size="5.6" fill="#5f656b" stroke="#f4f4f2" stroke-width="1.1" paint-order="stroke" transform="translate(0 35.79) scale(1 0.89)" font-family="Liberation Sans">Helsinki</text><text x="919.0" y="342.2" font-size="5.6" fill="#5f656b" stroke="#f4f4f2" stroke-width="1.1" paint-order="stroke" transform="translate(0 37.64) scale(1 0.89)" font-family="Liberation Sans">Tallinn</text><text x="939.0" y="360.0" font-size="6.2" letter-spacing="0.5" fill="#98a0a8" stroke="#f4f4f2" stroke-width="1.2" paint-order="stroke" transform="translate(0 39.60) scale(1 0.89)" font-family="Liberation Sans">Estonia</text><text x="916.7" y="388.6" font-size="5.6" fill="#5f656b" stroke="#f4f4f2" stroke-width="1.1" paint-order="stroke" transform="translate(0 42.75) scale(1 0.89)" font-family="Liberation Sans">Riga</text><text x="943.3" y="392.8" font-size="6.2" letter-spacing="0.5" fill="#98a0a8" stroke="#f4f4f2" stroke-width="1.2" paint-order="stroke" transform="translate(0 43.21) scale(1 0.89)" font-family="Liberation Sans">Latvia</text><text x="915.7" y="414.9" font-size="6.2" letter-spacing="0.5" fill="#98a0a8" stroke="#f4f4f2" stroke-width="1.2" paint-order="stroke" transform="translate(0 45.64) scale(1 0.89)" font-family="Liberation Sans">Lithuania</text><text x="927.0" y="427.2" font-size="5.4" fill="#5f656b" stroke="#f4f4f2" stroke-width="1.1" paint-order="stroke" transform="translate(0 46.99) scale(1 0.89)" font-family="Liberation Sans">Vilnius</text><text x="1178.0" y="343.0" font-size="6.4" letter-spacing="0.5" fill="#98a0a8" stroke="#f4f4f2" stroke-width="1.2" paint-order="stroke" transform="translate(0 37.73) scale(1 0.89)" font-family="Liberation Sans">Russia</text><text x="1070.5" y="413.7" font-size="5.6" fill="#5f656b" stroke="#f4f4f2" stroke-width="1.1" paint-order="stroke" transform="translate(0 45.51) scale(1 0.89)" font-family="Liberation Sans">Moskva</text><text x="967.0" y="441.6" font-size="5.6" fill="#5f656b" stroke="#f4f4f2" stroke-width="1.1" paint-order="stroke" transform="translate(0 48.58) scale(1 0.89)" font-family="Liberation Sans">Minsk</text><text x="958.0" y="452.8" font-size="6.4" letter-spacing="0.5" fill="#98a0a8" stroke="#f4f4f2" stroke-width="1.2" paint-order="stroke" transform="translate(0 49.81) scale(1 0.89)" font-family="Liberation Sans">Belarus</text><text x="996.0" y="500.0" font-size="5.6" fill="#5f656b" stroke="#f4f4f2" stroke-width="1.1" paint-order="stroke" transform="translate(0 55.00) scale(1 0.89)" font-family="Liberation Sans">Kyiv</text><text x="991.8" y="515.0" font-size="6.4" letter-spacing="0.5" fill="#98a0a8" stroke="#f4f4f2" stroke-width="1.2" paint-order="stroke" transform="translate(0 56.65) scale(1 0.89)" font-family="Liberation Sans">Ukraine</text><text x="866.0" y="461.0" font-size="6.4" letter-spacing="0.5" fill="#98a0a8" stroke="#f4f4f2" stroke-width="1.2" paint-order="stroke" transform="translate(0 50.71) scale(1 0.89)" font-family="Liberation Sans">Poland</text><text x="881.6" y="472.2" font-size="5.4" fill="#5f656b" stroke="#f4f4f2" stroke-width="1.1" paint-order="stroke" transform="translate(0 51.94) scale(1 0.89)" font-family="Liberation Sans">Warszawa</text><text x="803.0" y="461.8" font-size="5.4" fill="#5f656b" stroke="#f4f4f2" stroke-width="1.1" paint-order="stroke" transform="translate(0 50.80) scale(1 0.89)" font-family="Liberation Sans">Berlin</text><text x="767.0" y="475.8" font-size="6.4" letter-spacing="0.5" fill="#98a0a8" stroke="#f4f4f2" stroke-width="1.2" paint-order="stroke" transform="translate(0 52.34) scale(1 0.89)" font-family="Liberation Sans">Germany</text><text x="818.0" y="495.5" font-size="5.4" fill="#5f656b" stroke="#f4f4f2" stroke-width="1.1" paint-order="stroke" transform="translate(0 54.50) scale(1 0.89)" font-family="Liberation Sans">Praha</text><text x="816.5" y="511.3" font-size="6.4" letter-spacing="0.5" fill="#98a0a8" stroke="#f4f4f2" stroke-width="1.2" paint-order="stroke" transform="translate(0 56.24) scale(1 0.89)" font-family="Liberation Sans">Czechia</text><text x="868.0" y="524.8" font-size="6.2" letter-spacing="0.5" fill="#98a0a8" stroke="#f4f4f2" stroke-width="1.2" paint-order="stroke" transform="translate(0 57.73) scale(1 0.89)" font-family="Liberation Sans">Slovakia</text><text x="830.0" y="529.0" font-size="5.4" fill="#5f656b" stroke="#f4f4f2" stroke-width="1.1" paint-order="stroke" transform="translate(0 58.19) scale(1 0.89)" font-family="Liberation Sans">Wien</text><text x="847.0" y="529.0" font-size="5.4" fill="#5f656b" stroke="#f4f4f2" stroke-width="1.1" paint-order="stroke" transform="translate(0 58.19) scale(1 0.89)" font-family="Liberation Sans">Bratislava</text><text x="866.0" y="539.0" font-size="5.4" fill="#5f656b" stroke="#f4f4f2" stroke-width="1.1" paint-order="stroke" transform="translate(0 59.29) scale(1 0.89)" font-family="Liberation Sans">Budapest</text><text x="863.7" y="550.0" font-size="6.4" letter-spacing="0.5" fill="#98a0a8" stroke="#f4f4f2" stroke-width="1.2" paint-order="stroke" transform="translate(0 60.50) scale(1 0.89)" font-family="Liberation Sans">Hungary</text><text x="823.0" y="556.3" font-size="6.4" letter-spacing="0.5" fill="#98a0a8" stroke="#f4f4f2" stroke-width="1.2" paint-order="stroke" transform="translate(0 61.19) scale(1 0.89)" font-family="Liberation Sans">Austria</text><text x="967.0" y="542.8" font-size="6.2" letter-spacing="0.5" fill="#98a0a8" stroke="#f4f4f2" stroke-width="1.2" paint-order="stroke" transform="translate(0 59.71) scale(1 0.89)" font-family="Liberation Sans">Moldova</text><text x="970.0" y="549.5" font-size="5.4" fill="#5f656b" stroke="#f4f4f2" stroke-width="1.1" paint-order="stroke" transform="translate(0 60.44) scale(1 0.89)" font-family="Liberation Sans">Chișinău</text><text x="926.6" y="568.0" font-size="6.4" letter-spacing="0.5" fill="#98a0a8" stroke="#f4f4f2" stroke-width="1.2" paint-order="stroke" transform="translate(0 62.48) scale(1 0.89)" font-family="Liberation Sans">Romania</text><text x="938.0" y="580.5" font-size="5.4" fill="#5f656b" stroke="#f4f4f2" stroke-width="1.1" paint-order="stroke" transform="translate(0 63.85) scale(1 0.89)" font-family="Liberation Sans">Bucuresti</text><text x="890.6" y="590.0" font-size="6.2" letter-spacing="0.5" fill="#98a0a8" stroke="#f4f4f2" stroke-width="1.2" paint-order="stroke" transform="translate(0 64.90) scale(1 0.89)" font-family="Liberation Sans">Serbia</text><text x="856.0" y="575.5" font-size="6.2" letter-spacing="0.5" fill="#98a0a8" stroke="#f4f4f2" stroke-width="1.2" paint-order="stroke" transform="translate(0 63.30) scale(1 0.89)" font-family="Liberation Sans">Bosnia and</text><text x="855.0" y="583.0" font-size="6.2" letter-spacing="0.5" fill="#98a0a8" stroke="#f4f4f2" stroke-width="1.2" paint-order="stroke" transform="translate(0 64.13) scale(1 0.89)" font-family="Liberation Sans">Herzegovina</text><text x="863.0" y="590.5" font-size="5.4" fill="#5f656b" stroke="#f4f4f2" stroke-width="1.1" paint-order="stroke" transform="translate(0 64.95) scale(1 0.89)" font-family="Liberation Sans">Sarajevo</text><text x="845.0" y="564.0" font-size="5.4" fill="#5f656b" stroke="#f4f4f2" stroke-width="1.1" paint-order="stroke" transform="translate(0 62.04) scale(1 0.89)" font-family="Liberation Sans">Zagreb</text><text x="828.0" y="556.0" font-size="6.2" letter-spacing="0.5" fill="#98a0a8" stroke="#f4f4f2" stroke-width="1.2" paint-order="stroke" transform="translate(0 61.16) scale(1 0.89)" font-family="Liberation Sans">Slovenia</text><text x="810.0" y="561.0" font-size="5.4" fill="#5f656b" stroke="#f4f4f2" stroke-width="1.1" paint-order="stroke" transform="translate(0 61.71) scale(1 0.89)" font-family="Liberation Sans">Ljubljana</text><text x="933.4" y="602.6" font-size="6.4" letter-spacing="0.5" fill="#98a0a8" stroke="#f4f4f2" stroke-width="1.2" paint-order="stroke" transform="translate(0 66.29) scale(1 0.89)" font-family="Liberation Sans">Bulgaria</text><text x="930.0" y="606.0" font-size="5.4" fill="#5f656b" stroke="#f4f4f2" stroke-width="1.1" paint-order="stroke" transform="translate(0 66.66) scale(1 0.89)" font-family="Liberation Sans">София</text><text x="880.0" y="603.0" font-size="6.0" letter-spacing="0.5" fill="#98a0a8" stroke="#f4f4f2" stroke-width="1.2" paint-order="stroke" transform="translate(0 66.33) scale(1 0.89)" font-family="Liberation Sans">Kosovo</text><text x="868.0" y="611.5" font-size="5.4" fill="#5f656b" stroke="#f4f4f2" stroke-width="1.1" paint-order="stroke" transform="translate(0 67.26) scale(1 0.89)" font-family="Liberation Sans">Podgorica</text><text x="880.0" y="620.0" font-size="5.4" fill="#5f656b" stroke="#f4f4f2" stroke-width="1.1" paint-order="stroke" transform="translate(0 68.20) scale(1 0.89)" font-family="Liberation Sans">Tirana</text><text x="877.0" y="626.0" font-size="6.0" letter-spacing="0.5" fill="#98a0a8" stroke="#f4f4f2" stroke-width="1.2" paint-order="stroke" transform="translate(0 68.86) scale(1 0.89)" font-family="Liberation Sans">Albania</text><text x="893.0" y="629.0" font-size="6.0" letter-spacing="0.5" fill="#98a0a8" stroke="#f4f4f2" stroke-width="1.2" paint-order="stroke" transform="translate(0 69.19) scale(1 0.89)" font-family="Liberation Sans">North Macedonia</text><text x="890.6" y="648.4" font-size="6.4" letter-spacing="0.5" fill="#98a0a8" stroke="#f4f4f2" stroke-width="1.2" paint-order="stroke" transform="translate(0 71.32) scale(1 0.89)" font-family="Liberation Sans">Greece</text><text x="1045.8" y="653.0" font-size="6.4" letter-spacing="0.5" fill="#98a0a8" stroke="#f4f4f2" stroke-width="1.2" paint-order="stroke" transform="translate(0 71.83) scale(1 0.89)" font-family="Liberation Sans">Türkiye</text><text x="1035.0" y="641.0" font-size="5.6" fill="#5f656b" stroke="#f4f4f2" stroke-width="1.1" paint-order="stroke" transform="translate(0 70.51) scale(1 0.89)" font-family="Liberation Sans">Ankara</text><text x="1131.0" y="614.7" font-size="6.2" letter-spacing="0.5" fill="#98a0a8" stroke="#f4f4f2" stroke-width="1.2" paint-order="stroke" transform="translate(0 67.62) scale(1 0.89)" font-family="Liberation Sans">Georgia</text><text x="1150.0" y="628.5" font-size="5.4" fill="#5f656b" stroke="#f4f4f2" stroke-width="1.1" paint-order="stroke" transform="translate(0 69.13) scale(1 0.89)" font-family="Liberation Sans">Tbilisi</text><text x="1148.0" y="634.0" font-size="6.2" letter-spacing="0.5" fill="#98a0a8" stroke="#f4f4f2" stroke-width="1.2" paint-order="stroke" transform="translate(0 69.74) scale(1 0.89)" font-family="Liberation Sans">Armenia</text><text x="1178.0" y="634.0" font-size="6.2" letter-spacing="0.5" fill="#98a0a8" stroke="#f4f4f2" stroke-width="1.2" paint-order="stroke" transform="translate(0 69.74) scale(1 0.89)" font-family="Liberation Sans">Azerbaijan</text><text x="1086.0" y="700.0" font-size="6.2" letter-spacing="0.5" fill="#98a0a8" stroke="#f4f4f2" stroke-width="1.2" paint-order="stroke" transform="translate(0 77.00) scale(1 0.89)" font-family="Liberation Sans">Syria</text><text x="1066.0" y="709.5" font-size="6.2" letter-spacing="0.5" fill="#98a0a8" stroke="#f4f4f2" stroke-width="1.2" paint-order="stroke" transform="translate(0 78.04) scale(1 0.89)" font-family="Liberation Sans">Lebanon</text><text x="794.0" y="609.3" font-size="6.4" letter-spacing="0.5" fill="#98a0a8" stroke="#f4f4f2" stroke-width="1.2" paint-order="stroke" transform="translate(0 67.02) scale(1 0.89)" font-family="Liberation Sans">Italy</text><text x="799.0" y="619.0" font-size="5.4" fill="#5f656b" stroke="#f4f4f2" stroke-width="1.1" paint-order="stroke" transform="translate(0 68.09) scale(1 0.89)" font-family="Liberation Sans">Roma</text><text x="784.0" y="587.5" font-size="5.8" letter-spacing="0.5" fill="#98a0a8" stroke="#f4f4f2" stroke-width="1.2" paint-order="stroke" transform="translate(0 64.62) scale(1 0.89)" font-family="Liberation Sans">San Marino</text><text x="682.4" y="552.2" font-size="6.4" letter-spacing="0.5" fill="#98a0a8" stroke="#f4f4f2" stroke-width="1.2" paint-order="stroke" transform="translate(0 60.74) scale(1 0.89)" font-family="Liberation Sans">France</text><text x="684.0" y="516.0" font-size="5.4" fill="#5f656b" stroke="#f4f4f2" stroke-width="1.1" paint-order="stroke" transform="translate(0 56.76) scale(1 0.89)" font-family="Liberation Sans">Paris</text><text x="610.5" y="629.5" font-size="6.4" letter-spacing="0.5" fill="#98a0a8" stroke="#f4f4f2" stroke-width="1.2" paint-order="stroke" transform="translate(0 69.24) scale(1 0.89)" font-family="Liberation Sans">Spain</text><text x="611.0" y="638.5" font-size="5.6" fill="#5f656b" stroke="#f4f4f2" stroke-width="1.1" paint-order="stroke" transform="translate(0 70.23) scale(1 0.89)" font-family="Liberation Sans">Madrid</text><text x="552.0" y="643.0" font-size="6.2" letter-spacing="0.5" fill="#98a0a8" stroke="#f4f4f2" stroke-width="1.2" paint-order="stroke" transform="translate(0 70.73) scale(1 0.89)" font-family="Liberation Sans">Portugal</text><text x="553.0" y="652.0" font-size="5.6" fill="#5f656b" stroke="#f4f4f2" stroke-width="1.1" paint-order="stroke" transform="translate(0 71.72) scale(1 0.89)" font-family="Liberation Sans">Lisboa</text><text x="666.0" y="606.0" font-size="6.0" letter-spacing="0.5" fill="#98a0a8" stroke="#f4f4f2" stroke-width="1.2" paint-order="stroke" transform="translate(0 66.66) scale(1 0.89)" font-family="Liberation Sans">Andorra</text><text x="665.0" y="612.5" font-size="5.4" fill="#5f656b" stroke="#f4f4f2" stroke-width="1.1" paint-order="stroke" transform="translate(0 67.37) scale(1 0.89)" font-family="Liberation Sans">Andorra la</text><text x="674.0" y="620.0" font-size="5.6" fill="#5f656b" stroke="#f4f4f2" stroke-width="1.1" paint-order="stroke" transform="translate(0 68.20) scale(1 0.89)" font-family="Liberation Sans">Vella</text><text x="738.0" y="590.0" font-size="6.0" letter-spacing="0.5" fill="#98a0a8" stroke="#f4f4f2" stroke-width="1.2" paint-order="stroke" transform="translate(0 64.90) scale(1 0.89)" font-family="Liberation Sans">Monaco</text><text x="743.0" y="533.0" font-size="6.2" letter-spacing="0.5" fill="#98a0a8" stroke="#f4f4f2" stroke-width="1.2" paint-order="stroke" transform="translate(0 58.63) scale(1 0.89)" font-family="Liberation Sans">Switzerland</text><text x="742.0" y="524.0" font-size="5.4" fill="#5f656b" stroke="#f4f4f2" stroke-width="1.1" paint-order="stroke" transform="translate(0 57.64) scale(1 0.89)" font-family="Liberation Sans">Bern</text><text x="770.0" y="521.5" font-size="6.0" letter-spacing="0.5" fill="#98a0a8" stroke="#f4f4f2" stroke-width="1.2" paint-order="stroke" transform="translate(0 57.36) scale(1 0.89)" font-family="Liberation Sans">Liechtenstein</text><text x="786.0" y="528.0" font-size="5.4" fill="#5f656b" stroke="#f4f4f2" stroke-width="1.1" paint-order="stroke" transform="translate(0 58.08) scale(1 0.89)" font-family="Liberation Sans">Vaduz</text><text x="721.0" y="474.0" font-size="6.0" letter-spacing="0.5" fill="#98a0a8" stroke="#f4f4f2" stroke-width="1.2" paint-order="stroke" transform="translate(0 52.14) scale(1 0.89)" font-family="Liberation Sans">Deutsch</text><text x="711.0" y="484.0" font-size="6.0" letter-spacing="0.5" fill="#98a0a8" stroke="#f4f4f2" stroke-width="1.2" paint-order="stroke" transform="translate(0 53.24) scale(1 0.89)" font-family="Liberation Sans">Luxembourg</text><text x="714.0" y="490.5" font-size="5.4" fill="#5f656b" stroke="#f4f4f2" stroke-width="1.1" paint-order="stroke" transform="translate(0 53.95) scale(1 0.89)" font-family="Liberation Sans">Luxembourg</text><text x="619.5" y="441.6" font-size="6.2" letter-spacing="0.5" fill="#98a0a8" stroke="#f4f4f2" stroke-width="1.2" paint-order="stroke" transform="translate(0 48.58) scale(1 0.89)" font-family="Liberation Sans">United Kingdom</text><text x="642.0" y="480.3" font-size="5.6" fill="#5f656b" stroke="#f4f4f2" stroke-width="1.1" paint-order="stroke" transform="translate(0 52.83) scale(1 0.89)" font-family="Liberation Sans">London</text><text x="575.0" y="448.0" font-size="6.0" letter-spacing="0.5" fill="#98a0a8" stroke="#f4f4f2" stroke-width="1.2" paint-order="stroke" transform="translate(0 49.28) scale(1 0.89)" font-family="Liberation Sans">Ireland</text><text x="590.0" y="448.0" font-size="5.6" fill="#5f656b" stroke="#f4f4f2" stroke-width="1.1" paint-order="stroke" transform="translate(0 49.28) scale(1 0.89)" font-family="Liberation Sans">Dublin</text><text x="707.0" y="453.5" font-size="6.4" letter-spacing="0.5" fill="#98a0a8" stroke="#f4f4f2" stroke-width="1.2" paint-order="stroke" transform="translate(0 49.88) scale(1 0.89)" font-family="Liberation Sans">Netherlands</text><text x="686.0" y="465.0" font-size="5.6" fill="#5f656b" stroke="#f4f4f2" stroke-width="1.1" paint-order="stroke" transform="translate(0 51.15) scale(1 0.89)" font-family="Liberation Sans">Amsterdam</text><text x="699.0" y="476.5" font-size="5.6" fill="#5f656b" stroke="#f4f4f2" stroke-width="1.1" paint-order="stroke" transform="translate(0 52.41) scale(1 0.89)" font-family="Liberation Sans">Brussels</text><text x="705.0" y="485.0" font-size="5.6" fill="#5f656b" stroke="#f4f4f2" stroke-width="1.1" paint-order="stroke" transform="translate(0 53.35) scale(1 0.89)" font-family="Liberation Sans">Brussel</text><text x="690.0" y="685.7" font-size="5.6" fill="#5f656b" stroke="#f4f4f2" stroke-width="1.1" paint-order="stroke" transform="translate(0 75.43) scale(1 0.89)" font-family="Liberation Sans">Alger</text><text x="773.0" y="681.0" font-size="5.4" fill="#5f656b" stroke="#f4f4f2" stroke-width="1.1" paint-order="stroke" transform="translate(0 74.91) scale(1 0.89)" font-family="Liberation Sans">Tunis</text><text x="758.4" y="711.7" font-size="6.2" letter-spacing="0.5" fill="#98a0a8" stroke="#f4f4f2" stroke-width="1.2" paint-order="stroke" transform="translate(0 78.29) scale(1 0.89)" font-family="Liberation Sans">Tunisia</text><text x="802.0" y="689.0" font-size="6.0" letter-spacing="0.5" fill="#98a0a8" stroke="#f4f4f2" stroke-width="1.2" paint-order="stroke" transform="translate(0 75.79) scale(1 0.89)" font-family="Liberation Sans">Malta</text><text x="815.0" y="694.0" font-size="5.4" fill="#5f656b" stroke="#f4f4f2" stroke-width="1.1" paint-order="stroke" transform="translate(0 76.34) scale(1 0.89)" font-family="Liberation Sans">Valletta</text><text x="573.0" y="702.0" font-size="6.0" letter-spacing="0.5" fill="#98a0a8" stroke="#f4f4f2" stroke-width="1.2" paint-order="stroke" transform="translate(0 77.22) scale(1 0.89)" font-family="Liberation Sans">Gibraltar</text><text x="1004.0" y="706.0" font-size="6.0" letter-spacing="0.5" fill="#98a0a8" stroke="#f4f4f2" stroke-width="1.2" paint-order="stroke" transform="translate(0 77.66) scale(1 0.89)" font-family="Liberation Sans">Cyprus</text><text x="1022.0" y="702.0" font-size="5.4" fill="#5f656b" stroke="#f4f4f2" stroke-width="1.1" paint-order="stroke" transform="translate(0 77.22) scale(1 0.89)" font-family="Liberation Sans">Nicosia</text><text x="1015.0" y="696.5" font-size="5.4" letter-spacing="0.5" fill="#98a0a8" stroke="#f4f4f2" stroke-width="1.2" paint-order="stroke" transform="translate(0 76.61) scale(1 0.89)" font-family="Liberation Sans">Akrotiri</text><text x="1200.0" y="711.0" font-size="6.2" letter-spacing="0.5" fill="#98a0a8" stroke="#f4f4f2" stroke-width="1.2" paint-order="stroke" transform="translate(0 78.21) scale(1 0.89)" font-family="Liberation Sans">Iran</text><rect x="305.7" y="59.6" width="15.6" height="27" fill="#e6e6e4"/><rect x="305.5" y="58.8" width="15.6" height="27.2" fill="#f0f0f0"/><path d="M311.2 65.7h4M313.2 63.7v4" stroke="#3a3a3a" stroke-width="0.9"/><path d="M311 79.5h4.4" stroke="#4a4a4a" stroke-width="0.9"/><rect x="305.7" y="91.4" width="15.6" height="13.9" fill="#e6e6e4"/><rect x="305.5" y="90.6" width="15.6" height="13.9" fill="#f0f0f0"/><path d="M310.6 100.3v-3.2l2.6-2.6 2.6 2.6v3.2h-1.6v-2h-2v2z" fill="none" stroke="#3a3a3a" stroke-width="0.8" stroke-linejoin="round"/></svg>
<div class="t" style="left:69.30px;top:58.08px;font-size:7.0px;font-weight:bold;color:#1e1e1e;transform-origin:0 6.02px;transform:scaleY(0.89);">Habitat</div>
<svg class="a" style="left:283.3px;top:59.3px" width="9" height="6" viewBox="0 0 9 6"><path d="M1 5 L4.5 1.2 L8 5" fill="none" stroke="#333" stroke-width="0.9"/></svg>
<div class="a" style="left:71.1px;top:71.4px;width:216.7px;height:11.5px;border:1px solid #b9b9b9;background:#fff"></div>
<div class="t" style="left:79.50px;top:75.27px;font-size:6.9px;font-weight:normal;color:#3a3a3a;transform-origin:0 5.93px;transform:scaleY(0.89);">2 item(s) selected</div>
<svg class="a" style="left:277.3px;top:76.8px" width="4" height="3" viewBox="0 0 4 3"><path d="M0.3 0.5 L2 2.5 L3.7 0.5Z" fill="#555"/></svg>
<div class="a" style="left:71.1px;top:89px;width:56.6px;height:11.6px;border:1px solid #8e8e8e;border-radius:7px;background:#fff"></div>
<div class="t" style="left:75.80px;top:93.27px;font-size:6.2px;font-weight:normal;color:#555;transform-origin:0 5.33px;transform:scaleY(0.89);">Alkaline fens</div>
<svg class="a" style="left:117.6px;top:92.8px" width="6.4" height="6.4" viewBox="0 0 10 10"><path d="M1 1 L9 9 M9 1 L1 9" stroke="#3b8fc4" stroke-width="1.3" fill="none"/></svg>
<div class="a" style="left:71.1px;top:105.2px;width:216.7px;height:11.6px;border:1px solid #8e8e8e;border-radius:7px;background:#fff"></div>
<div class="t" style="left:75.80px;top:109.21px;font-size:6.5px;font-weight:normal;color:#444;transform-origin:0 5.59px;transform:scaleY(0.89);">Vegetated sea cliffs of the Mediterranean coasts with endemic Limor</div>
<svg class="a" style="left:277.3px;top:109.0px" width="5.8" height="5.8" viewBox="0 0 10 10"><path d="M1 1 L9 9 M9 1 L1 9" stroke="#3b8fc4" stroke-width="1.3" fill="none"/></svg>
<div class="t" style="left:69.30px;top:131.38px;font-size:7.0px;font-weight:bold;color:#1e1e1e;transform-origin:0 6.02px;transform:scaleY(0.89);">Region</div>
<svg class="a" style="left:283.3px;top:133.3px" width="9" height="6" viewBox="0 0 9 6"><path d="M1 5 L4.5 1.2 L8 5" fill="none" stroke="#333" stroke-width="0.9"/></svg>
<div class="a" style="left:71.1px;top:145.1px;width:216.7px;height:11.6px;border:1px solid #b9b9b9;background:#fff"></div>
<div class="t" style="left:79.50px;top:148.87px;font-size:6.9px;font-weight:normal;color:#3a3a3a;transform-origin:0 5.93px;transform:scaleY(0.89);">EU-27</div>
<svg class="a" style="left:277.3px;top:150.6px" width="4" height="3" viewBox="0 0 4 3"><path d="M0.3 0.5 L2 2.5 L3.7 0.5Z" fill="#555"/></svg>
<div class="a" style="left:296.2px;top:155px;width:1.2px;height:556px;background:#dedede"></div>
<div class="a" style="left:93px;top:168px;width:175.4px;height:1px;background:#d4d4d4"></div>
<div class="t" style="left:180.25px;top:175.38px;font-size:6.88px;font-weight:normal;color:#222;transform-origin:0 5.92px;transform:translateX(-50%) scaleY(0.89);">Conservation status of selected Annex I habitats, based on EU habitats</div>
<div class="t" style="left:180.25px;top:183.98px;font-size:6.88px;font-weight:normal;color:#222;transform-origin:0 5.92px;transform:translateX(-50%) scaleY(0.89);">assessments</div>
<div class="t" style="left:180.25px;top:192.68px;font-size:6.88px;font-weight:normal;color:#222;transform-origin:0 5.92px;transform:translateX(-50%) scaleY(0.89);">(the number of assessments is indicated in brackets)</div>
<svg class="a" style="left:0;top:0" width="298" height="712" viewBox="0 0 298 712"><path d="M236.20 275.70 A56.0 49.84 0 0 1 124.67 282.12 L146.48 279.60 A34.0 30.26 0 0 0 214.20 275.70 Z" fill="#dd5531" stroke="#fff" stroke-width="0.6"/><path d="M124.67 282.12 A56.0 49.84 0 0 1 128.35 256.88 L148.72 264.27 A34.0 30.26 0 0 0 146.48 279.60 Z" fill="#17957d" stroke="#fff" stroke-width="0.6"/><path d="M128.35 256.88 A56.0 49.84 0 0 1 235.37 267.16 L213.70 270.52 A34.0 30.26 0 0 0 148.72 264.27 Z" fill="#f6e68e" stroke="#fff" stroke-width="0.6"/><path d="M235.37 267.16 A56.0 49.84 0 0 1 236.20 275.70 L214.20 275.70 A34.0 30.26 0 0 0 213.70 270.52 Z" fill="#a9aaad" stroke="#fff" stroke-width="0.6"/></svg>
<div class="t" style="left:170.50px;top:217.40px;font-size:5.0px;font-weight:normal;color:#777;transform-origin:0 4.30px;transform:scaleY(0.89);">Poor 41.1% (30)</div>
<div class="t" style="left:89.70px;top:266.46px;font-size:4.7px;font-weight:normal;color:#777;transform-origin:0 4.04px;transform:scaleY(0.89);">Good 8.2% (6)</div>
<div class="t" style="left:239.30px;top:267.93px;font-size:5.2px;font-weight:normal;color:#777;transform-origin:0 4.47px;transform:scaleY(0.89);">Unknown 2.7% (2)</div>
<div class="t" style="left:168.70px;top:327.70px;font-size:5.0px;font-weight:normal;color:#777;transform-origin:0 4.30px;transform:scaleY(0.89);">Bad 47.9% (35)</div>
<div class="a" style="left:81.9px;top:343px;width:10px;height:9px;background:#17957d;border-radius:1.5px"></div>
<div class="t" style="left:95.70px;top:344.78px;font-size:6.3px;font-weight:normal;color:#666;transform-origin:0 5.42px;transform:scaleY(0.89);">Good</div>
<div class="a" style="left:132.0px;top:343px;width:10px;height:9px;background:#a9aaad;border-radius:1.5px"></div>
<div class="t" style="left:146.40px;top:344.78px;font-size:6.3px;font-weight:normal;color:#666;transform-origin:0 5.42px;transform:scaleY(0.89);">Unknown</div>
<div class="a" style="left:182.0px;top:343px;width:10px;height:9px;background:#f6e68e;border-radius:1.5px"></div>
<div class="t" style="left:196.20px;top:344.78px;font-size:6.3px;font-weight:normal;color:#666;transform-origin:0 5.42px;transform:scaleY(0.89);">Poor</div>
<div class="a" style="left:232.4px;top:343px;width:10px;height:9px;background:#dd5531;border-radius:1.5px"></div>
<div class="t" style="left:246.70px;top:344.78px;font-size:6.3px;font-weight:normal;color:#666;transform-origin:0 5.42px;transform:scaleY(0.89);">Bad</div>
<div class="a" style="left:93px;top:359px;width:175.4px;height:1px;background:#d4d4d4"></div>
<svg class="a" style="left:71.5px;top:366.5px" width="5" height="6" viewBox="0 0 5 6"><path d="M4.2 0.5 L1 3 L4.2 5.5" fill="none" stroke="#bbb" stroke-width="0.7"/></svg>
<div class="t" style="left:172.40px;top:365.82px;font-size:6.6px;font-weight:normal;color:#333;transform-origin:0 5.68px;transform:scaleY(0.89);">1 of 2</div>
<svg class="a" style="left:283.5px;top:366.5px" width="5" height="6" viewBox="0 0 5 6"><path d="M0.8 0.5 L4 3 L0.8 5.5" fill="none" stroke="#333" stroke-width="0.7"/></svg>
<div class="t" style="left:70.20px;top:377.43px;font-size:6.13px;font-weight:bold;color:#111;transform-origin:0 5.27px;transform:scaleY(0.89);">Vegetated sea cliffs of the Mediterranean coasts with endemic Limonium</div>
<div class="t" style="left:70.20px;top:385.93px;font-size:6.13px;font-weight:bold;color:#111;transform-origin:0 5.27px;transform:scaleY(0.89);">spp.</div>
<svg class="a" style="left:152.9px;top:398px" width="7.5" height="7" viewBox="0 0 10 10"><path d="M4 1.5 H1.2 V8.8 H8.5 V6 M5.5 1 H9 V4.5 M9 1 L4.5 5.5" fill="none" stroke="#2a9687" stroke-width="1.1"/></svg>
<div class="t" style="left:165.50px;top:398.67px;font-size:6.9px;font-weight:normal;color:#2a9687;transform-origin:0 5.93px;transform:scaleY(0.89);">Explore more</div>
<div class="t" style="left:70.20px;top:410.07px;font-size:6.55px;font-weight:normal;color:#555;transform-origin:0 5.63px;transform:scaleY(0.89);">Vegetated cliffs and rocky shores of the Mediterranean, of the Mediterraneo-</div>
<div class="t" style="left:70.20px;top:418.45px;font-size:6.45px;font-weight:normal;color:#555;transform-origin:0 5.55px;transform:scaleY(0.89);">temperate eastern Atlantic (south-western Iberia) and of the Black Sea</div>
<div class="t" style="left:70.20px;top:426.05px;font-size:6.45px;font-weight:normal;color:#555;transform-origin:0 5.55px;transform:scaleY(0.89);">(Crithmo-Limonietalia)</div>
</body></html>
